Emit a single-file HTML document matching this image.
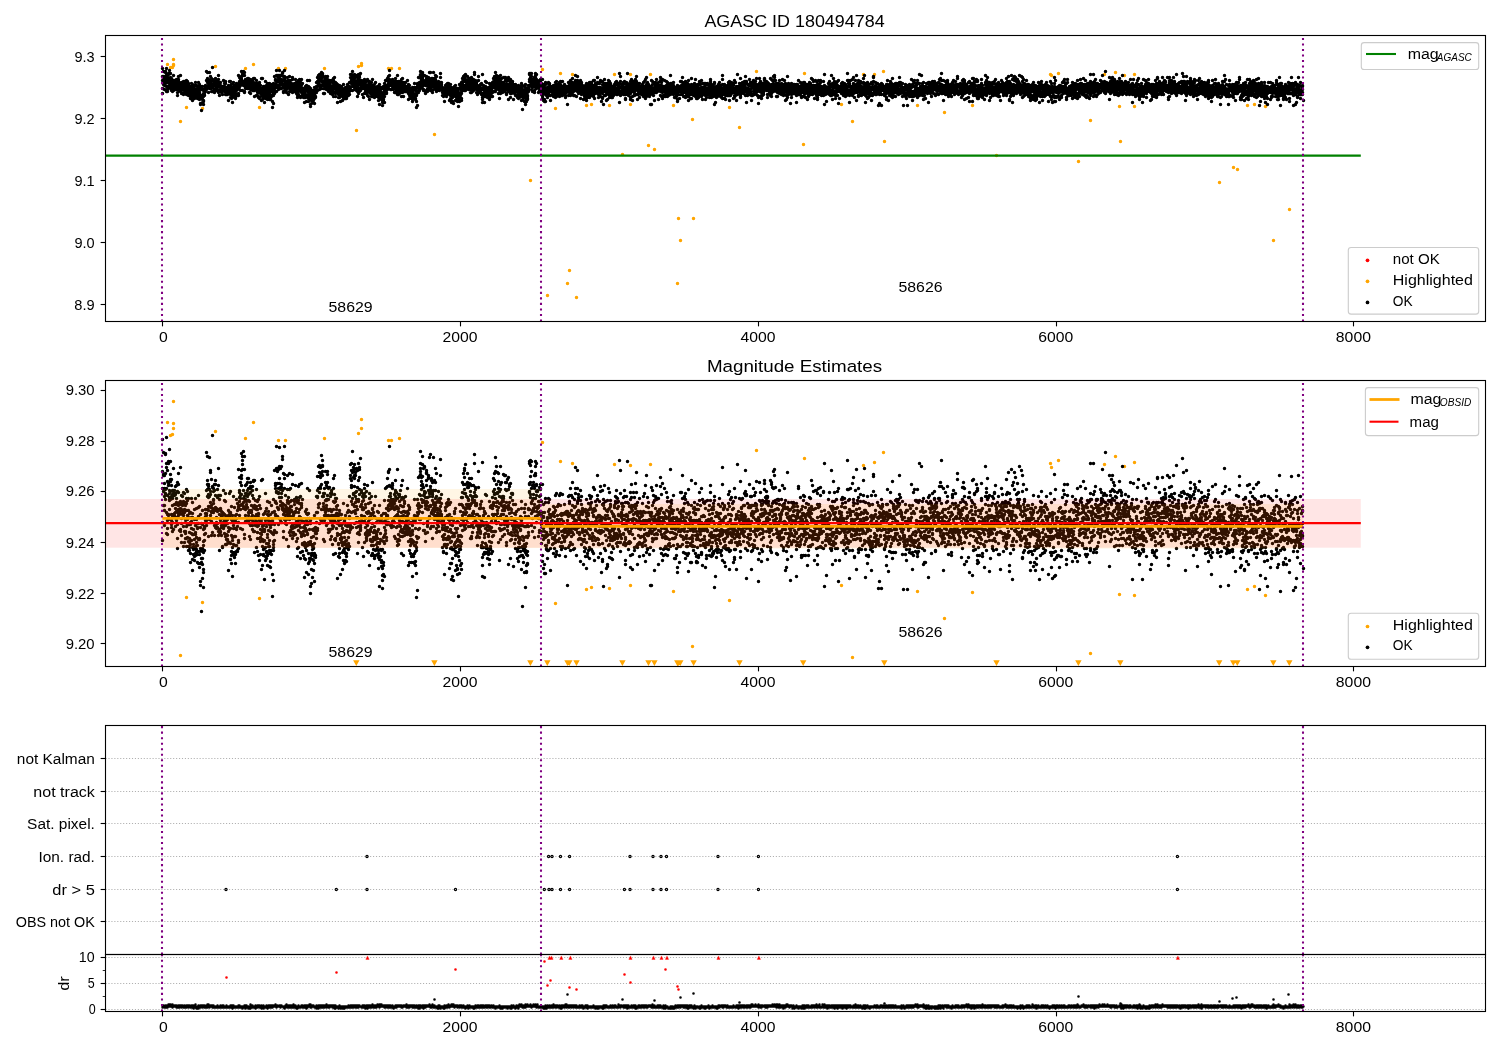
<!DOCTYPE html>
<html><head><meta charset="utf-8"><title>AGASC ID 180494784</title>
<style>html,body{margin:0;padding:0;background:#fff;overflow:hidden}svg{display:block;will-change:transform}text{font-family:"Liberation Sans",sans-serif}</style></head><body>
<svg width="1500" height="1050" viewBox="0 0 1500 1050">
<rect width="1500" height="1050" fill="#fff"/>
<defs>
<clipPath id="c1"><rect x="105.5" y="35.5" width="1380.0" height="286.0"/></clipPath>
<clipPath id="c2"><rect x="105.5" y="380.5" width="1380.0" height="286.0"/></clipPath>
<clipPath id="c3"><rect x="105.5" y="725.5" width="1380.0" height="229.0"/></clipPath>
<clipPath id="c4"><rect x="105.5" y="954.5" width="1380.0" height="57.0"/></clipPath>
</defs>
<g clip-path="url(#c1)">
<path d="M167.5 64.5h0m3 3h0m2 0h0m1-8h0m0 5h0m0 1h0m7 56h0m6-14h0m16 1h0m13-42h0m30 2h0m8-4h0m6 43h0m19-39h0m7 0h0m39 0h0m32 62h0m2-64h0m3-3h0m0 2h0m27 3h0m3 0h0m8 0h0m35 66h0m96 46h0m12-111h0m5 226h0m8-187h0m5-35h0m7 210h0m2-13h0m3-196h0m4 223h0m10-192h0m5-1h0m18 1h0m5-31h0m8 80h0m8-80h0m0 30h0m18 41h0m2-71h0m4 75h0m19-44h0m4 178h0m1-65h0m2 22h0m12-121h0m1 99h0m36-111h0m10 20h0m17-56h0m47 73h0m1-71h0m37 31h0m11 17h0m11-47h0m11 0h0m9-3h0m1 70h0m33-36h0m27 7h0m28-7h0m24 50h0m54-81h0m1 1h0m7-2h0m20 88h0m12-41h0m14-46h0m11-2h0m4 34h0m1 35h0m4-66h0m10-1h0m0 32h0m85 76h0m14-15h0m4 2h0m10-64h0m7-1h0m11 2h0m8 134h0m16-31h0" stroke="#ffa500" stroke-width="3.5" stroke-linecap="round" fill="none"/>
<path d="M162.5 76.5h0m0 4h0m0 8h0m0 5h0m0-25h0m1 3h0m0 10h0m0-4h0m0 7h0m0-7h0m0-1h0m1 8h0m0 1h0m0-5h0m0-3h0m0 12h0m0-7h0m0-3h0m1 4h0m0-11h0m0 8h0m0-9h0m0 10h0m0 1h0m0-6h0m1 10h0m0-12h0m0 1h0m0-7h0m0 23h0m0-11h0m1-2h0m0 4h0m0 6h0m0 3h0m0-1h0m0-14h0m0 10h0m1-7h0m0-5h0m0 5h0m0 7h0m0-13h0m0 14h0m0 1h0m1-6h0m0 3h0m0-2h0m0-3h0m0-10h0m0 13h0m0-2h0m1 0h0m0-8h0m0 10h0m0-5h0m0-1h0m0 1h0m1 12h0m0-4h0m0-8h0m0 11h0m0-7h0m0 6h0m0-9h0m1 2h0m0 7h0m0-5h0m0 8h0m0-7h0m0 3h0m0-6h0m1 5h0m0-11h0m0 7h0m0 8h0m0-10h0m0 1h0m1 3h0m0 2h0m0 1h0m0 0h0m0-7h0m0 2h0m0 5h0m1-6h0m0 5h0m0-1h0m0 4h0m0-2h0m0-7h0m0 2h0m1 6h0m0-5h0m0 1h0m0-1h0m0-4h0m0 5h0m0 2h0m1 3h0m0-10h0m0 16h0m0-14h0m0 11h0m0-5h0m1-6h0m0 5h0m0 1h0m0-2h0m0-9h0m0 3h0m0 5h0m1 2h0m0 4h0m0-6h0m0 3h0m0-1h0m0 0h0m0-2h0m1 7h0m0-6h0m0 5h0m0-15h0m0 9h0m0-1h0m1-1h0m0 3h0m0 7h0m0-5h0m0-3h0m0 9h0m0-4h0m1-5h0m0-2h0m0 2h0m0 2h0m0-2h0m0 2h0m0 0h0m1-3h0m0 11h0m0-13h0m0 3h0m0 5h0m0-5h0m0 3h0m1 6h0m0-7h0m0-1h0m0 6h0m0-10h0m0 5h0m1 4h0m0-7h0m0 5h0m0-4h0m0 7h0m0-3h0m0 4h0m1-7h0m0 9h0m0-12h0m0 7h0m0-5h0m0 8h0m0-12h0m1 3h0m0 9h0m0-5h0m0 2h0m0-8h0m0 7h0m1-5h0m0 11h0m0-5h0m0 6h0m0-10h0m0 2h0m0 6h0m1-1h0m0-1h0m0-5h0m0 3h0m0 4h0m0 1h0m0 1h0m1-7h0m0 1h0m0 7h0m0 2h0m0-12h0m0 8h0m0-5h0m1 2h0m0-1h0m0-2h0m0-1h0m0 6h0m0-10h0m1 11h0m0 3h0m0-6h0m0-4h0m0-1h0m0-2h0m0 16h0m1-9h0m0 3h0m0-4h0m0 4h0m0 1h0m0 1h0m0-1h0m1 1h0m0 2h0m0-5h0m0 4h0m0-12h0m0 3h0m1 8h0m0-5h0m0 5h0m0-2h0m0-3h0m0-9h0m0 7h0m1-4h0m0 10h0m0-3h0m0-4h0m0 6h0m0 1h0m0-2h0m1 5h0m0-4h0m0-4h0m0 6h0m0 0h0m0-7h0m0 1h0m1-1h0m0 9h0m0-16h0m0 3h0m0 2h0m0 6h0m1 2h0m0-3h0m0 1h0m0-9h0m0 15h0m0-3h0m0-3h0m1-4h0m0 15h0m0-9h0m0 9h0m0-1h0m0-17h0m0 12h0m1-1h0m0-9h0m0 7h0m0 3h0m0-9h0m0 21h0m1-13h0m0-2h0m0 0h0m0-9h0m0 16h0m0-13h0m0 10h0m1-6h0m0 1h0m0 10h0m0-4h0m0-10h0m0 11h0m0-5h0m1-5h0m0 4h0m0-4h0m0-1h0m0 3h0m0-3h0m0-1h0m1-1h0m0-3h0m0 1h0m0 5h0m0-4h0m0 4h0m1-2h0m0-3h0m0 1h0m0 0h0m0-7h0m0-9h0m0 17h0m1-3h0m0 0h0m0-13h0m0 6h0m0 1h0m0 1h0m0 2h0m1 0h0m0 10h0m0-13h0m0 6h0m0-3h0m0-2h0m0 4h0m1 0h0m0-2h0m0 6h0m0-16h0m0 16h0m0-8h0m1 1h0m0 2h0m0-7h0m0 5h0m0 4h0m0-9h0m0 11h0m1-1h0m0 5h0m0-13h0m0 8h0m0 2h0m0-4h0m0 4h0m1-3h0m0 1h0m0 5h0m0-11h0m0-13h0m0 13h0m1 1h0m0 3h0m0-1h0m0 3h0m0-6h0m0 5h0m0-2h0m1 6h0m0 3h0m0-13h0m0 6h0m0 0h0m0 0h0m0-5h0m1 5h0m0 0h0m0-3h0m0 8h0m0-12h0m0 11h0m0-10h0m1 9h0m0-3h0m0 5h0m0-5h0m0 2h0m0 2h0m1 0h0m0-7h0m0 4h0m0 4h0m0-8h0m0-2h0m0 5h0m1-10h0m0 10h0m0 7h0m0-13h0m0 6h0m0-3h0m0 9h0m1-5h0m0-4h0m0 9h0m0 4h0m0-12h0m0 7h0m1-3h0m0 4h0m0-3h0m0-3h0m0-3h0m0 3h0m0 6h0m1-4h0m0 0h0m0 2h0m0-3h0m0 6h0m0-2h0m0-4h0m1 0h0m0 0h0m0 3h0m0-2h0m0 3h0m0 4h0m0 0h0m1-8h0m0 2h0m0 2h0m0-1h0m0 0h0m0-9h0m1 7h0m0 1h0m0 3h0m0-5h0m0-3h0m0 5h0m0-2h0m1-3h0m0 6h0m0-8h0m0 13h0m0-7h0m0 1h0m0 4h0m1 1h0m0-6h0m0 4h0m0-3h0m0 4h0m0 2h0m1-5h0m0 4h0m0-1h0m0 2h0m0-6h0m0 5h0m0 0h0m1 7h0m0-13h0m0 0h0m0 13h0m0-10h0m0-5h0m0 6h0m1 2h0m0-6h0m0-1h0m0 4h0m0-3h0m0 6h0m0-12h0m1 16h0m0-16h0m0 5h0m0 0h0m0 8h0m0-4h0m1 1h0m0 5h0m0-12h0m0 4h0m0 10h0m0-3h0m0-3h0m1 4h0m0-2h0m0-2h0m0 1h0m0 9h0m0-14h0m0-1h0m1 3h0m0-8h0m0 6h0m0 1h0m0 5h0m0-7h0m1 9h0m0-11h0m0 7h0m0 4h0m0 0h0m0 1h0m0-1h0m1 0h0m0 2h0m0-10h0m0 6h0m0-4h0m0-3h0m0 5h0m1 3h0m0-5h0m0-3h0m0 7h0m0-4h0m0-4h0m0-3h0m1 12h0m0-6h0m0 6h0m0 0h0m0-11h0m0 1h0m1 0h0m0-1h0m0 4h0m0 5h0m0 0h0m0-18h0m0 20h0m1-8h0m0-6h0m0 0h0m0 2h0m0-1h0m0 2h0m0-7h0m1 8h0m0-6h0m0 5h0m0 6h0m0-8h0m0 0h0m1-6h0m0 3h0m0 2h0m0-4h0m0 7h0m0-13h0m0 6h0m1-4h0m0 2h0m0 0h0m0-1h0m0 10h0m0 6h0m0-18h0m1 13h0m0-3h0m0-11h0m0 12h0m0 2h0m0-2h0m0-2h0m1-6h0m0 17h0m0-9h0m0-11h0m0 19h0m0-9h0m1 6h0m0-1h0m0-2h0m0-6h0m0 2h0m0 2h0m0 2h0m1-1h0m0-3h0m0 4h0m0-1h0m0-3h0m0-2h0m0 4h0m1-5h0m0 7h0m0 3h0m0-6h0m0-3h0m0 2h0m1 2h0m0 4h0m0-6h0m0 7h0m0-10h0m0 8h0m0-6h0m1 3h0m0-2h0m0 5h0m0 6h0m0-9h0m0 3h0m0 2h0m1-9h0m0 9h0m0-7h0m0-1h0m0-1h0m0 14h0m0-4h0m1-2h0m0-2h0m0 2h0m0-1h0m0-2h0m0 4h0m1-6h0m0 8h0m0-10h0m0 9h0m0-2h0m0-7h0m0 8h0m1-6h0m0 0h0m0 8h0m0-5h0m0 3h0m0-10h0m0 0h0m1 18h0m0-6h0m0-12h0m0 7h0m0-1h0m0 0h0m1 3h0m0 1h0m0-5h0m0 6h0m0-5h0m0 3h0m0 2h0m1-1h0m0-8h0m0 4h0m0 2h0m0 9h0m0-7h0m0-3h0m1 0h0m0-2h0m0 4h0m0 4h0m0 4h0m0-3h0m0-3h0m1-2h0m0-1h0m0-3h0m0 14h0m0-8h0m0-3h0m1-4h0m0 16h0m0-6h0m0-4h0m0 1h0m0-1h0m0-4h0m1 8h0m0-4h0m0 2h0m0-5h0m0 11h0m0-5h0m0 2h0m1-2h0m0-2h0m0-1h0m0 12h0m0-22h0m0 10h0m0 1h0m1 2h0m0-13h0m0 11h0m0 10h0m0-5h0m0-2h0m1 1h0m0-7h0m0 3h0m0 8h0m0-2h0m0 1h0m0-6h0m1 0h0m0-1h0m0 2h0m0 4h0m0-9h0m0 16h0m0-9h0m1-5h0m0 6h0m0 4h0m0-1h0m0-11h0m0-5h0m1 8h0m0-4h0m0 11h0m0-1h0m0-2h0m0-4h0m0 8h0m1 2h0m0-13h0m0 6h0m0-9h0m0 13h0m0-5h0m0-3h0m1 2h0m0-3h0m0 7h0m0 2h0m0-10h0m0 7h0m0-5h0m1 7h0m0-2h0m0 1h0m0-5h0m0-6h0m0 16h0m1-3h0m0 2h0m0-12h0m0 2h0m0 11h0m0-9h0m0 0h0m1-6h0m0 12h0m0-1h0m0 0h0m0-4h0m0-2h0m0-1h0m1 19h0m0-19h0m0 3h0m0 10h0m0-13h0m0-2h0m1 5h0m0 4h0m0 0h0m0-2h0m0 10h0m0-9h0m0-11h0m1 6h0m0 2h0m0-5h0m0 7h0m0-17h0m0 14h0m0-4h0m1-7h0m0 4h0m0-3h0m0 7h0m0-1h0m0-7h0m0 5h0m1 7h0m0-7h0m0-3h0m0-11h0m0 11h0m0-6h0m1 1h0m0 9h0m0-9h0m0 3h0m0-4h0m0 12h0m0 0h0m1-2h0m0-4h0m0-1h0m0-5h0m0 10h0m0 4h0m0-8h0m1 6h0m0-9h0m0-8h0m0 12h0m0-7h0m0 4h0m1 5h0m0-9h0m0 5h0m0 3h0m0-3h0m0 8h0m0-8h0m1 8h0m0-13h0m0 5h0m0 2h0m0-3h0m0 2h0m0 3h0m1 1h0m0-13h0m0 9h0m0 3h0m0 1h0m0 0h0m0-12h0m1 19h0m0-8h0m0 7h0m0-6h0m0-9h0m0 10h0m1-8h0m0 8h0m0-16h0m0 16h0m0-10h0m0 12h0m0-8h0m1 8h0m0-2h0m0 3h0m0-2h0m0-5h0m0 2h0m0 1h0m1 0h0m0 0h0m0 1h0m0 2h0m0 1h0m0 3h0m1-9h0m0-3h0m0 5h0m0-8h0m0 9h0m0-3h0m0 1h0m1-2h0m0 5h0m0-1h0m0-1h0m0-1h0m0 10h0m0-8h0m1 0h0m0-10h0m0 10h0m0-6h0m0 5h0m0 6h0m0-3h0m1-8h0m0 4h0m0 6h0m0-3h0m0 4h0m0-8h0m1 6h0m0-3h0m0-3h0m0 7h0m0-5h0m0 2h0m0-2h0m1 2h0m0 3h0m0-1h0m0 2h0m0 1h0m0-13h0m0-2h0m1 9h0m0 1h0m0 4h0m0-5h0m0 5h0m0-2h0m1 1h0m0-6h0m0-1h0m0 4h0m0-4h0m0 0h0m0 8h0m1-5h0m0 3h0m0-3h0m0 5h0m0-12h0m0 4h0m0 0h0m1 10h0m0-4h0m0-6h0m0 2h0m0 3h0m0 1h0m0-7h0m1 15h0m0-5h0m0 3h0m0-11h0m0 11h0m0-6h0m1-6h0m0 7h0m0-2h0m0 1h0m0-3h0m0-6h0m0 14h0m1-9h0m0-3h0m0-3h0m0 10h0m0-5h0m0 3h0m0 0h0m1-5h0m0 15h0m0-7h0m0-3h0m0 4h0m0 5h0m1-12h0m0 7h0m0-12h0m0 13h0m0-7h0m0-1h0m0 4h0m1 7h0m0-1h0m0-3h0m0 3h0m0-11h0m0 11h0m0-6h0m1 0h0m0 8h0m0 1h0m0-7h0m0 1h0m0 0h0m0 0h0m1 11h0m0-5h0m0-4h0m0-1h0m0-3h0m0 5h0m1-8h0m0 11h0m0-7h0m0 0h0m0 4h0m0-5h0m0 6h0m1-10h0m0 5h0m0-2h0m0 13h0m0-11h0m0 5h0m0-9h0m1-6h0m0 6h0m0 5h0m0-3h0m0 1h0m0 5h0m0-3h0m1 10h0m0-13h0m0 8h0m0-3h0m0 5h0m0-12h0m1 8h0m0-14h0m0 17h0m0 1h0m0-8h0m0-3h0m0 7h0m1-5h0m0-1h0m0 9h0m0 7h0m0 2h0m0-13h0m0 0h0m1 7h0m0-6h0m0 2h0m0 0h0m0-4h0m0 11h0m1-8h0m0-1h0m0 3h0m0-1h0m0 6h0m0-6h0m0-6h0m1 2h0m0 8h0m0-6h0m0-4h0m0 4h0m0 4h0m0-3h0m1 1h0m0-9h0m0 11h0m0-8h0m0 7h0m0 6h0m0-9h0m1-4h0m0 1h0m0-1h0m0 6h0m0-6h0m0 7h0m1-15h0m0 0h0m0 10h0m0-4h0m0 3h0m0-5h0m0 0h0m1 4h0m0-8h0m0 4h0m0-4h0m0-5h0m0 4h0m0 9h0m1-5h0m0-10h0m0 9h0m0-4h0m0 4h0m0 0h0m1-3h0m0-5h0m0 5h0m0-4h0m0 12h0m0-15h0m0 10h0m1-8h0m0 1h0m0 10h0m0-12h0m0 5h0m0 8h0m0-8h0m1-4h0m0 12h0m0-9h0m0 9h0m0-3h0m0-13h0m0 4h0m1 6h0m0-5h0m0-2h0m0-2h0m0 1h0m0 2h0m1 9h0m0-4h0m0 3h0m0 9h0m0-5h0m0-6h0m0 2h0m1 3h0m0-7h0m0 8h0m0-3h0m0-4h0m0 6h0m0 6h0m1-7h0m0-1h0m0-7h0m0 5h0m0 2h0m0-9h0m1 8h0m0-1h0m0 0h0m0 6h0m0-2h0m0-8h0m0 6h0m1-5h0m0-1h0m0 10h0m0-7h0m0-6h0m0 0h0m0 7h0m1 8h0m0-4h0m0 0h0m0-2h0m0-2h0m0-3h0m0 10h0m1-3h0m0-2h0m0 5h0m0-10h0m0 7h0m0 3h0m1-9h0m0 4h0m0 5h0m0-2h0m0-6h0m0 0h0m0 11h0m1-12h0m0 11h0m0-11h0m0 7h0m0-8h0m0 7h0m0-1h0m1 1h0m0 2h0m0 1h0m0-2h0m0-1h0m0 7h0m1-6h0m0 1h0m0-9h0m0 3h0m0 2h0m0-7h0m0 18h0m1-14h0m0 2h0m0 3h0m0-10h0m0 11h0m0 4h0m0-9h0m1 0h0m0-1h0m0 5h0m0 6h0m0-1h0m0 4h0m0-8h0m1-2h0m0-2h0m0 1h0m0 2h0m0-4h0m0 7h0m1 12h0m0-11h0m0-5h0m0 2h0m0-1h0m0 5h0m0-8h0m1 10h0m0 3h0m0-10h0m0 1h0m0 3h0m0-3h0m0 5h0m1 4h0m0-2h0m0 1h0m0-10h0m0 3h0m0-4h0m1 7h0m0-4h0m0 4h0m0-1h0m0-5h0m0 15h0m0-10h0m1-4h0m0 6h0m0-1h0m0 1h0m0-7h0m0 1h0m0 2h0m1 11h0m0-11h0m0 5h0m0 0h0m0 2h0m0-5h0m0-1h0m1 3h0m0 2h0m0-1h0m0 4h0m0-14h0m0 6h0m1 8h0m0-10h0m0 7h0m0-4h0m0 1h0m0 3h0m0-7h0m1 1h0m0 7h0m0-9h0m0 6h0m0 1h0m0-7h0m0 11h0m1-5h0m0 1h0m0 3h0m0 1h0m0-8h0m0 6h0m1-7h0m0 2h0m0 0h0m0 3h0m0 0h0m0-8h0m0-2h0m1 2h0m0 8h0m0-1h0m0-1h0m0 3h0m0-6h0m0 2h0m1 3h0m0-3h0m0 0h0m0-4h0m0 0h0m0-5h0m0 4h0m1 4h0m0-13h0m0 13h0m0-16h0m0 15h0m0-12h0m1 6h0m0-5h0m0 2h0m0 6h0m0-10h0m0 3h0m0-5h0m1 10h0m0-2h0m0-6h0m0 0h0m0 14h0m0-19h0m0 5h0m1-1h0m0 2h0m0 4h0m0 3h0m0 2h0m0-5h0m1-2h0m0-4h0m0 2h0m0-3h0m0 10h0m0 5h0m0-12h0m1 9h0m0-3h0m0-6h0m0 4h0m0-5h0m0 10h0m0-4h0m1 6h0m0-13h0m0 6h0m0 3h0m0 3h0m0 3h0m0-7h0m1-7h0m0 9h0m0-5h0m0 11h0m0 5h0m0-9h0m1-9h0m0 13h0m0 2h0m0-10h0m0 6h0m0-15h0m0 9h0m1-8h0m0 7h0m0-2h0m0 11h0m0-16h0m0 2h0m0 11h0m1 2h0m0-1h0m0-4h0m0 3h0m0 2h0m0-17h0m0 17h0m1-3h0m0-7h0m0 7h0m0-3h0m0 4h0m0-7h0m1 2h0m0 2h0m0 3h0m0-3h0m0 0h0m0 9h0m0-12h0m1 0h0m0 0h0m0 5h0m0 10h0m0-14h0m0-1h0m0 3h0m1-5h0m0 1h0m0 12h0m0-6h0m0 1h0m0-9h0m1 12h0m0-9h0m0 2h0m0 1h0m0 5h0m0-3h0m0 4h0m1-2h0m0 2h0m0-5h0m0 7h0m0-1h0m0 0h0m0-11h0m1-2h0m0 16h0m0-9h0m0 5h0m0-1h0m0-1h0m0 3h0m1-6h0m0 5h0m0 0h0m0-7h0m0 4h0m0 8h0m1 3h0m0-17h0m0 6h0m0-7h0m0 10h0m0-4h0m0 4h0m1-4h0m0 4h0m0-5h0m0 7h0m0-3h0m0-6h0m0 9h0m1-6h0m0 7h0m0 2h0m0-7h0m0 4h0m0-11h0m1 3h0m0 11h0m0-7h0m0-4h0m0-6h0m0 14h0m0-7h0m1 9h0m0-9h0m0 6h0m0-1h0m0 5h0m0-4h0m0 2h0m1-10h0m0 6h0m0-3h0m0 5h0m0-3h0m0 3h0m0 5h0m1-5h0m0 4h0m0-14h0m0 9h0m0 4h0m0-3h0m1 2h0m0 1h0m0-3h0m0 0h0m0-5h0m0 4h0m0-3h0m1 4h0m0-4h0m0-2h0m0 4h0m0 5h0m0 1h0m0-3h0m1 7h0m0-10h0m0 5h0m0 1h0m0 1h0m0-11h0m1 7h0m0-5h0m0 5h0m0-9h0m0 13h0m0 0h0m0 7h0m1-9h0m0-7h0m0 3h0m0-3h0m0 5h0m0 4h0m0-10h0m1 8h0m0-7h0m0 10h0m0-5h0m0-6h0m0 12h0m0-1h0m1 7h0m0-3h0m0-7h0m0 4h0m0 2h0m0-13h0m1 4h0m0 9h0m0-2h0m0-1h0m0-12h0m0 6h0m0 1h0m1 9h0m0-11h0m0-3h0m0 2h0m0 6h0m0-3h0m0-10h0m1 8h0m0-1h0m0-4h0m0 2h0m0-1h0m0-7h0m1 5h0m0 4h0m0 4h0m0-13h0m0 12h0m0-5h0m0 0h0m1 0h0m0-9h0m0 11h0m0-2h0m0 0h0m0-7h0m0 8h0m1-12h0m0 10h0m0-10h0m0 8h0m0 4h0m0-5h0m0 1h0m1 0h0m0-14h0m0 5h0m0 7h0m0 3h0m0-6h0m1 5h0m0-3h0m0 2h0m0 1h0m0-4h0m0 9h0m0-7h0m1 7h0m0-6h0m0 6h0m0-5h0m0 1h0m0-1h0m0 0h0m1 4h0m0-9h0m0 0h0m0 1h0m0 3h0m0 5h0m1-5h0m0 4h0m0-2h0m0 4h0m0-1h0m0-5h0m0 1h0m1 1h0m0 0h0m0-1h0m0 3h0m0 1h0m0-7h0m0 11h0m1-5h0m0-4h0m0-1h0m0 10h0m0-11h0m0-3h0m0 3h0m1 0h0m0 4h0m0-3h0m0 8h0m0-6h0m0 3h0m1 2h0m0 4h0m0-8h0m0 9h0m0-19h0m0 8h0m0 3h0m1 1h0m0-1h0m0-1h0m0 9h0m0-2h0m0-11h0m0 10h0m1-3h0m0-6h0m0 1h0m0 6h0m0 4h0m0-11h0m1 6h0m0-1h0m0-6h0m0 11h0m0-8h0m0 6h0m0-1h0m1-2h0m0-4h0m0 3h0m0 0h0m0 4h0m0 6h0m0-17h0m1 5h0m0-2h0m0 9h0m0-3h0m0-10h0m0 10h0m0 4h0m1-7h0m0 5h0m0-3h0m0 9h0m0-14h0m0 4h0m1 5h0m0-5h0m0 2h0m0 2h0m0-7h0m0 8h0m0-7h0m1 7h0m0-9h0m0 7h0m0 0h0m0-3h0m0 4h0m0 1h0m1 0h0m0-4h0m0 2h0m0-2h0m0 0h0m0 1h0m1 0h0m0 3h0m0-5h0m0 4h0m0-3h0m0-7h0m0 9h0m1-3h0m0-2h0m0 4h0m0 11h0m0-6h0m0-2h0m0-1h0m1 1h0m0 4h0m0-10h0m0 5h0m0-2h0m0-3h0m0 13h0m1-4h0m0-2h0m0-1h0m0-3h0m0 8h0m0-4h0m1-4h0m0 4h0m0 5h0m0-6h0m0 2h0m0 5h0m0-4h0m1-3h0m0-1h0m0-3h0m0 6h0m0-2h0m0 10h0m0-12h0m1 4h0m0 5h0m0-5h0m0-5h0m0 9h0m0-1h0m0-8h0m1-5h0m0 4h0m0 7h0m0 4h0m0 0h0m0-2h0m1-1h0m0-7h0m0 6h0m0-4h0m0-2h0m0 11h0m0-1h0m1 3h0m0-9h0m0 3h0m0-1h0m0 13h0m0-20h0m0 6h0m1 12h0m0-21h0m0 8h0m0-5h0m0-4h0m0 3h0m1-2h0m0-7h0m0 15h0m0-15h0m0 13h0m0-4h0m0-1h0m1 5h0m0-4h0m0-4h0m0 2h0m0 1h0m0-8h0m0 11h0m1-6h0m0-11h0m0 4h0m0-1h0m0 14h0m0-11h0m0-1h0m1 4h0m0 3h0m0-5h0m0 1h0m0 5h0m0-7h0m1 6h0m0-6h0m0 2h0m0 7h0m0-14h0m0 7h0m0-5h0m1 16h0m0-15h0m0 8h0m0-1h0m0 1h0m0-3h0m0 9h0m1-8h0m0-6h0m0 15h0m0-9h0m0 0h0m0-6h0m1 9h0m0 1h0m0-3h0m0 2h0m0 9h0m0-2h0m0-10h0m1-3h0m0 1h0m0-3h0m0 0h0m0 8h0m0-1h0m0-7h0m1 13h0m0 0h0m0-1h0m0 3h0m0-6h0m0-2h0m0-1h0m1 3h0m0-8h0m0 1h0m0-1h0m0 7h0m0-3h0m1 0h0m0-9h0m0 15h0m0 0h0m0-6h0m0 1h0m0-1h0m1-1h0m0 1h0m0 3h0m0 6h0m0-18h0m0 12h0m0-4h0m1 6h0m0 3h0m0-11h0m0 3h0m0 5h0m0-8h0m1 3h0m0 4h0m0-3h0m0 0h0m0 10h0m0-9h0m0-5h0m1 7h0m0-5h0m0 3h0m0-11h0m0 14h0m0 3h0m0-5h0m1 4h0m0-4h0m0 0h0m0-6h0m0 8h0m0 1h0m0-2h0m1-5h0m0 4h0m0-9h0m0 10h0m0-3h0m0-3h0m1 3h0m0 5h0m0-2h0m0-9h0m0 15h0m0-1h0m0-7h0m1 2h0m0-2h0m0 3h0m0 2h0m0 2h0m0-1h0m0-4h0m1-4h0m0 5h0m0 1h0m0 1h0m0 1h0m0-6h0m1 2h0m0-2h0m0 0h0m0 1h0m0 2h0m0 1h0m0 3h0m1-8h0m0 3h0m0-8h0m0 10h0m0-1h0m0-13h0m0 13h0m1 2h0m0-1h0m0 1h0m0-2h0m0-2h0m0-2h0m0 5h0m1 3h0m0 5h0m0-6h0m0 1h0m0 2h0m0-5h0m1 3h0m0 2h0m0-4h0m0 4h0m0-4h0m0 8h0m0 0h0m1-7h0m0 5h0m0-2h0m0 2h0m0-4h0m0 1h0m0 10h0m1-14h0m0-2h0m0 4h0m0 5h0m0-4h0m0-5h0m1-1h0m0 8h0m0-8h0m0 12h0m0-1h0m0-2h0m0-3h0m1-6h0m0 5h0m0-2h0m0 5h0m0-9h0m0 11h0m0-2h0m1-5h0m0 1h0m0 4h0m0 1h0m0-1h0m0-2h0m0-7h0m1 17h0m0-8h0m0-8h0m0 8h0m0-6h0m0 2h0m1 2h0m0-6h0m0 5h0m0 9h0m0-3h0m0-2h0m0-3h0m1 4h0m0-6h0m0 3h0m0 7h0m0-11h0m0 15h0m0-9h0m1-4h0m0 12h0m0-6h0m0-3h0m0 5h0m0 5h0m1-7h0m0-3h0m0 11h0m0-12h0m0 4h0m0-7h0m0 4h0m1-6h0m0 8h0m0-2h0m0-6h0m0 5h0m0 3h0m0-8h0m1 14h0m0-15h0m0 10h0m0-5h0m0 6h0m0-3h0m0 2h0m1 1h0m0 3h0m0-6h0m0-2h0m0-1h0m0-2h0m1 6h0m0 6h0m0-12h0m0 12h0m0-10h0m0 11h0m0-9h0m1-4h0m0 9h0m0 9h0m0-12h0m0 2h0m0-4h0m0 0h0m1 6h0m0-14h0m0 11h0m0-2h0m0 8h0m0-8h0m1 6h0m0-7h0m0 1h0m0-4h0m0-3h0m0 8h0m0 1h0m1-11h0m0 14h0m0 2h0m0-18h0m0 11h0m0-1h0m0-4h0m1-6h0m0 7h0m0-2h0m0 3h0m0-9h0m0-3h0m0 6h0m1 4h0m0-3h0m0 4h0m0-10h0m0-3h0m0 10h0m1 4h0m0-15h0m0 2h0m0-1h0m0 13h0m0-8h0m0-1h0m1 5h0m0 4h0m0-15h0m0 12h0m0 4h0m0-9h0m0-2h0m1 6h0m0-1h0m0 0h0m0 4h0m0-2h0m0-1h0m0-3h0m1 0h0m0 2h0m0-4h0m0 8h0m0-9h0m0-3h0m1 13h0m0-2h0m0-4h0m0 1h0m0-4h0m0 3h0m0-4h0m1 6h0m0-7h0m0 6h0m0 3h0m0 0h0m0 0h0m0-8h0m1 0h0m0 13h0m0-3h0m0-7h0m0-1h0m0 3h0m1 0h0m0 8h0m0-13h0m0 13h0m0-3h0m0-12h0m0 10h0m1-4h0m0 4h0m0 4h0m0-5h0m0-3h0m0 6h0m0-7h0m1 0h0m0-3h0m0 7h0m0 2h0m0-2h0m0 1h0m0 3h0m1-3h0m0-4h0m0 0h0m0-9h0m0 7h0m0-9h0m1 12h0m0-2h0m0 0h0m0 2h0m0-4h0m0 0h0m0 8h0m1-4h0m0 2h0m0-4h0m0 7h0m0-5h0m0 8h0m0-4h0m1 3h0m0 3h0m0-2h0m0-1h0m0-2h0m0-3h0m1 4h0m0 0h0m0-14h0m0 14h0m0-1h0m0-9h0m0 9h0m1-2h0m0 0h0m0-2h0m0 7h0m0-2h0m0-1h0m0-2h0m1-2h0m0 0h0m0 6h0m0-2h0m0-5h0m0 5h0m0 2h0m1 3h0m0 0h0m0-6h0m0 6h0m0-5h0m0-6h0m1 5h0m0 5h0m0 6h0m0 3h0m0-28h0m0 23h0m0-3h0m1-6h0m0-3h0m0 4h0m0-2h0m0 9h0m0-9h0m0 8h0m1-9h0m0 0h0m0 16h0m0-10h0m0 4h0m0-5h0m1-5h0m0 4h0m0 3h0m0 3h0m0 0h0m0-15h0m0 10h0m1 4h0m0-1h0m0-6h0m0 2h0m0 4h0m0-12h0m0 7h0m1 1h0m0-1h0m0 0h0m0 8h0m0-8h0m0 7h0m0-1h0m1 1h0m0-5h0m0 4h0m0-3h0m0 4h0m0-9h0m1 6h0m0 6h0m0-9h0m0-7h0m0 14h0m0-7h0m0-1h0m1-5h0m0 11h0m0 0h0m0-1h0m0-9h0m0 5h0m0 5h0m1-2h0m0-3h0m0-2h0m0 2h0m0-6h0m0 12h0m1 0h0m0-5h0m0 1h0m0-6h0m0 1h0m0-5h0m0 3h0m1-1h0m0 3h0m0-6h0m0 2h0m0 1h0m0 7h0m0-13h0m1 13h0m0-10h0m0-5h0m0 4h0m0 6h0m0-5h0m0-3h0m1 10h0m0 3h0m0-9h0m0-10h0m0 16h0m0-12h0m1 7h0m0 6h0m0-8h0m0 3h0m0-5h0m0 7h0m0-11h0m1 8h0m0-7h0m0 10h0m0 1h0m0-6h0m0 0h0m0 4h0m1-9h0m0 12h0m0-3h0m0-7h0m0 2h0m0 13h0m1-6h0m0 3h0m0-8h0m0 16h0m0-14h0m0-3h0m0 6h0m1 2h0m0-10h0m0 14h0m0-13h0m0-5h0m0 15h0m0-3h0m1 2h0m0-3h0m0 1h0m0-9h0m0 5h0m0 1h0m0-2h0m1 10h0m0-7h0m0-3h0m0 1h0m0 0h0m0 7h0m1-8h0m0 3h0m0-3h0m0-5h0m0 6h0m0 3h0m0-4h0m1 7h0m0-12h0m0 8h0m0-1h0m0 6h0m0-2h0m0 3h0m1-11h0m0 9h0m0-11h0m0-1h0m0 8h0m0-1h0m1-3h0m0 7h0m0 6h0m0-15h0m0 8h0m0-3h0m0 9h0m1-5h0m0 0h0m0 1h0m0-4h0m0 5h0m0-1h0m0-11h0m1 6h0m0 7h0m0-14h0m0 7h0m0 1h0m0 14h0m0-19h0m1 9h0m0-2h0m0-8h0m0 7h0m0-7h0m0 5h0m1-2h0m0 15h0m0-18h0m0 12h0m0-6h0m0 8h0m0-8h0m1 0h0m0-4h0m0 7h0m0-2h0m0 5h0m0 2h0m0-6h0m1 2h0m0 3h0m0-9h0m0-2h0m0 8h0m0-8h0m1 8h0m0 1h0m0 0h0m0 0h0m0 0h0m0 9h0m0-15h0m1 4h0m0 3h0m0 2h0m0-7h0m0 2h0m0 3h0m0-3h0m1 4h0m0-8h0m0 2h0m0 6h0m0 3h0m0-6h0m0 1h0m1-1h0m0 0h0m0-2h0m0 3h0m0-2h0m0-2h0m1 5h0m0 0h0m0-2h0m0 6h0m0-6h0m0 8h0m0-2h0m1-2h0m0 5h0m0-3h0m0-6h0m0 3h0m0-3h0m0-4h0m1 7h0m0-3h0m0 5h0m0 3h0m0-10h0m0 6h0m0 0h0m1-3h0m0 0h0m0 3h0m0-6h0m0 9h0m0-7h0m1 11h0m0-15h0m0 11h0m0-13h0m0 6h0m0-2h0m0 1h0m1 6h0m0 2h0m0-2h0m0-5h0m0 20h0m0-17h0m0 2h0m1 1h0m0 3h0m0-3h0m0-2h0m0-1h0m0 5h0m1-2h0m0-1h0m0-9h0m0 1h0m0 3h0m0 12h0m0-9h0m1 12h0m0-9h0m0-6h0m0 5h0m0 2h0m0-9h0m0-3h0m1 15h0m0-5h0m0 7h0m0-1h0m0-4h0m0-4h0m0-3h0m1 6h0m0-6h0m0 9h0m0-2h0m0-4h0m0 7h0m1-12h0m0 2h0m0 0h0m0-4h0m0 6h0m0-6h0m0 6h0m1-10h0m0 0h0m0-7h0m0 5h0m0-6h0m0 6h0m0 6h0m1-11h0m0 3h0m0 5h0m0-9h0m0 9h0m0-3h0m1 5h0m0-11h0m0 7h0m0-4h0m0 10h0m0-3h0m0 6h0m1-3h0m0-7h0m0 6h0m0 2h0m0-4h0m0 8h0m0-12h0m1 2h0m0-2h0m0 6h0m0-3h0m0-3h0m0 6h0m0 1h0m1-2h0m0-4h0m0 5h0m0 7h0m0-2h0m0-13h0m1 2h0m0-4h0m0-2h0m0 4h0m0 5h0m0-6h0m0 11h0m1-1h0m0-5h0m0-2h0m0 0h0m0 9h0m0-14h0m0 8h0m1 3h0m0-4h0m0 3h0m0 1h0m0-4h0m0 6h0m1-4h0m0 9h0m0-6h0m0-1h0m0-1h0m0 3h0m0 5h0m1-2h0m0-4h0m0-3h0m0 8h0m0-7h0m0-2h0m0-2h0m1-1h0m0 7h0m0-6h0m0 0h0m0 2h0m0 5h0m0-5h0m1 1h0m0 5h0m0 3h0m0 3h0m0-5h0m0-2h0m1 4h0m0 5h0m0-10h0m0 12h0m0-8h0m0-11h0m0 13h0m1-5h0m0 3h0m0-3h0m0 13h0m0-16h0m0 9h0m0 0h0m1 8h0m0-2h0m0-7h0m0 0h0m0-1h0m0-5h0m1 6h0m0 2h0m0-2h0m0 9h0m0-19h0m0 6h0m0-4h0m1 11h0m0 0h0m0-6h0m0 5h0m0-2h0m0 0h0m0-1h0m1 0h0m0 1h0m0-5h0m0 8h0m0-8h0m0 10h0m0-9h0m1 7h0m0-13h0m0 1h0m0 10h0m0 0h0m0-7h0m1 0h0m0 1h0m0-2h0m0 4h0m0-6h0m0 0h0m0 6h0m1-2h0m0 4h0m0 0h0m0 9h0m0-13h0m0 3h0m0 5h0m1-5h0m0 1h0m0-2h0m0-3h0m0 2h0m0 1h0m1-2h0m0 7h0m0-2h0m0 0h0m0-3h0m0-1h0m0 3h0m1 5h0m0-6h0m0-4h0m0 2h0m0-3h0m0 1h0m0 7h0m1 2h0m0-8h0m0-2h0m0 1h0m0 6h0m0 0h0m0 1h0m1-11h0m0 4h0m0 7h0m0-2h0m0 6h0m0-8h0m1 6h0m0-14h0m0 8h0m0 7h0m0-8h0m0 5h0m0-4h0m1 1h0m0 1h0m0-3h0m0 2h0m0-6h0m0 3h0m0 6h0m1-2h0m0-2h0m0 1h0m0-6h0m0 7h0m0 2h0m1 3h0m0-7h0m0-2h0m0 5h0m0-10h0m0 6h0m0 1h0m1 0h0m0 0h0m0 5h0m0-13h0m0 8h0m0-5h0m0 2h0m1 7h0m0-4h0m0-2h0m0 1h0m0-2h0m0 9h0m0-4h0m1-10h0m0 5h0m0 9h0m0-4h0m0-2h0m0 5h0m1-2h0m0-6h0m0 0h0m0 2h0m0 0h0m0 2h0m0 2h0m1-1h0m0-7h0m0 6h0m0 3h0m0 0h0m0-3h0m0 0h0m1-4h0m0 11h0m0-5h0m0-2h0m0 5h0m0-6h0m1-3h0m0 0h0m0 0h0m0 5h0m0 1h0m0-6h0m0 4h0m1 1h0m0-1h0m0-2h0m0 3h0m0-2h0m0 15h0m0-18h0m1 5h0m0-5h0m0 4h0m0 1h0m0 4h0m0-8h0m0-5h0m1 5h0m0 7h0m0-10h0m0-1h0m0 3h0m0-4h0m1 8h0m0 5h0m0-2h0m0-2h0m0-11h0m0 10h0m0-1h0m1 1h0m0-1h0m0-3h0m0-4h0m0 10h0m0-3h0m0-2h0m1-9h0m0 9h0m0 0h0m0 4h0m0-7h0m0-2h0m0 12h0m1-4h0m0-3h0m0 1h0m0 7h0m0-8h0m0 4h0m1-2h0m0-4h0m0-2h0m0 0h0m0 6h0m0 6h0m0-7h0m1-7h0m0 3h0m0 6h0m0-15h0m0 5h0m0 10h0m0-2h0m1-2h0m0 0h0m0 2h0m0 8h0m0-6h0m0-1h0m1-9h0m0-4h0m0 8h0m0 7h0m0-2h0m0-3h0m0-3h0m1 4h0m0-2h0m0 5h0m0 3h0m0-10h0m0-1h0m0 0h0m1 5h0m0 5h0m0-3h0m0 2h0m0-4h0m0 4h0m0-3h0m1-2h0m0-3h0m0 6h0m0-9h0m0 12h0m0 6h0m1-16h0m0 12h0m0-5h0m0-1h0m0-4h0m0 2h0m0 7h0m1-2h0m0-1h0m0-5h0m0 1h0m0-1h0m0 7h0m0-2h0m1 9h0m0-13h0m0 4h0m0 3h0m0 0h0m0-5h0m1 8h0m0-4h0m0-3h0m0 6h0m0-7h0m0 4h0m0-6h0m1 11h0m0-12h0m0 10h0m0-6h0m0 1h0m0 1h0m0-3h0m1 1h0m0 11h0m0-13h0m0 6h0m0-7h0m0-3h0m0 8h0m1 0h0m0-3h0m0-1h0m0-2h0m0 11h0m0 1h0m1-13h0m0 3h0m0 1h0m0 2h0m0-4h0m0-2h0m0 11h0m1-3h0m0 5h0m0-15h0m0 7h0m0 3h0m0-7h0m0 9h0m1-5h0m0-7h0m0 3h0m0 5h0m0-6h0m0 1h0m1-2h0m0 6h0m0-1h0m0-6h0m0 13h0m0-3h0m0 0h0m1 1h0m0-7h0m0 2h0m0-3h0m0 6h0m0 1h0m0 3h0m1 1h0m0-2h0m0-14h0m0 6h0m0 6h0m0-5h0m0 0h0m1 2h0m0 0h0m0-4h0m0-5h0m0 12h0m0 6h0m1-13h0m0 5h0m0 0h0m0-2h0m0-5h0m0 5h0m0 5h0m1-6h0m0 0h0m0 2h0m0-5h0m0 4h0m0-4h0m0 4h0m1-1h0m0-5h0m0-5h0m0 15h0m0-2h0m0-7h0m1 11h0m0-3h0m0 0h0m0 6h0m0-3h0m0-1h0m0-6h0m1 1h0m0 2h0m0-1h0m0-2h0m0 2h0m0 5h0m0-11h0m1-3h0m0 11h0m0 5h0m0-15h0m0 7h0m0-1h0m0 0h0m1 2h0m0 2h0m0 0h0m0-3h0m0 2h0m0 11h0m1-12h0m0-5h0m0 9h0m0-12h0m0 17h0m0-1h0m0-10h0m1 2h0m0-6h0m0 1h0m0 20h0m0-13h0m0-2h0m0-5h0m1 3h0m0 2h0m0-10h0m0 9h0m0-3h0m0 10h0m1-8h0m0 0h0m0 4h0m0-1h0m0-2h0m0-5h0m0 12h0m1-6h0m0 11h0m0-10h0m0-5h0m0 8h0m0-4h0m0 0h0m1-3h0m0 1h0m0 12h0m0-9h0m0 9h0m0-10h0m0-6h0m1 11h0m0-2h0m0-12h0m0 7h0m0 3h0m0-5h0m1 12h0m0-8h0m0 2h0m0-10h0m0 4h0m0 9h0m0-7h0m1 4h0m0-7h0m0 5h0m0 2h0m0 2h0m0-10h0m0 1h0m1 2h0m0 11h0m0-5h0m0 4h0m0-6h0m0-2h0m1 2h0m0-4h0m0 4h0m0 4h0m0 3h0m0-4h0m0-3h0m1 2h0m0-5h0m0 0h0m0 8h0m0-3h0m0-2h0m0-4h0m1-2h0m0 6h0m0-3h0m0-2h0m0 8h0m0-2h0m0 0h0m1-3h0m0-6h0m0 6h0m0-4h0m0 8h0m0-9h0m1 5h0m0-7h0m0 1h0m0 12h0m0-3h0m0 0h0m0 0h0m1-8h0m0 11h0m0-1h0m0-1h0m0-9h0m0 9h0m0-7h0m1 5h0m0-2h0m0-4h0m0 3h0m0-3h0m0 2h0m0-3h0m1 8h0m0 2h0m0-2h0m0-4h0m0 15h0m0-29h0m1 18h0m0 0h0m0-15h0m0 19h0m0-2h0m0-12h0m0 11h0m1-4h0m0-2h0m0 0h0m0 0h0m0 1h0m0 5h0m0-8h0m1 5h0m0-5h0m0 5h0m0-4h0m0-1h0m0 4h0m1 3h0m0 3h0m0-7h0m0-3h0m0-2h0m0 2h0m0 7h0m1-3h0m0-7h0m0 13h0m0-7h0m0-5h0m0 7h0m0 4h0m1 6h0m0-7h0m0-2h0m0 2h0m0-9h0m0 15h0m0-4h0m1-7h0m0 2h0m0-3h0m0 1h0m0 1h0m0-6h0m1 1h0m0 5h0m0-15h0m0 17h0m0-3h0m0 0h0m0 7h0m1-1h0m0-5h0m0 2h0m0 5h0m0-11h0m0 4h0m0 0h0m1 5h0m0-7h0m0-2h0m0 10h0m0-3h0m0 2h0m1-10h0m0 16h0m0-8h0m0-2h0m0-8h0m0 16h0m0-4h0m1-8h0m0 1h0m0-7h0m0 11h0m0-8h0m0 2h0m0 4h0m1 12h0m0-12h0m0 1h0m0 7h0m0-11h0m0 6h0m0-3h0m1 1h0m0-5h0m0-3h0m0 3h0m0 2h0m0 1h0m1 7h0m0-2h0m0-3h0m0 0h0m0 6h0m0-13h0m0 2h0m1 6h0m0-6h0m0 4h0m0-9h0m0 5h0m0 1h0m0 1h0m1-2h0m0 4h0m0-7h0m0-5h0m0 18h0m0-8h0m1 1h0m0 7h0m0 0h0m0-5h0m0-6h0m0 3h0m0 13h0m1-13h0m0 4h0m0 1h0m0-3h0m0 6h0m0-1h0m0-4h0m1 8h0m0-8h0m0-2h0m0 0h0m0-4h0m0 10h0m0-3h0m1-1h0m0 3h0m0-6h0m0 0h0m0 4h0m0-2h0m1-1h0m0 2h0m0-3h0m0 0h0m0 4h0m0 4h0m0-2h0m1-4h0m0 0h0m0 5h0m0 1h0m0-7h0m0-3h0m0 3h0m1 2h0m0-3h0m0 10h0m0-8h0m0 4h0m0-10h0m1 11h0m0-1h0m0-11h0m0 5h0m0 5h0m0-2h0m0 1h0m1-2h0m0 5h0m0-7h0m0 12h0m0-4h0m0-15h0m0 9h0m1 8h0m0-7h0m0-1h0m0 1h0m0-5h0m0-7h0m0 14h0m1-9h0m0 7h0m0-1h0m0 7h0m0-3h0m0 3h0m1-4h0m0-6h0m0 5h0m0 2h0m0-6h0m0-1h0m0-1h0m1 2h0m0 4h0m0-2h0m0 2h0m0 6h0m0-8h0m0 3h0m1-1h0m0 0h0m0 14h0m0-18h0m0 8h0m0-7h0m1 4h0m0-4h0m0 17h0m0-18h0m0-6h0m0 9h0m0-3h0m1 6h0m0-1h0m0-3h0m0-4h0m0 9h0m0-4h0m0-8h0m1 14h0m0-7h0m0 0h0m0-6h0m0 8h0m0 2h0m0-9h0m1 0h0m0 4h0m0 13h0m0-10h0m0-2h0m0 3h0m1-6h0m0 3h0m0 2h0m0-8h0m0 10h0m0-4h0m0-5h0m1 5h0m0 4h0m0-1h0m0-3h0m0-5h0m0-4h0m0 7h0m1 3h0m0 2h0m0-2h0m0 0h0m0-6h0m0 3h0m1 4h0m0-2h0m0-1h0m0-1h0m0 4h0m0-8h0m0 17h0m1-14h0m0 1h0m0 2h0m0-2h0m0 0h0m0 3h0m0-2h0m1-7h0m0-3h0m0 8h0m0 10h0m0-4h0m0-4h0m0 1h0m1-3h0m0 5h0m0-5h0m0-3h0m0 9h0m0 5h0m1-9h0m0-8h0m0 13h0m0 6h0m0-6h0m0 0h0m0-3h0m1 6h0m0 1h0m0-10h0m0 2h0m0-2h0m0 2h0m0 0h0m1 0h0m0 2h0m0-10h0m0 15h0m0-9h0m0 5h0m1-4h0m0 0h0m0 9h0m0-5h0m0 1h0m0 0h0m0 2h0m1-5h0m0 6h0m0-8h0m0-2h0m0 7h0m0-11h0m0 9h0m1-1h0m0-7h0m0 10h0m0-1h0m0 1h0m0-9h0m0 13h0m1-2h0m0-7h0m0 2h0m0 6h0m0-9h0m0 8h0m1-1h0m0-5h0m0-3h0m0 1h0m0 3h0m0-2h0m0 6h0m1 1h0m0-19h0m0 8h0m0 2h0m0-2h0m0 8h0m0-3h0m1-5h0m0 3h0m0-1h0m0 5h0m0 0h0m0-3h0m0-3h0m1 7h0m0-2h0m0 1h0m0-4h0m0 2h0m0 4h0m1-5h0m0 2h0m0-2h0m0 5h0m0 2h0m0-12h0m0 3h0m1 5h0m0 2h0m0-3h0m0 1h0m0 1h0m0 6h0m0-8h0m1 1h0m0-1h0m0 3h0m0-5h0m0 1h0m0 9h0m1-10h0m0 4h0m0 5h0m0-9h0m0 3h0m0-2h0m0 7h0m1-6h0m0 5h0m0-9h0m0 16h0m0-12h0m0-4h0m0 14h0m1-10h0m0-1h0m0 2h0m0-1h0m0 2h0m0-3h0m0 6h0m1-6h0m0 2h0m0-2h0m0 10h0m0-12h0m0 3h0m1-8h0m0 5h0m0 2h0m0 0h0m0 6h0m0-3h0m0 0h0m1-1h0m0 2h0m0-4h0m0-1h0m0-6h0m0 4h0m0 2h0m1-10h0m0 10h0m0 3h0m0 2h0m0 2h0m0-12h0m1 14h0m0-6h0m0 0h0m0-4h0m0 1h0m0-2h0m0 7h0m1-10h0m0 9h0m0-1h0m0-6h0m0 4h0m0-5h0m0 5h0m1-7h0m0 11h0m0-4h0m0 1h0m0 7h0m0-13h0m0 14h0m1-5h0m0 2h0m0-1h0m0-6h0m0 5h0m0-6h0m1 5h0m0 5h0m0-5h0m0-8h0m0 11h0m0-5h0m0 4h0m1 7h0m0-11h0m0-5h0m0-4h0m0 9h0m0 7h0m0-10h0m1 6h0m0 0h0m0-4h0m0-2h0m0 3h0m0-1h0m1 10h0m0-5h0m0-3h0m0-3h0m0 7h0m0-6h0m0 2h0m1-2h0m0 4h0m0 6h0m0-6h0m0-8h0m0-6h0m0 10h0m1 6h0m0-2h0m0-3h0m0 2h0m0 3h0m0-1h0m0-3h0m1 0h0m0-4h0m0 9h0m0-4h0m0-6h0m0 3h0m1-5h0m0 11h0m0-6h0m0 6h0m0-9h0m0 0h0m0 5h0m1-5h0m0-6h0m0 13h0m0-2h0m0 6h0m0-10h0m0 0h0m1 6h0m0 6h0m0-10h0m0 9h0m0 1h0m0-8h0m1 2h0m0-8h0m0 14h0m0-3h0m0-3h0m0-1h0m0-6h0m1 3h0m0-3h0m0 12h0m0-1h0m0-7h0m0-1h0m0 4h0m1-2h0m0-2h0m0 3h0m0-1h0m0-7h0m0-2h0m0 7h0m1 5h0m0-2h0m0 3h0m0-10h0m0 6h0m0-1h0m1 1h0m0 6h0m0 0h0m0-8h0m0-1h0m0-7h0m0 16h0m1-3h0m0-3h0m0-7h0m0 4h0m0 1h0m0 11h0m0-9h0m1 4h0m0-7h0m0 0h0m0 7h0m0-4h0m0-7h0m1 10h0m0-10h0m0 1h0m0 8h0m0-3h0m0 1h0m0-3h0m1 3h0m0-2h0m0-5h0m0 12h0m0 4h0m0-14h0m0 9h0m1-1h0m0-3h0m0 7h0m0-4h0m0-5h0m0 2h0m0 7h0m1-8h0m0-6h0m0 8h0m0-3h0m0 2h0m0 4h0m1-1h0m0-5h0m0 0h0m0-3h0m0 9h0m0-5h0m0-1h0m1-2h0m0 11h0m0-5h0m0 1h0m0 0h0m0 2h0m0-11h0m1 7h0m0-3h0m0-7h0m0-2h0m0 10h0m0-6h0m1 2h0m0 9h0m0-3h0m0 1h0m0-5h0m0 10h0m0-2h0m1 1h0m0-10h0m0 10h0m0-3h0m0-1h0m0-2h0m0-5h0m1 10h0m0-11h0m0 12h0m0-8h0m0-3h0m0 0h0m0 7h0m1-9h0m0-1h0m0 7h0m0 1h0m0 14h0m0-12h0m1 3h0m0-2h0m0 9h0m0-10h0m0-5h0m0 5h0m0 0h0m1-2h0m0 2h0m0-2h0m0-4h0m0 7h0m0 2h0m0 2h0m1-11h0m0 8h0m0 2h0m0-9h0m0-1h0m0 6h0m1-8h0m0 3h0m0 2h0m0 0h0m0-3h0m0 9h0m0-2h0m1-6h0m0 6h0m0-5h0m0 2h0m0 1h0m0-9h0m0 10h0m1-1h0m0-5h0m0 5h0m0 5h0m0-3h0m0-8h0m0 4h0m1 8h0m0-2h0m0-7h0m0 4h0m0-2h0m0 2h0m1-13h0m0 12h0m0 7h0m0-10h0m0-4h0m0-9h0m0 16h0m1 2h0m0-5h0m0-3h0m0 3h0m0 6h0m0-9h0m0 5h0m1-5h0m0 8h0m0-6h0m0 11h0m0-4h0m0-10h0m0 6h0m1 4h0m0 1h0m0-3h0m0-5h0m0 12h0m0-12h0m1 4h0m0-2h0m0 2h0m0 4h0m0 0h0m0-6h0m0 1h0m1-1h0m0 3h0m0-1h0m0-6h0m0 6h0m0 1h0m0 3h0m1-11h0m0 6h0m0-8h0m0 6h0m0-2h0m0 9h0m1-11h0m0 7h0m0 9h0m0-7h0m0-2h0m0-10h0m0 14h0m1-7h0m0 0h0m0-5h0m0 3h0m0 5h0m0-1h0m0 5h0m1-5h0m0 3h0m0-6h0m0-5h0m0 7h0m0 4h0m0-1h0m1-7h0m0 5h0m0 1h0m0-1h0m0-6h0m0 8h0m1-1h0m0-8h0m0 15h0m0-13h0m0 6h0m0-1h0m0-1h0m1-1h0m0 2h0m0-10h0m0 17h0m0 0h0m0-5h0m0 3h0m1-5h0m0 1h0m0 4h0m0-7h0m0-6h0m0 11h0m1 7h0m0-13h0m0 5h0m0-3h0m0-2h0m0 6h0m0-7h0m1 5h0m0 3h0m0-7h0m0 4h0m0-17h0m0 13h0m0 0h0m1 3h0m0 0h0m0 2h0m0-1h0m0 2h0m0-7h0m0 1h0m1-4h0m0 5h0m0 3h0m0 1h0m0 1h0m0 0h0m1-15h0m0 19h0m0-3h0m0 2h0m0-9h0m0 2h0m0 1h0m1-4h0m0 5h0m0-3h0m0-5h0m0 2h0m0 0h0m0 2h0m1-1h0m0-4h0m0 8h0m0-2h0m0 1h0m0 2h0m1-3h0m0 2h0m0 3h0m0-2h0m0 1h0m0-5h0m0-3h0m1 7h0m0-10h0m0 9h0m0-6h0m0 2h0m0 6h0m0-3h0m1 6h0m0-8h0m0-5h0m0 6h0m0-6h0m0-6h0m0 5h0m1 7h0m0 2h0m0 12h0m0-21h0m0 7h0m0-6h0m1 6h0m0 5h0m0-4h0m0 6h0m0-3h0m0-8h0m0 5h0m1-1h0m0 1h0m0 2h0m0-3h0m0-3h0m0 4h0m0 5h0m1-4h0m0-11h0m0 5h0m0 7h0m0 2h0m0 1h0m1-5h0m0 1h0m0 0h0m0-5h0m0 6h0m0 1h0m0-10h0m1 13h0m0-13h0m0 6h0m0-1h0m0-1h0m0 14h0m0-16h0m1 2h0m0 1h0m0-3h0m0 0h0m0 10h0m0 1h0m0-9h0m1 5h0m0-11h0m0 6h0m0 8h0m0-7h0m0-1h0m1 3h0m0 1h0m0 4h0m0-10h0m0 10h0m0-1h0m0-11h0m1 6h0m0 2h0m0 1h0m0-7h0m0-3h0m0 5h0m0 4h0m1-12h0m0 10h0m0-4h0m0 8h0m0-7h0m0-1h0m1 11h0m0-5h0m0 0h0m0-2h0m0-3h0m0 4h0m0 0h0m1-2h0m0 16h0m0-6h0m0-10h0m0 2h0m0 1h0m0-1h0m1-11h0m0 13h0m0-8h0m0 13h0m0-5h0m0-8h0m0 5h0m1 3h0m0 0h0m0-5h0m0 4h0m0-9h0m0 2h0m1 1h0m0 1h0m0-1h0m0 11h0m0-3h0m0-5h0m0 11h0m1-3h0m0-9h0m0 3h0m0 2h0m0-7h0m0-1h0m0 7h0m1-7h0m0 11h0m0-6h0m0-1h0m0 5h0m0-1h0m1-5h0m0-8h0m0 2h0m0-1h0m0 9h0m0-2h0m0-1h0m1 1h0m0-4h0m0 4h0m0-2h0m0 5h0m0-6h0m0 3h0m1 1h0m0-4h0m0 1h0m0 6h0m0-9h0m0 1h0m0 6h0m1-6h0m0 6h0m0-6h0m0 12h0m0 3h0m0-10h0m1-3h0m0 6h0m0-1h0m0-6h0m0 3h0m0-2h0m0 4h0m1 0h0m0 2h0m0-4h0m0 5h0m0-1h0m0 2h0m0-6h0m1 9h0m0 0h0m0-6h0m0-11h0m0 15h0m0-8h0m1-6h0m0 11h0m0-6h0m0 9h0m0 3h0m0-17h0m0 11h0m1-4h0m0-6h0m0 5h0m0 2h0m0-1h0m0 4h0m0-6h0m1-4h0m0 11h0m0-6h0m0-9h0m0 12h0m0-4h0m0-1h0m1-8h0m0 2h0m0 11h0m0-2h0m0 3h0m0 0h0m1-2h0m0-1h0m0-3h0m0-3h0m0 5h0m0 3h0m0-5h0m1 8h0m0 5h0m0-9h0m0 1h0m0 2h0m0-1h0m0-5h0m1 5h0m0-6h0m0 8h0m0 0h0m0 5h0m0-11h0m0 7h0m1 0h0m0-7h0m0-2h0m0 0h0m0 6h0m0 2h0m1 1h0m0 1h0m0-7h0m0-6h0m0 8h0m0 3h0m0-7h0m1 7h0m0 1h0m0-5h0m0 0h0m0 1h0m0 4h0m0-5h0m1 5h0m0 2h0m0-8h0m0 5h0m0-5h0m0-3h0m1 2h0m0-6h0m0 11h0m0-2h0m0 0h0m0-3h0m0-1h0m1 6h0m0 2h0m0 2h0m0 1h0m0-10h0m0 7h0m0-8h0m1 5h0m0-9h0m0 5h0m0 0h0m0-1h0m0 4h0m0-4h0m1 1h0m0 6h0m0-3h0m0 12h0m0-10h0m0-7h0m1 11h0m0 5h0m0-8h0m0 4h0m0-6h0m0-3h0m0 0h0m1 7h0m0 4h0m0-12h0m0 0h0m0-9h0m0 10h0m0 1h0m1-2h0m0 9h0m0-2h0m0-9h0m0 4h0m0 4h0m1-4h0m0 0h0m0 5h0m0-4h0m0 2h0m0-5h0m0 8h0m1-6h0m0-2h0m0 2h0m0 3h0m0 13h0m0-12h0m0 0h0m1 3h0m0 3h0m0-7h0m0 1h0m0-8h0m0 6h0m0 4h0m1-5h0m0-3h0m0 3h0m0-1h0m0 5h0m0-2h0m1-4h0m0-2h0m0 3h0m0 6h0m0-9h0m0 0h0m0 9h0m1 0h0m0-8h0m0-1h0m0 0h0m0 5h0m0 3h0m0-2h0m1 3h0m0-6h0m0 4h0m0-3h0m0 0h0m0 1h0m1 6h0m0-4h0m0-7h0m0 10h0m0-7h0m0 15h0m0-11h0m1-5h0m0 7h0m0-6h0m0 5h0m0-7h0m0-1h0m0 3h0m1-7h0m0 7h0m0 3h0m0-2h0m0 0h0m0-8h0m0 14h0m1 0h0m0-6h0m0-2h0m0 6h0m0 0h0m0-2h0m1-3h0m0 2h0m0 0h0m0 5h0m0-6h0m0-6h0m0 11h0m1-6h0m0 0h0m0 10h0m0-12h0m0 7h0m0 4h0m0-5h0m1-1h0m0-4h0m0-2h0m0 4h0m0 0h0m0 1h0m1-6h0m0 3h0m0 10h0m0-14h0m0 9h0m0-5h0m0 6h0m1-3h0m0 1h0m0 4h0m0-7h0m0 4h0m0-3h0m0-6h0m1 5h0m0 10h0m0-4h0m0-2h0m0-4h0m0-2h0m0 6h0m1-1h0m0-2h0m0-2h0m0 6h0m0-8h0m0 8h0m1-6h0m0 5h0m0-3h0m0-2h0m0 0h0m0 3h0m0 10h0m1-14h0m0 2h0m0 9h0m0-12h0m0 6h0m0 5h0m0-1h0m1-8h0m0 1h0m0-2h0m0 7h0m0 0h0m0-10h0m1 5h0m0-4h0m0 7h0m0 4h0m0 0h0m0-8h0m0 0h0m1-1h0m0 1h0m0-1h0m0-7h0m0 8h0m0-1h0m0 3h0m1 2h0m0 3h0m0 1h0m0-15h0m0 9h0m0 4h0m0 0h0m1-1h0m0-1h0m0-9h0m0 7h0m0-3h0m0 6h0m1 7h0m0-9h0m0 1h0m0-2h0m0 4h0m0-1h0m0 0h0m1-1h0m0-5h0m0 8h0m0-4h0m0-1h0m0 1h0m0-9h0m1 12h0m0-11h0m0 10h0m0 4h0m0-6h0m0 1h0m1 9h0m0-18h0m0 3h0m0 3h0m0 10h0m0-9h0m0 5h0m1-13h0m0 8h0m0 4h0m0 2h0m0-9h0m0 7h0m0 0h0m1-4h0m0 2h0m0 1h0m0-7h0m0 7h0m0-7h0m0 6h0m1-8h0m0-2h0m0 7h0m0 3h0m0 4h0m0-4h0m1 5h0m0-4h0m0 0h0m0-3h0m0-2h0m0 1h0m0 0h0m1 2h0m0 0h0m0 4h0m0-6h0m0 4h0m0-4h0m0 1h0m1 7h0m0-4h0m0-10h0m0 0h0m0 8h0m0 2h0m1-3h0m0-3h0m0-11h0m0 14h0m0 16h0m0-15h0m0-2h0m1 1h0m0-2h0m0 2h0m0 5h0m0 1h0m0-6h0m0 6h0m1-6h0m0 2h0m0-2h0m0 2h0m0 2h0m0-1h0m0 10h0m1-10h0m0 2h0m0-6h0m0 2h0m0-1h0m0 3h0m1-2h0m0-1h0m0-2h0m0 7h0m0-3h0m0-7h0m0 6h0m1 1h0m0-2h0m0 6h0m0-7h0m0-1h0m0 6h0m0-11h0m1 3h0m0 7h0m0 4h0m0-3h0m0 1h0m0-3h0m0-3h0m1-2h0m0 9h0m0-3h0m0 4h0m0 0h0m0-20h0m1 15h0m0-7h0m0 16h0m0-15h0m0 7h0m0 1h0m0-7h0m1 1h0m0 5h0m0-13h0m0 15h0m0 1h0m0 0h0m0-6h0m1-3h0m0-4h0m0 10h0m0-8h0m0 3h0m0-3h0m1 11h0m0 1h0m0-4h0m0-4h0m0-1h0m0 12h0m0-6h0m1-9h0m0 7h0m0-5h0m0 3h0m0 4h0m0 0h0m0-5h0m1 8h0m0-10h0m0-4h0m0 10h0m0-3h0m0 3h0m0-1h0m1-2h0m0 0h0m0 1h0m0-1h0m0 15h0m0-23h0m1 6h0m0 0h0m0 0h0m0 5h0m0-3h0m0 10h0m0-10h0m1 3h0m0-4h0m0 3h0m0-2h0m0 1h0m0-3h0m0 0h0m1 4h0m0-5h0m0 2h0m0-4h0m0 10h0m0-7h0m1 4h0m0-8h0m0 6h0m0-4h0m0 3h0m0 2h0m0-6h0m1 5h0m0 7h0m0-5h0m0-3h0m0 1h0m0 2h0m0 3h0m1-2h0m0 2h0m0-3h0m0-5h0m0 6h0m0-8h0m0 11h0m1-2h0m0-2h0m0-5h0m0 7h0m0 4h0m0-12h0m1 4h0m0 7h0m0-5h0m0 3h0m0-6h0m0 2h0m0 3h0m1-6h0m0-6h0m0 7h0m0 4h0m0-18h0m0 21h0m0-7h0m1-7h0m0 10h0m0 1h0m0-8h0m0 10h0m0 0h0m1 2h0m0-12h0m0 0h0m0 2h0m0 6h0m0-1h0m0 12h0m1-16h0m0 4h0m0-4h0m0 1h0m0 6h0m0-3h0m0-10h0m1 12h0m0-4h0m0 4h0m0-3h0m0-1h0m0 3h0m0-5h0m1 2h0m0-9h0m0 16h0m0-5h0m0 0h0m0-2h0m1-4h0m0 9h0m0-7h0m0 4h0m0-7h0m0 0h0m0-6h0m1 15h0m0-3h0m0 8h0m0-9h0m0 9h0m0-7h0m0-6h0m1 8h0m0-12h0m0 11h0m0-1h0m0-2h0m0-2h0m1 5h0m0 0h0m0-6h0m0 15h0m0-14h0m0-11h0m0 11h0m1-3h0m0 4h0m0 5h0m0-8h0m0 6h0m0-3h0m0 3h0m1-4h0m0 4h0m0 5h0m0-13h0m0-2h0m0 9h0m0 7h0m1-11h0m0 10h0m0-4h0m0 4h0m0-5h0m0-2h0m1 0h0m0-5h0m0 9h0m0-4h0m0 5h0m0-7h0m0-5h0m1 7h0m0 7h0m0-6h0m0-1h0m0-2h0m0 4h0m0-1h0m1 1h0m0 0h0m0-1h0m0 5h0m0-3h0m0-2h0m1-2h0m0-9h0m0 5h0m0 3h0m0-4h0m0 6h0m0 3h0m1-2h0m0-2h0m0 6h0m0 1h0m0-9h0m0-10h0m0 14h0m1 6h0m0-4h0m0 11h0m0-14h0m0-3h0m0-2h0m0 6h0m1 1h0m0 3h0m0-5h0m0-2h0m0 1h0m0 9h0m1-9h0m0 3h0m0-1h0m0-3h0m0-4h0m0 16h0m0-8h0m1 6h0m0-6h0m0 3h0m0 4h0m0-13h0m0 8h0m0-8h0m1 10h0m0-1h0m0-9h0m0 9h0m0-9h0m0 10h0m1 0h0m0-4h0m0 2h0m0 1h0m0-5h0m0 7h0m0-8h0m1 0h0m0 13h0m0-12h0m0 1h0m0-7h0m0 5h0m0 0h0m1-3h0m0 9h0m0 1h0m0 1h0m0-6h0m0 0h0m0 5h0m1-13h0m0-5h0m0 17h0m0-6h0m0 2h0m0-12h0m1 15h0m0-3h0m0 0h0m0 2h0m0-4h0m0 0h0m0 0h0m1 5h0m0 0h0m0-10h0m0 4h0m0 7h0m0-8h0m0 9h0m1 0h0m0-3h0m0-3h0m0 5h0m0-3h0m0 3h0m1-10h0m0 4h0m0 6h0m0-3h0m0-1h0m0 4h0m0-4h0m1-5h0m0 21h0m0-12h0m0 0h0m0-6h0m0 0h0m0 6h0m1-3h0m0 4h0m0-7h0m0-1h0m0 4h0m0-3h0m0 16h0m1-11h0m0-7h0m0 7h0m0-6h0m0 3h0m0 0h0m1 16h0m0-22h0m0 7h0m0-6h0m0 10h0m0-9h0m0 3h0m1-3h0m0 2h0m0 2h0m0 0h0m0-3h0m0-2h0m0 3h0m1 3h0m0-2h0m0-2h0m0 2h0m0 0h0m0 2h0m0-4h0m1 2h0m0-1h0m0 4h0m0 4h0m0-2h0m0 2h0m1-9h0m0 0h0m0 4h0m0 2h0m0 0h0m0 2h0m0 0h0m1 5h0m0-11h0m0 3h0m0 6h0m0-4h0m0-7h0m0-2h0m1 4h0m0 4h0m0-6h0m0 1h0m0-3h0m0-4h0m1 12h0m0-1h0m0 9h0m0-10h0m0 2h0m0 0h0m0-1h0m1 4h0m0-9h0m0 3h0m0-4h0m0 2h0m0 2h0m0 1h0m1-3h0m0-6h0m0 11h0m0-2h0m0-4h0m0-3h0m0 11h0m1 2h0m0-7h0m0 5h0m0-4h0m0-7h0m0 4h0m1 0h0m0 6h0m0-15h0m0 19h0m0-9h0m0 9h0m0-8h0m1-2h0m0 9h0m0-11h0m0 0h0m0-1h0m0 9h0m0-1h0m1-2h0m0-5h0m0 1h0m0 4h0m0-3h0m0 3h0m1 6h0m0-8h0m0 3h0m0-8h0m0 9h0m0-2h0m0 2h0m1-4h0m0-5h0m0 3h0m0 5h0m0-7h0m0 6h0m0-5h0m1 4h0m0-1h0m0 1h0m0 4h0m0-4h0m0-5h0m0 7h0m1-5h0m0-3h0m0 6h0m0-5h0m0 10h0m0-10h0m1 0h0m0 0h0m0 8h0m0-15h0m0 5h0m0 7h0m0 4h0m1-3h0m0 2h0m0-3h0m0 4h0m0-8h0m0-3h0m0 10h0m1-6h0m0 3h0m0-2h0m0-1h0m0 3h0m0 2h0m1-2h0m0-1h0m0-1h0m0-4h0m0 8h0m0-3h0m0 8h0m1-9h0m0 5h0m0 0h0m0 0h0m0 13h0m0-12h0m0-3h0m1 4h0m0 0h0m0-1h0m0-6h0m0 5h0m0 1h0m0-1h0m1-3h0m0-1h0m0-2h0m0 10h0m0-12h0m0 9h0m1 5h0m0-12h0m0 8h0m0-6h0m0 7h0m0-6h0m0 0h0m1-4h0m0 8h0m0-5h0m0 17h0m0-13h0m0 2h0m0-5h0m1-2h0m0 1h0m0-1h0m0 3h0m0 0h0m0-1h0m1 0h0m0 0h0m0 3h0m0 3h0m0-3h0m0 4h0m0-12h0m1 10h0m0-2h0m0-4h0m0 0h0m0 2h0m0-5h0m0 8h0m1-14h0m0 13h0m0-5h0m0 6h0m0-1h0m0 4h0m0-10h0m1 14h0m0-4h0m0-12h0m0 9h0m0-2h0m0 2h0m1 3h0m0-15h0m0 12h0m0 0h0m0-7h0m0 5h0m0 3h0m1-8h0m0-6h0m0 6h0m0 7h0m0 0h0m0 0h0m0 1h0m1-1h0m0-2h0m0 0h0m0-2h0m0-6h0m0 12h0m1-6h0m0 0h0m0 2h0m0-8h0m0 5h0m0-3h0m0-2h0m1 11h0m0 3h0m0-9h0m0-8h0m0 16h0m0-2h0m0-1h0m1 0h0m0-3h0m0-7h0m0 0h0m0 11h0m0 1h0m0-6h0m1 5h0m0 1h0m0-4h0m0-3h0m0-5h0m0-9h0m1 18h0m0-5h0m0-1h0m0 3h0m0 2h0m0-2h0m0 2h0m1-2h0m0 1h0m0-1h0m0-14h0m0 12h0m0 4h0m0 1h0m1-4h0m0-3h0m0 4h0m0-6h0m0 2h0m0 10h0m1-5h0m0 2h0m0 7h0m0-10h0m0-3h0m0-4h0m0 10h0m1 0h0m0-1h0m0 7h0m0-3h0m0-7h0m0 4h0m0-5h0m1 2h0m0 0h0m0-3h0m0 12h0m0-10h0m0 3h0m0-2h0m1 0h0m0 1h0m0-7h0m0 4h0m0 5h0m0-2h0m1-3h0m0 1h0m0 0h0m0 4h0m0 1h0m0-4h0m0-1h0m1 1h0m0 1h0m0-2h0m0 3h0m0-7h0m0 18h0m0-20h0m1 8h0m0-3h0m0 2h0m0-4h0m0 7h0m0 0h0m0-10h0m1 1h0m0 3h0m0 3h0m0 4h0m0-8h0m0 5h0m1-3h0m0 9h0m0-6h0m0-6h0m0 0h0m0 3h0m0-2h0m1 6h0m0-10h0m0 8h0m0 2h0m0-1h0m0 2h0m0-7h0m1 8h0m0-7h0m0-2h0m0 4h0m0 0h0m0-2h0m1-3h0m0 3h0m0-5h0m0 6h0m0 2h0m0-6h0m0 5h0m1 1h0m0-5h0m0 0h0m0 11h0m0 0h0m0-10h0m0-1h0m1 9h0m0-9h0m0-1h0m0 2h0m0 2h0m0-3h0m0 6h0m1-3h0m0 6h0m0-3h0m0 0h0m0-3h0m0-1h0m1 0h0m0 8h0m0-12h0m0 4h0m0 1h0m0 0h0m0 1h0m1 2h0m0-2h0m0 2h0m0-7h0m0 0h0m0 3h0m0-7h0m1 11h0m0-12h0m0 12h0m0 1h0m0-3h0m0 4h0m1-2h0m0-3h0m0-3h0m0-11h0m0 7h0m0 12h0m0 1h0m1-4h0m0-3h0m0 2h0m0 5h0m0-7h0m0 6h0m0-5h0m1-7h0m0 11h0m0-6h0m0 0h0m0 15h0m0-8h0m0-1h0m1-3h0m0 2h0m0-1h0m0-2h0m0 5h0m0 1h0m1 1h0m0-13h0m0 6h0m0-2h0m0 4h0m0-1h0m0 1h0m1 1h0m0 1h0m0-8h0m0 4h0m0 2h0m0-2h0m0 1h0m1 0h0m0-5h0m0-3h0m0 11h0m0-9h0m0 12h0m1-6h0m0-2h0m0-1h0m0 8h0m0 3h0m0-7h0m0-1h0m1 4h0m0-4h0m0 2h0m0-2h0m0 4h0m0-1h0m0 1h0m1-8h0m0 5h0m0-2h0m0 5h0m0-5h0m0 3h0m0 4h0m1-4h0m0 6h0m0-10h0m0 10h0m0-9h0m0 5h0m1-10h0m0 9h0m0-9h0m0 2h0m0 2h0m0-4h0m0 8h0m1 1h0m0 1h0m0-4h0m0 4h0m0-12h0m0 4h0m0 4h0m1 2h0m0 2h0m0 2h0m0-1h0m0-8h0m0 5h0m1-3h0m0-6h0m0 0h0m0 3h0m0 7h0m0-4h0m0 2h0m1 1h0m0-3h0m0 0h0m0-3h0m0 3h0m0 2h0m0 0h0m1 2h0m0-13h0m0-2h0m0 8h0m0 9h0m0-3h0m0 0h0m1-4h0m0-1h0m0-1h0m0 10h0m0-8h0m0 5h0m1 0h0m0-5h0m0 7h0m0-1h0m0-5h0m0 6h0m0-3h0m1 2h0m0 1h0m0-6h0m0-1h0m0-1h0m0-2h0m0 4h0m1 1h0m0 5h0m0-5h0m0-2h0m0 11h0m0-12h0m1 0h0m0-2h0m0 7h0m0-5h0m0 10h0m0-15h0m0 9h0m1-6h0m0 7h0m0-3h0m0-7h0m0-1h0m0 12h0m0-8h0m1-3h0m0 5h0m0 5h0m0 1h0m0 8h0m0-17h0m0 11h0m1-1h0m0-4h0m0-4h0m0 6h0m0 1h0m0 0h0m1-4h0m0-2h0m0 13h0m0-10h0m0 1h0m0-5h0m0 8h0m1-4h0m0 1h0m0-2h0m0 3h0m0 1h0m0-4h0m0 0h0m1 3h0m0 0h0m0-2h0m0 9h0m0-8h0m0-7h0m1 11h0m0-4h0m0 12h0m0-15h0m0-4h0m0 8h0m0-9h0m1 5h0m0 3h0m0 1h0m0 0h0m0-2h0m0 4h0m0-3h0m1 0h0m0-5h0m0 3h0m0 1h0m0 0h0m0-5h0m0 2h0m1 5h0m0-1h0m0-3h0m0-8h0m0 5h0m0 18h0m1-11h0m0 4h0m0-7h0m0-9h0m0 17h0m0-7h0m0 4h0m1-11h0m0 9h0m0 1h0m0-10h0m0 8h0m0-5h0m0 4h0m1 7h0m0-9h0m0-1h0m0 8h0m0-7h0m0 3h0m1-8h0m0 10h0m0 2h0m0-14h0m0 10h0m0 1h0m0 2h0m1 1h0m0-2h0m0 7h0m0 0h0m0-17h0m0 16h0m0-17h0m1 11h0m0-6h0m0 10h0m0-8h0m0 11h0m0-8h0m0 1h0m1-3h0m0 0h0m0 4h0m0 4h0m0-8h0m0 3h0m1-1h0m0 2h0m0-1h0m0-6h0m0 1h0m0 6h0m0 2h0m1-11h0m0 6h0m0-10h0m0 6h0m0-2h0m0 9h0m0-5h0m1 3h0m0 6h0m0 0h0m0-8h0m0-3h0m0 12h0m0-8h0m1 2h0m0-1h0m0-2h0m0 0h0m0 1h0m0 5h0m1-3h0m0 3h0m0 0h0m0-6h0m0 1h0m0 10h0m0-11h0m1-6h0m0 5h0m0 3h0m0-6h0m0 0h0m0 9h0m0-18h0m1 5h0m0 15h0m0-2h0m0-7h0m0-5h0m0 1h0m1 8h0m0-1h0m0-1h0m0-5h0m0-6h0m0 12h0m0-2h0m1-3h0m0 7h0m0-4h0m0 0h0m0-5h0m0 10h0m0-3h0m1-4h0m0 0h0m0 5h0m0-1h0m0 4h0m0 7h0m0-18h0m1 7h0m0-2h0m0 10h0m0-6h0m0 0h0m0-2h0m1 1h0m0-2h0m0-1h0m0 2h0m0 2h0m0-7h0m0 7h0m1 2h0m0 1h0m0-3h0m0-4h0m0-3h0m0-2h0m0 13h0m1-5h0m0 0h0m0-7h0m0 4h0m0 1h0m0 7h0m1-5h0m0-2h0m0-7h0m0 11h0m0-11h0m0 6h0m0 5h0m1-3h0m0 4h0m0-9h0m0 4h0m0-1h0m0-3h0m0-5h0m1 6h0m0 1h0m0 5h0m0-6h0m0 4h0m0 6h0m0-4h0m1-3h0m0 3h0m0-8h0m0 3h0m0 3h0m0-1h0m1 1h0m0 0h0m0 7h0m0-3h0m0-11h0m0 7h0m0-2h0m1 9h0m0-7h0m0-3h0m0-2h0m0 3h0m0 1h0m0-2h0m1 5h0m0-6h0m0 4h0m0 11h0m0-9h0m0-4h0m1-3h0m0 1h0m0 1h0m0-6h0m0 5h0m0 4h0m0 2h0m1 0h0m0-6h0m0-3h0m0 5h0m0 2h0m0-4h0m0-2h0m1 4h0m0 8h0m0-2h0m0-6h0m0 5h0m0-7h0m0 2h0m1 2h0m0-5h0m0 7h0m0-7h0m0 4h0m0-2h0m1 0h0m0 2h0m0-4h0m0 8h0m0 2h0m0-2h0m0-9h0m1-5h0m0 6h0m0 9h0m0-1h0m0 2h0m0-12h0m0 13h0m1-14h0m0 6h0m0 3h0m0 1h0m0-4h0m0-3h0m1 4h0m0 4h0m0-16h0m0 10h0m0-1h0m0 6h0m0-7h0m1 3h0m0 5h0m0-8h0m0 15h0m0-18h0m0 19h0m0-14h0m1-2h0m0-1h0m0 6h0m0-5h0m0 2h0m0 10h0m0-10h0m1 1h0m0-12h0m0 13h0m0-1h0m0 7h0m0-4h0m1-11h0m0 14h0m0-5h0m0-2h0m0 0h0m0 16h0m0-13h0m1-5h0m0 8h0m0 2h0m0-16h0m0 7h0m0 7h0m0 3h0m1-15h0m0 9h0m0-2h0m0-11h0m0 12h0m0 2h0m1-5h0m0 5h0m0-13h0m0 13h0m0-1h0m0 0h0m0-2h0m1 2h0m0 1h0m0-3h0m0-6h0m0 12h0m0-4h0m0 1h0m1-6h0m0-1h0m0-2h0m0-2h0m0 12h0m0-2h0m0-4h0m1-1h0m0-3h0m0 0h0m0 9h0m0-7h0m0 2h0m1 6h0m0-16h0m0 16h0m0 0h0m0 1h0m0-4h0m0-5h0m1 9h0m0-6h0m0 8h0m0-1h0m0-8h0m0-1h0m0 2h0m1 5h0m0 2h0m0-17h0m0 13h0m0 2h0m0-5h0m1 4h0m0 7h0m0-20h0m0 10h0m0 2h0m0 8h0m0-16h0m1 5h0m0 3h0m0-10h0m0 17h0m0-4h0m0-4h0m0-4h0m1 2h0m0-1h0m0 1h0m0-3h0m0 0h0m0 9h0m0 3h0m1-10h0m0 8h0m0-6h0m0 3h0m0 2h0m0 2h0m1-1h0m0 0h0m0-13h0m0 9h0m0 1h0m0-2h0m0-1h0m1 2h0m0-4h0m0-1h0m0 10h0m0-6h0m0 6h0m0-4h0m1-2h0m0 3h0m0-7h0m0 12h0m0-9h0m0 2h0m1 6h0m0-1h0m0-6h0m0-1h0m0 2h0m0 4h0m0-2h0m1-5h0m0 12h0m0-8h0m0 10h0m0-8h0m0-1h0m0-6h0m1 10h0m0-5h0m0-4h0m0 1h0m0-1h0m0 2h0m0-3h0m1 1h0m0 0h0m0-2h0m0 7h0m0 0h0m0 5h0m1-7h0m0-4h0m0 1h0m0 5h0m0-9h0m0 5h0m0 12h0m1-1h0m0-7h0m0-1h0m0-1h0m0 5h0m0 1h0m0-6h0m1 11h0m0-10h0m0 1h0m0-3h0m0-3h0m0 7h0m0-4h0m1 11h0m0-5h0m0 1h0m0-7h0m0 3h0m0 6h0m1-4h0m0-3h0m0-2h0m0 6h0m0-8h0m0 6h0m0-4h0m1 3h0m0 0h0m0-9h0m0 10h0m0 3h0m0-8h0m0 2h0m1 0h0m0 13h0m0-11h0m0 2h0m0-1h0m0-7h0m1 0h0m0-2h0m0 10h0m0 1h0m0 2h0m0-9h0m0-2h0m1 0h0m0 1h0m0 0h0m0-5h0m0 7h0m0 5h0m0-9h0m1 10h0m0 6h0m0-12h0m0 6h0m0-3h0m0 5h0m0-8h0m1 5h0m0-3h0m0-2h0m0 7h0m0-10h0m0 7h0m1-3h0m0-1h0m0-3h0m0 4h0m0 7h0m0-7h0m0-3h0m1 3h0m0 4h0m0 2h0m0-6h0m0-5h0m0 3h0m0 4h0m1-3h0m0 0h0m0-3h0m0-3h0m0 12h0m0-2h0m1-2h0m0 3h0m0 0h0m0-6h0m0 1h0m0-3h0m0 2h0m1 6h0m0-4h0m0 12h0m0-9h0m0-3h0m0 5h0m0-4h0m1-3h0m0 5h0m0 2h0m0-1h0m0-7h0m0 3h0m0-3h0m1 5h0m0-2h0m0 7h0m0-4h0m0-11h0m0 9h0m1-7h0m0 13h0m0 0h0m0-5h0m0 1h0m0-6h0m0 13h0m1-7h0m0-6h0m0 2h0m0-1h0m0 0h0m0 3h0m0 12h0m1-6h0m0-7h0m0 3h0m0 3h0m0-3h0m0-3h0m1-3h0m0 3h0m0 12h0m0-12h0m0-6h0m0-6h0m0 20h0m1 4h0m0-5h0m0-5h0m0-11h0m0 8h0m0 1h0m0 1h0m1 0h0m0 0h0m0 0h0m0-3h0m0 1h0m0 4h0m0 5h0m1-10h0m0 0h0m0 5h0m0-4h0m0 3h0m0 5h0m1-10h0m0 7h0m0-2h0m0 0h0m0 0h0m0 2h0m0 3h0m1-8h0m0 2h0m0 1h0m0 1h0m0-7h0m0 7h0m0 7h0m1-9h0m0-2h0m0 2h0m0-5h0m0 4h0m0 8h0m1 0h0m0-2h0m0-7h0m0 7h0m0-4h0m0-4h0m0-1h0m1 0h0m0-4h0m0 6h0m0-2h0m0 5h0m0 1h0m0-5h0m1 4h0m0 2h0m0-12h0m0 9h0m0 0h0m0 1h0m0-4h0m1-8h0m0 7h0m0-4h0m0 6h0m0 0h0m0-1h0m1-3h0m0 8h0m0 0h0m0-4h0m0 1h0m0-3h0m0 3h0m1 10h0m0-16h0m0 6h0m0 8h0m0-8h0m0 1h0m0 3h0m1-5h0m0 2h0m0-1h0m0 5h0m0-12h0m0-3h0m1 10h0m0 6h0m0-1h0m0-3h0m0-1h0m0 1h0m0 1h0m1 0h0m0-4h0m0 0h0m0-1h0m0 6h0m0-7h0m0 9h0m1-7h0m0 6h0m0-3h0m0-3h0m0 2h0m0-1h0m0 4h0m1 2h0m0-5h0m0-5h0m0 8h0m0 0h0m0-2h0m1 2h0m0 5h0m0-9h0m0 3h0m0 2h0m0-6h0m0-6h0m1 10h0m0-1h0m0-5h0m0 2h0m0 3h0m0-2h0m0-6h0m1 2h0m0 3h0m0 8h0m0-6h0m0 2h0m0 2h0m1-10h0m0 4h0m0 4h0m0-6h0m0 11h0m0-14h0m0 6h0m1-2h0m0 1h0m0-4h0m0 4h0m0 1h0m0-4h0m0 11h0m1-9h0m0 6h0m0-7h0m0 8h0m0-14h0m0 18h0m0-10h0m1 5h0m0-9h0m0 1h0m0 1h0m0-2h0m0 2h0m1 10h0m0-3h0m0-3h0m0-4h0m0 5h0m0-2h0m0 2h0m1-8h0m0 5h0m0 3h0m0-8h0m0 7h0m0-4h0m0-7h0m1 4h0m0 8h0m0-8h0m0 5h0m0 0h0m0 2h0m1-4h0m0 1h0m0 1h0m0 6h0m0-1h0m0-8h0m0-1h0m1 3h0m0 4h0m0-3h0m0-3h0m0-7h0m0 12h0m0-4h0m1 9h0m0-3h0m0-5h0m0 4h0m0-7h0m0 6h0m0-1h0m1-3h0m0-6h0m0 11h0m0-1h0m0 6h0m0-5h0m1-4h0m0 1h0m0-4h0m0 6h0m0-5h0m0 12h0m0-2h0m1-12h0m0 13h0m0-7h0m0 0h0m0 3h0m0-7h0m0 2h0m1 3h0m0-7h0m0 4h0m0 1h0m0 2h0m0-4h0m0 4h0m1-7h0m0 3h0m0 3h0m0 9h0m0-5h0m0-5h0m1 7h0m0-14h0m0 5h0m0-3h0m0 8h0m0-17h0m0 21h0m1-6h0m0-2h0m0-2h0m0 7h0m0-9h0m0 9h0m0 1h0m1-1h0m0-5h0m0 4h0m0-5h0m0 0h0m0 2h0m1 4h0m0-18h0m0 11h0m0 5h0m0-4h0m0-4h0m0 14h0m1-15h0m0 8h0m0-1h0m0 7h0m0-6h0m0-1h0m0 4h0m1-5h0m0-3h0m0 3h0m0-1h0m0 3h0m0-10h0m0 7h0m1 9h0m0-6h0m0 7h0m0-13h0m0 2h0m0-2h0m1 6h0m0-2h0m0-4h0m0 8h0m0 3h0m0-7h0m0-2h0m1-1h0m0 7h0m0 2h0m0-6h0m0-1h0m0 2h0m0 2h0m1-3h0m0 4h0m0-6h0m0 0h0m0 0h0m0 2h0m1-3h0m0 7h0m0 1h0m0-12h0m0 7h0m0-1h0m0 5h0m1-1h0m0-7h0m0-2h0m0 2h0m0 1h0m0 4h0m0-5h0m1-8h0m0 10h0m0 4h0m0-1h0m0-5h0m0 4h0m0 3h0m1-3h0m0 2h0m0-1h0m0-6h0m0 6h0m0-5h0m1-2h0m0 4h0m0 7h0m0-7h0m0 3h0m0 1h0m0-1h0m1 3h0m0-6h0m0 4h0m0-3h0m0 7h0m0-22h0m0 13h0m1-2h0m0 7h0m0-1h0m0-2h0m0 1h0m0 1h0m1 1h0m0-2h0m0-3h0m0 6h0m0-3h0m0 1h0m0-2h0m1 3h0m0-6h0m0 8h0m0-2h0m0-4h0m0 1h0m0-3h0m1 5h0m0 0h0m0-5h0m0 16h0m0-8h0m0-3h0m0-11h0m1 4h0m0 2h0m0 10h0m0-11h0m0 4h0m0-3h0m1 8h0m0-7h0m0-1h0m0 1h0m0 6h0m0 2h0m0-14h0m1-1h0m0 12h0m0-9h0m0 6h0m0 2h0m0-5h0m0 4h0m1 2h0m0-10h0m0 8h0m0 4h0m0-5h0m0-5h0m1-2h0m0 2h0m0 2h0m0 3h0m0 3h0m0 5h0m0-8h0m1 2h0m0-1h0m0 3h0m0 2h0m0 0h0m0-3h0m0-7h0m1 6h0m0 6h0m0-9h0m0 2h0m0-3h0m0-2h0m0 3h0m1-1h0m0 2h0m0 2h0m0 2h0m0-9h0m0 3h0m1 9h0m0-8h0m0 1h0m0-1h0m0-1h0m0 11h0m0-8h0m1 2h0m0 5h0m0-9h0m0-1h0m0 1h0m0-4h0m0-3h0m1 11h0m0-2h0m0-1h0m0-5h0m0 10h0m0-4h0m1-6h0m0 9h0m0 0h0m0-7h0m0 9h0m0-3h0m0-7h0m1 12h0m0-3h0m0-5h0m0 3h0m0-14h0m0 10h0m0 3h0m1 4h0m0-9h0m0 8h0m0-4h0m0 1h0m0-3h0m0 4h0m1-3h0m0-1h0m0 0h0m0 1h0m0-2h0m0 3h0m1 0h0m0-3h0m0 2h0m0 7h0m0-12h0m0 3h0m0 1h0m1 9h0m0-11h0m0 1h0m0 6h0m0-3h0m0-1h0m0 3h0m1-4h0m0 7h0m0-2h0m0 1h0m0-4h0m0 2h0m1 0h0m0-3h0m0 6h0m0-10h0m0 8h0m0-3h0m0-1h0m1 4h0m0 2h0m0 2h0m0-7h0m0-2h0m0 0h0m0 5h0m1 0h0m0 2h0m0 1h0m0-2h0m0-6h0m0 3h0m0-9h0m1 11h0m0 3h0m0-5h0m0-4h0m0 0h0m0 1h0m1-2h0m0 5h0m0 0h0m0 2h0m0 4h0m0 8h0m0-13h0m1 3h0m0 1h0m0-8h0m0 5h0m0-11h0m0 11h0m0-1h0m1 5h0m0-8h0m0-1h0m0 5h0m0 1h0m0 0h0m1 1h0m0 4h0m0-4h0m0 4h0m0-5h0m0-1h0m0 5h0m1-12h0m0 4h0m0 2h0m0-2h0m0-2h0m0 5h0m0 3h0m1-13h0m0 11h0m0-6h0m0 9h0m0-6h0m0-3h0m0 9h0m1-4h0m0 5h0m0-7h0m0 4h0m0-14h0m0 6h0m1 6h0m0 2h0m0 7h0m0-2h0m0-7h0m0 2h0m0 4h0m1-10h0m0 10h0m0-4h0m0-2h0m0 2h0m0 2h0m0-4h0m1-1h0m0-1h0m0 1h0m0 2h0m0-8h0m0 4h0m0 7h0m1 1h0m0 7h0m0-11h0m0-5h0m0 5h0m0 1h0m1-1h0m0 3h0m0-2h0m0 4h0m0-3h0m0 2h0m0-16h0m1 10h0m0 0h0m0 3h0m0-3h0m0-1h0m0-1h0m0 2h0m1-4h0m0 3h0m0-1h0m0-7h0m0 4h0m0 8h0m1 5h0m0-4h0m0-6h0m0 3h0m0-2h0m0-6h0m0 4h0m1 0h0m0 2h0m0-1h0m0 4h0m0-6h0m0-2h0m0 5h0m1-2h0m0 1h0m0 3h0m0-6h0m0-1h0m0 5h0m0-9h0m1 12h0m0-1h0m0-5h0m0 0h0m0 5h0m0-3h0m1 3h0m0-3h0m0 5h0m0-1h0m0 9h0m0-12h0m0 3h0m1-7h0m0 6h0m0-1h0m0 10h0m0-6h0m0-9h0m0 2h0m1 4h0m0 5h0m0-3h0m0 4h0m0-12h0m0 0h0m1 4h0m0 4h0m0-4h0m0-4h0m0 3h0m0 4h0m0-5h0m1 10h0m0 0h0m0-4h0m0-7h0m0 1h0m0 1h0m0-2h0m1 9h0m0-5h0m0-4h0m0 8h0m0-2h0m0-11h0m0 7h0m1-4h0m0 1h0m0 0h0m0 5h0m0 8h0m0-2h0m1-9h0m0-9h0m0 11h0m0-10h0m0 13h0m0-5h0m0-8h0m1 12h0m0-7h0m0 2h0m0 2h0m0 7h0m0-6h0m0 2h0m1 0h0m0 0h0m0-6h0m0 2h0m0-5h0m0 7h0m1 0h0m0 4h0m0-3h0m0-1h0m0 2h0m0-3h0m0 6h0m1-4h0m0-2h0m0 7h0m0-10h0m0-1h0m0 3h0m0 3h0m1 4h0m0-9h0m0-7h0m0 7h0m0-1h0m0 8h0m0-5h0m1 8h0m0-12h0m0 1h0m0 5h0m0 6h0m0-7h0m1-2h0m0-1h0m0-4h0m0 6h0m0 0h0m0-2h0m0 6h0m1-3h0m0-5h0m0-1h0m0 1h0m0 3h0m0-3h0m0 3h0m1 1h0m0 5h0m0-6h0m0 1h0m0 1h0m0 1h0m1-2h0m0 4h0m0-5h0m0-8h0m0 10h0m0-1h0m0 4h0m1-4h0m0-1h0m0 7h0m0 5h0m0-5h0m0 7h0m0-8h0m1-2h0m0-12h0m0 6h0m0-1h0m0 14h0m0-8h0m0-8h0m1 10h0m0-6h0m0 4h0m0-2h0m0 0h0m0-1h0m1 2h0m0-7h0m0 7h0m0 6h0m0-2h0m0-3h0m0-6h0m1 0h0m0 3h0m0-1h0m0 3h0m0 2h0m0-2h0m0 4h0m1 1h0m0-6h0m0 4h0m0-6h0m0 5h0m0-12h0m1 6h0m0 8h0m0 1h0m0-11h0m0 3h0m0 3h0m0 1h0m1 2h0m0 1h0m0-7h0m0 9h0m0-3h0m0 2h0m0-8h0m1 5h0m0-4h0m0 5h0m0 5h0m0-11h0m0-10h0m0 18h0m1 0h0m0-6h0m0 2h0m0 2h0m0-4h0m0 1h0m1-3h0m0 8h0m0-7h0m0 0h0m0-1h0m0-1h0m0 7h0m1 1h0m0-3h0m0-6h0m0 6h0m0 3h0m0-2h0m0 3h0m1-6h0m0 5h0m0-3h0m0-1h0m0 2h0m0-1h0m1 2h0m0-3h0m0 6h0m0-6h0m0 2h0m0-7h0m0-1h0m1 7h0m0-4h0m0 0h0m0 4h0m0-15h0m0 15h0m0 2h0m1-5h0m0-1h0m0-8h0m0 12h0m0 3h0m0-10h0m0 3h0m1 6h0m0-5h0m0-4h0m0 11h0m0-6h0m0 3h0m1 11h0m0-16h0m0 3h0m0 6h0m0-2h0m0-2h0m0-5h0m1 1h0m0-2h0m0 2h0m0 10h0m0-10h0m0-9h0m0 12h0m1 1h0m0-8h0m0 12h0m0-3h0m0 0h0m0-2h0m0 3h0m1 0h0m0-3h0m0 1h0m0-2h0m0 3h0m0 0h0m1 0h0m0-7h0m0-1h0m0 10h0m0-1h0m0-4h0m0-5h0m1 12h0m0-11h0m0-5h0m0 7h0m0 6h0m0-11h0m0 13h0m1-9h0m0 5h0m0-2h0m0 2h0m0-3h0m0-4h0m1 10h0m0 0h0m0-2h0m0 1h0m0-1h0m0-1h0m0-2h0m1-3h0m0 10h0m0-8h0m0 10h0m0-9h0m0-6h0m0 8h0m1 4h0m0-11h0m0 7h0m0-10h0m0 11h0m0 1h0m0-10h0m1-1h0m0 7h0m0 7h0m0-4h0m0-2h0m0-8h0m1 7h0m0 8h0m0-5h0m0-2h0m0-3h0m0 1h0m0 9h0m1 4h0m0-14h0m0 9h0m0-4h0m0 3h0m0 0h0m0-2h0m1 3h0m0-10h0m0 4h0m0-8h0m0 8h0m0 1h0m1 3h0m0-9h0m0 1h0m0 8h0m0-4h0m0 5h0m0-15h0m1 13h0m0-5h0m0 5h0m0-4h0m0-4h0m0 0h0m0 6h0m1-2h0m0-1h0m0-2h0m0 9h0m0-7h0m0 2h0m0-7h0m1 8h0m0 2h0m0-9h0m0 4h0m0 3h0m0 4h0m1-4h0m0-3h0m0 3h0m0 0h0m0 5h0m0-9h0m0 3h0m1 1h0m0 3h0m0-5h0m0-5h0m0 7h0m0 1h0m0-7h0m1 4h0m0 1h0m0-4h0m0 11h0m0 1h0m0-4h0m1 3h0m0-6h0m0-5h0m0 9h0m0-10h0m0 3h0m0 0h0m1 4h0m0 2h0m0-8h0m0 5h0m0-2h0m0 7h0m0-12h0m1 0h0m0 7h0m0-9h0m0 11h0m0 7h0m0-2h0m0-2h0m1-3h0m0-6h0m0 6h0m0 4h0m0-6h0m0-2h0m1 3h0m0 5h0m0-3h0m0-4h0m0-2h0m0 10h0m0-4h0m1-3h0m0 12h0m0-11h0m0 7h0m0-6h0m0 2h0m0-1h0m1-12h0m0 16h0m0-8h0m0 4h0m0-7h0m0 5h0m1 1h0m0-2h0m0 4h0m0-3h0m0 4h0m0-3h0m0 1h0m1-9h0m0 7h0m0 4h0m0-6h0m0 5h0m0-1h0m0-5h0m1-3h0m0 5h0m0-6h0m0-4h0m0 12h0m0 0h0m0-1h0m1-2h0m0 1h0m0 2h0m0-4h0m0 5h0m0-3h0m1-3h0m0 2h0m0 7h0m0-9h0m0 3h0m0-3h0m0 10h0m1 0h0m0-8h0m0 4h0m0-5h0m0-4h0m0 8h0m0-7h0m1 4h0m0 1h0m0-4h0m0 8h0m0-6h0m0 5h0m1 5h0m0-9h0m0 2h0m0 14h0m0-16h0m0-2h0m0 1h0m1 6h0m0-3h0m0 2h0m0-1h0m0 5h0m0-5h0m0-4h0m1 4h0m0-10h0m0 12h0m0-9h0m0 4h0m0 2h0m0-4h0m1 2h0m0 4h0m0-5h0m0 6h0m0-3h0m0 0h0m1-9h0m0 5h0m0 8h0m0-8h0m0 2h0m0 3h0m0-16h0m1 16h0m0-12h0m0 9h0m0 4h0m0-3h0m0 1h0m0 1h0m1-7h0m0 6h0m0 0h0m0-1h0m0 7h0m0-1h0m1-3h0m0 2h0m0 1h0m0-6h0m0 6h0m0-5h0m0 5h0m1-4h0m0 3h0m0-1h0m0 11h0m0-8h0m0-8h0m0-3h0m1-5h0m0 5h0m0-1h0m0 1h0m0 2h0m0 9h0m0-12h0m1 5h0m0 1h0m0 0h0m0 5h0m0-6h0m0-2h0m1-1h0m0 0h0m0-1h0m0 4h0m0-2h0m0-2h0m0 3h0m1-4h0m0 5h0m0-2h0m0 9h0m0-1h0m0-3h0m0-3h0m1-4h0m0 6h0m0-3h0m0 6h0m0 3h0m0-6h0m1 2h0m0-3h0m0 1h0m0 1h0m0-8h0m0 3h0m0 1h0m1 12h0m0-8h0m0-2h0m0-4h0m0 5h0m0-3h0m0 0h0m1-6h0m0 7h0m0 4h0m0-5h0m0 3h0m0-4h0m0 3h0m1-4h0m0 1h0m0-1h0m0 7h0m0-4h0m0-4h0m1-3h0m0 6h0m0 1h0m0-2h0m0 0h0m0 3h0m0-3h0m1 4h0m0-12h0m0-2h0m0 14h0m0-1h0m0 0h0m0 0h0m1-1h0m0 0h0m0 10h0m0-10h0m0-4h0m0 1h0m0 11h0m1-2h0m0-7h0m0 11h0m0-12h0m0 3h0m0 0h0m1-2h0m0 8h0m0-2h0m0 0h0m0-9h0m0 8h0m0-2h0m1 4h0m0-3h0m0-4h0m0-5h0m0 7h0m0-2h0m0 5h0m1-6h0m0-3h0m0 9h0m0 7h0m0-10h0m0 10h0m1-12h0m0-6h0m0 12h0m0-7h0m0-5h0m0 11h0m0-1h0m1 1h0m0-2h0m0-6h0m0 6h0m0 7h0m0-6h0m0 2h0m1-2h0m0-5h0m0 5h0m0-1h0m0-12h0m0 7h0m0 6h0m1 4h0m0-7h0m0-1h0m0 0h0m0 7h0m0 4h0m1-14h0m0-6h0m0 14h0m0-4h0m0-1h0m0 0h0m0-5h0m1 8h0m0-6h0m0-4h0m0 10h0m0-7h0m0 8h0m0-7h0m1 4h0m0-3h0m0 4h0m0 4h0m0-9h0m0 10h0m1-6h0m0-7h0m0 3h0m0 6h0m0 0h0m0-1h0m0 3h0m1-8h0m0 2h0m0 4h0m0-7h0m0 3h0m0 7h0m0-14h0m1 14h0m0 2h0m0-2h0m0 0h0m0-12h0m0 7h0m0 5h0m1-4h0m0 0h0m0-2h0m0-1h0m0-1h0m0-3h0m1 9h0m0-13h0m0 10h0m0 1h0m0-4h0m0 5h0m0 6h0m1-3h0m0-8h0m0 6h0m0 4h0m0-8h0m0-4h0m0 0h0m1 4h0m0-10h0m0 12h0m0-7h0m0 2h0m0 3h0m1-3h0m0 0h0m0 0h0m0 7h0m0 13h0m0-21h0m0 9h0m1-8h0m0 16h0m0-9h0m0-5h0m0 5h0m0-3h0m0 6h0m1 1h0m0-2h0m0-12h0m0 7h0m0 5h0m0-2h0m0-8h0m1 3h0m0 1h0m0 7h0m0-5h0m0 1h0m0-6h0m1 4h0m0 7h0m0-9h0m0 5h0m0-1h0m0-4h0m0 3h0m1-4h0m0-4h0m0 9h0m0-1h0m0 8h0m0-13h0m0 7h0m1 2h0m0 1h0m0 7h0m0-9h0m0-7h0m0 1h0m1-1h0m0 8h0m0 2h0m0-7h0m0-2h0m0-1h0m0 5h0m1 7h0m0-7h0m0-5h0m0 7h0m0-4h0m0 15h0m0-16h0m1-1h0m0 0h0m0 1h0m0 4h0m0-10h0m0 10h0m0-2h0m1-1h0m0-1h0m0 2h0m0-3h0m0 3h0m0 1h0m1-1h0m0-1h0m0 10h0m0-8h0m0 1h0m0-4h0m0-6h0m1 14h0m0-6h0m0-1h0m0 0h0m0 8h0m0-10h0m0-1h0m1 7h0m0-1h0m0 0h0m0-9h0m0 13h0m0-4h0m1 0h0m0-4h0m0 1h0m0-3h0m0 2h0m0-2h0m0 4h0m1-3h0m0-1h0m0 3h0m0-4h0m0 4h0m0 0h0m0-4h0m1 3h0m0 1h0m0 4h0m0-2h0m0 5h0m0-8h0m0 0h0m1 7h0m0-4h0m0-11h0m0 15h0m0-13h0m0 2h0m1 12h0m0 3h0m0-11h0m0 5h0m0-2h0m0-3h0m0 3h0m1 8h0m0-13h0m0-2h0m0 10h0m0-5h0m0 7h0m0-10h0m1 0h0m0-1h0m0-8h0m0 12h0m0-4h0m0 3h0m1-1h0m0 18h0m0-22h0m0 9h0m0 3h0m0-5h0m0 3h0m1-6h0m0 0h0m0 4h0m0-4h0m0 3h0m0-7h0m0 9h0m1 3h0m0-9h0m0 7h0m0-1h0m0 0h0m0 0h0m0-4h0m1 7h0m0-8h0m0 11h0m0-11h0m0 12h0m0-7h0m1-2h0m0 2h0m0 3h0m0-2h0m0 2h0m0-6h0m0 0h0m1-1h0m0-4h0m0 1h0m0-1h0m0 5h0m0-1h0m0 9h0m1-6h0m0-5h0m0 1h0m0 12h0m0-12h0m0 3h0m1 0h0m0 2h0m0 1h0m0-3h0m0 3h0m0-6h0m0 0h0m1-2h0m0 5h0m0 0h0m0-1h0m0 4h0m0-1h0m0-10h0m1 7h0m0 12h0m0-3h0m0-13h0m0-1h0m0 9h0m0-1h0m1 1h0m0-10h0m0 1h0m0 9h0m0-8h0m0 2h0m1 6h0m0-4h0m0-3h0m0 0h0m0 3h0m0 4h0m0-16h0m1 7h0m0-1h0m0 7h0m0-4h0m0 3h0m0 4h0m0-3h0m1 3h0m0 12h0m0-14h0m0-4h0m0 8h0m0-6h0m0 1h0m1 4h0m0-9h0m0 5h0m0-7h0m0 11h0m0-5h0m1 4h0m0-11h0m0 11h0m0 1h0m0 10h0m0-14h0m0-1h0m1 1h0m0 1h0m0 11h0m0-13h0m0 2h0m0-3h0m0 3h0m1 5h0m0-10h0m0-2h0m0 2h0m0 11h0m0-5h0m1-5h0m0-10h0m0 11h0m0 5h0m0-5h0m0 2h0m0 3h0m1-8h0m0 4h0m0 0h0m0 5h0m0 0h0m0-2h0m0 2h0m1-1h0m0 1h0m0-3h0m0 0h0m0 2h0m0-11h0m0 16h0m1-7h0m0 0h0m0-2h0m0 5h0m0-2h0m0-6h0m1 6h0m0-7h0m0 4h0m0 5h0m0-2h0m0-6h0m0-1h0m1 15h0" stroke="#000" stroke-width="3.5" stroke-linecap="round" fill="none"/>
<path d="M105.5 155.6H1360.8" stroke="#008000" stroke-width="2.08" fill="none"/>
<path d="M162 321.5V35.5" stroke="#800080" stroke-width="2.08" stroke-dasharray="2.08 3.44" fill="none"/>
<path d="M541 321.5V35.5" stroke="#800080" stroke-width="2.08" stroke-dasharray="2.08 3.44" fill="none"/>
<path d="M1303 321.5V35.5" stroke="#800080" stroke-width="2.08" stroke-dasharray="2.08 3.44" fill="none"/>
</g>
<g font-family='"Liberation Sans", sans-serif' fill="#000">
<text x="350.6" y="311.5" font-size="13.89" text-anchor="middle" textLength="44.125" lengthAdjust="spacingAndGlyphs">58629</text>
<text x="920.5" y="291.5" font-size="13.89" text-anchor="middle" textLength="44.125" lengthAdjust="spacingAndGlyphs">58626</text>
</g>
<rect x="105.5" y="35.5" width="1380.0" height="286.0" fill="none" stroke="#000" stroke-width="1.11"/>
<path d="M162.5 321.5v4.86" stroke="#000" stroke-width="1.11"/>
<path d="M460.5 321.5v4.86" stroke="#000" stroke-width="1.11"/>
<path d="M758.5 321.5v4.86" stroke="#000" stroke-width="1.11"/>
<path d="M1056.5 321.5v4.86" stroke="#000" stroke-width="1.11"/>
<path d="M1353.5 321.5v4.86" stroke="#000" stroke-width="1.11"/>
<g font-family='"Liberation Sans", sans-serif' fill="#000">
<text x="163.3" y="342.0" font-size="13.89" text-anchor="middle" textLength="8.75" lengthAdjust="spacingAndGlyphs">0</text>
<text x="460.1" y="342.0" font-size="13.89" text-anchor="middle" textLength="35" lengthAdjust="spacingAndGlyphs">2000</text>
<text x="757.9" y="342.0" font-size="13.89" text-anchor="middle" textLength="35" lengthAdjust="spacingAndGlyphs">4000</text>
<text x="1055.7" y="342.0" font-size="13.89" text-anchor="middle" textLength="35" lengthAdjust="spacingAndGlyphs">6000</text>
<text x="1353.4" y="342.0" font-size="13.89" text-anchor="middle" textLength="35.125" lengthAdjust="spacingAndGlyphs">8000</text>
</g>
<g font-family='"Liberation Sans", sans-serif' fill="#000">
<path d="M105.5 304.5h-4.86" stroke="#000" stroke-width="1.11"/>
<text x="94.6" y="309.8" font-size="13.89" text-anchor="end" textLength="20.325" lengthAdjust="spacingAndGlyphs">8.9</text>
<path d="M105.5 242.5h-4.86" stroke="#000" stroke-width="1.11"/>
<text x="94.6" y="247.8" font-size="13.89" text-anchor="end" textLength="20.2" lengthAdjust="spacingAndGlyphs">9.0</text>
<path d="M105.5 180.5h-4.86" stroke="#000" stroke-width="1.11"/>
<text x="94.6" y="185.8" font-size="13.89" text-anchor="end" textLength="20.2" lengthAdjust="spacingAndGlyphs">9.1</text>
<path d="M105.5 118.5h-4.86" stroke="#000" stroke-width="1.11"/>
<text x="94.6" y="123.8" font-size="13.89" text-anchor="end" textLength="20.2" lengthAdjust="spacingAndGlyphs">9.2</text>
<path d="M105.5 56.5h-4.86" stroke="#000" stroke-width="1.11"/>
<text x="94.6" y="61.8" font-size="13.89" text-anchor="end" textLength="20.2" lengthAdjust="spacingAndGlyphs">9.3</text>
</g>
<g font-family='"Liberation Sans", sans-serif' fill="#000">
<text x="794.5" y="26.9" font-size="16.67" text-anchor="middle" textLength="180.25" lengthAdjust="spacingAndGlyphs">AGASC ID 180494784</text>
</g>
<g clip-path="url(#c2)">
<path d="M167.5 422.5h0m3 13h0m2-1h0m1-33h0m0 22h0m0 5h0m7 227h0m6-58h0m16 5h0m13-171h0m30 7h0m8-16h0m6 176h0m19-158h0m7 0h0m39-2h0m34-5h0m3-14h0m0 9h0m27 12h0m3 0h0m8-2h0m143 4h0m13 161h0m5-142h0m12 2h0m14 126h0m5-2h0m18 1h0m5-124h0m16 1h0m0 120h0m20-121h0m23 127h0m19 55h0m37-46h0m27-150h0m48 8h0m37 127h0m11 72h0m11-192h0m11-3h0m9-10h0m34 139h0m27 27h0m28-26h0m78-129h0m1 4h0m7-7h0m32 193h0m14-189h0m11-8h0m4 138h0m5-128h0m10-4h0m0 133h0m113-6h0m7-3h0m11 9h0" stroke="#ffa500" stroke-width="3.5" stroke-linecap="round" fill="none"/>
<path d="M162.5 471.5h0m0 17h0m0 34h0m0 18h0m0-101h0m1 13h0m0 39h0m0-16h0m0 30h0m0-31h0m0 0h0m1 31h0m0 5h0m0-22h0m0-13h0m0 50h0m0-29h0m0-13h0m1 16h0m0-45h0m0 35h0m0-36h0m0 40h0m0 1h0m0-21h0m1 39h0m0-49h0m0 4h0m0-30h0m0 96h0m0-45h0m1-7h0m0 14h0m0 25h0m0 14h0m0-6h0m0-58h0m0 44h0m1-31h0m0-20h0m0 22h0m0 29h0m0-53h0m0 54h0m0 4h0m1-22h0m0 12h0m0-9h0m0-10h0m0-41h0m0 50h0m0-6h0m1-2h0m0-30h0m0 38h0m0-18h0m0-7h0m0 5h0m1 48h0m0-13h0m0-35h0m0 45h0m0-28h0m0 24h0m0-35h0m1 9h0m0 28h0m0-24h0m0 33h0m0-26h0m0 11h0m0-26h0m1 24h0m0-46h0m0 27h0m0 34h0m0-39h0m0 3h0m1 11h0m0 9h0m0 4h0m0-1h0m0-26h0m0 5h0m0 20h0m1-22h0m0 19h0m0-4h0m0 18h0m0-9h0m0-31h0m0 8h0m1 26h0m0-22h0m0 6h0m0-2h0m0-17h0m0 18h0m0 8h0m1 13h0m0-42h0m0 66h0m0-57h0m0 47h0m0-21h0m1-25h0m0 21h0m0 2h0m0-6h0m0-36h0m0 11h0m0 21h0m1 6h0m0 19h0m0-26h0m0 10h0m0-1h0m0 1h0m0-12h0m1 29h0m0-23h0m0 21h0m0-62h0m0 36h0m0-2h0m1-6h0m0 14h0m0 26h0m0-17h0m0-14h0m0 38h0m0-19h0m1-20h0m0-7h0m0 7h0m0 8h0m0-6h0m0 9h0m0-1h0m1-12h0m0 45h0m0-54h0m0 11h0m0 23h0m0-22h0m0 11h0m1 27h0m0-30h0m0-3h0m0 22h0m0-38h0m0 19h0m1 19h0m0-29h0m0 20h0m0-17h0m0 28h0m0-14h0m0 19h0m1-28h0m0 36h0m0-48h0m0 28h0m0-23h0m0 35h0m0-49h0m1 11h0m0 37h0m0-22h0m0 9h0m0-33h0m0 28h0m1-21h0m0 48h0m0-22h0m0 26h0m0-40h0m0 7h0m0 24h0m1-3h0m0-6h0m0-19h0m0 11h0m0 18h0m0 5h0m0 3h0m1-28h0m0 2h0m0 29h0m0 9h0m0-50h0m0 32h0m0-21h0m1 10h0m0-5h0m0-7h0m0-4h0m0 23h0m0-42h0m1 49h0m0 12h0m0-25h0m0-17h0m0-4h0m0-11h0m0 68h0m1-36h0m0 10h0m0-15h0m0 18h0m0 2h0m0 5h0m0-5h0m1 5h0m0 6h0m0-21h0m0 17h0m0-47h0m0 10h0m1 36h0m0-21h0m0 19h0m0-6h0m0-15h0m0-34h0m0 27h0m1-17h0m0 41h0m0-12h0m0-18h0m0 26h0m0 6h0m0-9h0m1 20h0m0-17h0m0-17h0m0 23h0m0 3h0m0-31h0m0 4h0m1-4h0m0 40h0m0-68h0m0 12h0m0 9h0m0 23h0m1 12h0m0-13h0m0 1h0m0-33h0m0 61h0m0-13h0m0-15h0m1-12h0m0 58h0m0-37h0m0 37h0m0-4h0m0-67h0m0 49h0m1-5h0m0-35h0m0 27h0m0 12h0m0-39h0m0 88h0m1-53h0m0-10h0m0 3h0m0-41h0m0 68h0m0-54h0m0 40h0m1-23h0m0 4h0m0 42h0m0-18h0m0-40h0m0 43h0m0-20h0m1-18h0m0 16h0m0-16h0m0-6h0m0 12h0m0-13h0m0-1h0m1-6h0m0-11h0m0 4h0m0 20h0m0-17h0m0 17h0m1-8h0m0-12h0m0 2h0m0 0h0m0-25h0m0-38h0m0 68h0m1-11h0m0 0h0m0-53h0m0 24h0m0 4h0m0 5h0m0 7h0m1-2h0m0 42h0m0-52h0m0 26h0m0-13h0m0-11h0m0 20h0m1 0h0m0-10h0m0 23h0m0-62h0m0 62h0m0-30h0m1 5h0m0 8h0m0-32h0m0 21h0m0 16h0m0-35h0m0 43h0m1-3h0m0 23h0m0-56h0m0 32h0m0 10h0m0-16h0m0 16h0m1-13h0m0 3h0m0 21h0m0-45h0m0-52h0m0 51h0m1 5h0m0 12h0m0-3h0m0 12h0m0-24h0m0 21h0m0-10h0m1 26h0m0 10h0m0-51h0m0 25h0m0 0h0m0 1h0m0-20h0m1 17h0m0 2h0m0-14h0m0 32h0m0-47h0m0 46h0m0-42h0m1 38h0m0-12h0m0 18h0m0-20h0m0 9h0m0 7h0m1-1h0m0-26h0m0 14h0m0 16h0m0-30h0m0-8h0m0 20h0m1-41h0m0 41h0m0 26h0m0-50h0m0 25h0m0-15h0m0 36h0m1-17h0m0-19h0m0 39h0m0 16h0m0-51h0m0 30h0m1-11h0m0 14h0m0-12h0m0-12h0m0-13h0m0 14h0m0 22h0m1-15h0m0 2h0m0 7h0m0-11h0m0 21h0m0-8h0m0-16h0m1 1h0m0 2h0m0 12h0m0-11h0m0 12h0m0 19h0m0 1h0m1-34h0m0 9h0m0 6h0m0-4h0m0 3h0m0-37h0m1 28h0m0 1h0m0 14h0m0-19h0m0-14h0m0 20h0m0-6h0m1-13h0m0 24h0m0-32h0m0 51h0m0-29h0m0 6h0m0 15h0m1 3h0m0-23h0m0 18h0m0-14h0m0 19h0m0 5h0m1-21h0m0 20h0m0-8h0m0 8h0m0-24h0m0 20h0m0 1h0m1 30h0m0-53h0m0-2h0m0 55h0m0-43h0m0-17h0m0 21h0m1 11h0m0-26h0m0-4h0m0 17h0m0-13h0m0 26h0m0-49h0m1 66h0m0-68h0m0 21h0m0 2h0m0 29h0m0-15h0m1 7h0m0 20h0m0-49h0m0 13h0m0 44h0m0-12h0m0-16h0m1 17h0m0-5h0m0-10h0m0 3h0m0 36h0m0-55h0m0-6h0m1 13h0m0-32h0m0 23h0m0 6h0m0 19h0m0-26h0m1 37h0m0-48h0m0 29h0m0 17h0m0 1h0m0 3h0m0-5h0m1 2h0m0 9h0m0-42h0m0 24h0m0-17h0m0-13h0m0 21h0m1 15h0m0-22h0m0-11h0m0 27h0m0-16h0m0-15h0m0-15h0m1 52h0m0-25h0m0 24h0m0 1h0m0-48h0m0 7h0m1-2h0m0-2h0m0 16h0m0 20h0m0-2h0m0-71h0m0 79h0m1-33h0m0-25h0m0 2h0m0 9h0m0-4h0m0 8h0m0-28h0m1 32h0m0-27h0m0 23h0m0 23h0m0-33h0m0 3h0m1-28h0m0 15h0m0 9h0m0-16h0m0 26h0m0-51h0m0 22h0m1-15h0m0 9h0m0 0h0m0-5h0m0 40h0m0 25h0m0-73h0m1 50h0m0-8h0m0-47h0m0 51h0m0 6h0m0-6h0m0-12h0m1-21h0m0 69h0m0-39h0m0-43h0m0 78h0m0-38h0m1 25h0m0-6h0m0-6h0m0-24h0m0 8h0m0 6h0m0 8h0m1-3h0m0-10h0m0 14h0m0-2h0m0-13h0m0-9h0m0 17h0m1-23h0m0 29h0m0 12h0m0-23h0m0-14h0m0 8h0m1 10h0m0 15h0m0-21h0m0 27h0m0-43h0m0 34h0m0-24h0m1 13h0m0-8h0m0 19h0m0 24h0m0-35h0m0 9h0m0 13h0m1-41h0m0 37h0m0-27h0m0-4h0m0-2h0m0 53h0m0-14h0m1-8h0m0-7h0m0 8h0m0-6h0m0-7h0m0 14h0m1-24h0m0 34h0m0-43h0m0 39h0m0-10h0m0-25h0m0 30h0m1-22h0m0 0h0m0 33h0m0-24h0m0 14h0m0-40h0m0-1h0m1 72h0m0-21h0m0-51h0m0 28h0m0-3h0m0 1h0m1 12h0m0 3h0m0-21h0m0 24h0m0-18h0m0 10h0m0 9h0m1-2h0m0-34h0m0 17h0m0 8h0m0 33h0m0-26h0m0-12h0m1 0h0m0-8h0m0 16h0m0 15h0m0 19h0m0-13h0m0-12h0m1-9h0m0-3h0m0-15h0m0 56h0m0-30h0m0-12h0m1-17h0m0 64h0m0-22h0m0-19h0m0 4h0m0-3h0m0-15h0m1 32h0m0-16h0m0 8h0m0-21h0m0 46h0m0-21h0m0 8h0m1-7h0m0-11h0m0-4h0m0 50h0m0-89h0m0 42h0m0 1h0m1 8h0m0-52h0m0 47h0m0 39h0m0-19h0m0-7h0m1 2h0m0-27h0m0 11h0m0 30h0m0-6h0m0 5h0m0-25h0m1 0h0m0-6h0m0 8h0m0 17h0m0-35h0m0 66h0m0-39h0m1-20h0m0 27h0m0 13h0m0-4h0m0-45h0m0-18h0m1 30h0m0-15h0m0 44h0m0-1h0m0-8h0m0-17h0m0 32h0m1 7h0m0-51h0m0 23h0m0-36h0m0 54h0m0-21h0m0-15h0m1 11h0m0-15h0m0 31h0m0 7h0m0-42h0m0 32h0m0-23h0m1 30h0m0-10h0m0 6h0m0-22h0m0-22h0m0 64h0m1-13h0m0 8h0m0-47h0m0 7h0m0 46h0m0-36h0m0-4h0m1-22h0m0 49h0m0-4h0m0 0h0m0-18h0m0-8h0m0-3h0m1 75h0m0-75h0m0 12h0m0 41h0m0-54h0m0-8h0m1 22h0m0 16h0m0-3h0m0-6h0m0 39h0m0-36h0m0-45h0m1 25h0m0 8h0m0-21h0m0 29h0m0-70h0m0 60h0m0-19h0m1-28h0m0 18h0m0-13h0m0 27h0m0-1h0m0-29h0m0 17h0m1 30h0m0-29h0m0-11h0m0-46h0m0 45h0m0-23h0m1 3h0m0 36h0m0-36h0m0 12h0m0-15h0m0 48h0m0 0h0m1-8h0m0-16h0m0-4h0m0-19h0m0 40h0m0 15h0m0-31h0m1 25h0m0-40h0m0-31h0m0 50h0m0-31h0m0 17h0m1 22h0m0-37h0m0 19h0m0 14h0m0-13h0m0 32h0m0-31h0m1 33h0m0-56h0m0 21h0m0 10h0m0-13h0m0 9h0m0 12h0m1 4h0m0-53h0m0 34h0m0 13h0m0 4h0m0 1h0m0-49h0m1 78h0m0-33h0m0 27h0m0-21h0m0-37h0m0 41h0m1-36h0m0 34h0m0-66h0m0 65h0m0-37h0m0 45h0m0-31h0m1 32h0m0-9h0m0 12h0m0-8h0m0-20h0m0 10h0m0 3h0m1 1h0m0-2h0m0 4h0m0 8h0m0 5h0m0 15h0m1-39h0m0-11h0m0 20h0m0-34h0m0 39h0m0-14h0m0 2h0m1-5h0m0 19h0m0-4h0m0-2h0m0-7h0m0 43h0m0-34h0m1 1h0m0-40h0m0 39h0m0-23h0m0 19h0m0 24h0m0-13h0m1-31h0m0 18h0m0 24h0m0-14h0m0 19h0m0-34h0m1 25h0m0-15h0m0-11h0m0 27h0m0-17h0m0 7h0m0-11h0m1 12h0m0 10h0m0-4h0m0 8h0m0 6h0m0-54h0m0-10h0m1 38h0m0 3h0m0 17h0m0-18h0m0 21h0m0-11h0m1 3h0m0-23h0m0-5h0m0 19h0m0-18h0m0 1h0m0 33h0m1-23h0m0 12h0m0-11h0m0 22h0m0-49h0m0 15h0m0-1h0m1 42h0m0-15h0m0-27h0m0 9h0m0 13h0m0 2h0m0-26h0m1 59h0m0-18h0m0 10h0m0-46h0m0 46h0m0-25h0m1-23h0m0 30h0m0-10h0m0 5h0m0-13h0m0-26h0m0 61h0m1-38h0m0-12h0m0-13h0m0 40h0m0-21h0m0 13h0m0 1h0m1-21h0m0 62h0m0-31h0m0-10h0m0 15h0m0 20h0m1-47h0m0 29h0m0-51h0m0 53h0m0-29h0m0-4h0m0 17h0m1 31h0m0-7h0m0-10h0m0 9h0m0-44h0m0 45h0m0-23h0m1 0h0m0 34h0m0 0h0m0-28h0m0 4h0m0 3h0m0 0h0m1 43h0m0-19h0m0-16h0m0-7h0m0-9h0m0 19h0m1-34h0m0 48h0m0-30h0m0-1h0m0 15h0m0-19h0m0 23h0m1-38h0m0 22h0m0-11h0m0 52h0m0-42h0m0 20h0m0-37h0m1-25h0m0 26h0m0 19h0m0-11h0m0 2h0m0 21h0m0-11h0m1 40h0m0-52h0m0 31h0m0-11h0m0 21h0m0-50h0m1 31h0m0-54h0m0 68h0m0 3h0m0-32h0m0-11h0m0 26h0m1-21h0m0-3h0m0 38h0m0 28h0m0 7h0m0-52h0m0 2h0m1 26h0m0-25h0m0 11h0m0-2h0m0-16h0m0 46h0m1-34h0m0-3h0m0 13h0m0-6h0m0 24h0m0-23h0m0-25h0m1 7h0m0 34h0m0-26h0m0-14h0m0 17h0m0 13h0m0-12h0m1 5h0m0-38h0m0 48h0m0-35h0m0 28h0m0 25h0m0-38h0m1-15h0m0 5h0m0-6h0m0 28h0m0-24h0m0 26h0m1-61h0m0 0h0m0 42h0m0-16h0m0 11h0m0-21h0m0 0h0m1 18h0m0-34h0m0 16h0m0-15h0m0-21h0m0 14h0m0 38h0m1-21h0m0-41h0m0 38h0m0-16h0m0 16h0m0 0h0m1-12h0m0-20h0m0 20h0m0-16h0m0 47h0m0-58h0m0 38h0m1-30h0m0 4h0m0 41h0m0-51h0m0 19h0m0 33h0m0-31h0m1-15h0m0 48h0m0-37h0m0 36h0m0-11h0m0-54h0m0 18h0m1 23h0m0-21h0m0-9h0m0-6h0m0 5h0m0 6h0m1 38h0m0-16h0m0 10h0m0 36h0m0-20h0m0-23h0m0 10h0m1 9h0m0-27h0m0 32h0m0-11h0m0-16h0m0 22h0m0 26h0m1-29h0m0-2h0m0-28h0m0 18h0m0 8h0m0-37h0m1 34h0m0-5h0m0-1h0m0 26h0m0-10h0m0-30h0m0 23h0m1-21h0m0-5h0m0 41h0m0-28h0m0-21h0m0-3h0m0 28h0m1 33h0m0-17h0m0 0h0m0-5h0m0-11h0m0-11h0m0 41h0m1-11h0m0-9h0m0 20h0m0-42h0m0 29h0m0 15h0m1-38h0m0 16h0m0 20h0m0-9h0m0-24h0m0 0h0m0 43h0m1-45h0m0 42h0m0-44h0m0 29h0m0-31h0m0 25h0m0-4h0m1 8h0m0 6h0m0 3h0m0-9h0m0-4h0m0 29h0m1-23h0m0 5h0m0-38h0m0 13h0m0 8h0m0-31h0m0 76h0m1-60h0m0 8h0m0 13h0m0-40h0m0 45h0m0 19h0m0-37h0m1-1h0m0-3h0m0 18h0m0 24h0m0-2h0m0 15h0m0-31h0m1-9h0m0-7h0m0 3h0m0 8h0m0-19h0m0 30h0m1 50h0m0-45h0m0-20h0m0 10h0m0-6h0m0 18h0m0-30h0m1 39h0m0 12h0m0-41h0m0 5h0m0 14h0m0-14h0m0 23h0m1 14h0m0-9h0m0 5h0m0-40h0m0 12h0m0-15h0m1 28h0m0-19h0m0 20h0m0-5h0m0-20h0m0 60h0m0-40h0m1-16h0m0 21h0m0-2h0m0 5h0m0-28h0m0 4h0m0 7h0m1 44h0m0-46h0m0 20h0m0 2h0m0 7h0m0-20h0m0-4h0m1 14h0m0 8h0m0-6h0m0 16h0m0-57h0m0 28h0m1 32h0m0-43h0m0 28h0m0-16h0m0 5h0m0 14h0m0-30h0m1 4h0m0 28h0m0-38h0m0 26h0m0 3h0m0-29h0m0 45h0m1-20h0m0 7h0m0 9h0m0 5h0m0-31h0m0 23h0m1-27h0m0 5h0m0 0h0m0 16h0m0-3h0m0-32h0m0-7h0m1 5h0m0 35h0m0-2h0m0-6h0m0 12h0m0-25h0m0 7h0m1 15h0m0-14h0m0-1h0m0-15h0m0 2h0m0-22h0m0 15h0m1 18h0m0-51h0m0 49h0m0-63h0m0 61h0m0-50h0m1 26h0m0-21h0m0 7h0m0 25h0m0-42h0m0 15h0m0-22h0m1 41h0m0-6h0m0-27h0m0-1h0m0 57h0m0-76h0m0 21h0m1-5h0m0 10h0m0 17h0m0 10h0m0 7h0m0-18h0m1-7h0m0-17h0m0 6h0m0-11h0m0 42h0m0 17h0m0-45h0m1 35h0m0-11h0m0-27h0m0 17h0m0-20h0m0 38h0m0-14h0m1 26h0m0-54h0m0 23h0m0 15h0m0 11h0m0 10h0m0-28h0m1-29h0m0 39h0m0-22h0m0 46h0m0 20h0m0-36h0m1-37h0m0 52h0m0 10h0m0-41h0m0 25h0m0-63h0m0 36h0m1-30h0m0 25h0m0-5h0m0 45h0m0-67h0m0 10h0m0 44h0m1 8h0m0-4h0m0-19h0m0 16h0m0 5h0m0-69h0m0 72h0m1-15h0m0-25h0m0 28h0m0-14h0m0 17h0m0-29h0m1 9h0m0 6h0m0 14h0m0-12h0m0-2h0m0 40h0m0-51h0m1 1h0m0-1h0m0 20h0m0 40h0m0-56h0m0-6h0m0 15h0m1-21h0m0 5h0m0 49h0m0-26h0m0 5h0m0-37h0m1 49h0m0-37h0m0 8h0m0 3h0m0 20h0m0-9h0m0 16h0m1-11h0m0 9h0m0-20h0m0 28h0m0-2h0m0-1h0m0-46h0m1-6h0m0 66h0m0-38h0m0 22h0m0-5h0m0-5h0m0 10h0m1-24h0m0 21h0m0 1h0m0-30h0m0 18h0m0 31h0m1 13h0m0-67h0m0 21h0m0-26h0m0 41h0m0-17h0m0 14h0m1-15h0m0 15h0m0-18h0m0 27h0m0-11h0m0-27h0m0 37h0m1-21h0m0 27h0m0 10h0m0-28h0m0 14h0m0-45h0m1 12h0m0 45h0m0-30h0m0-14h0m0-27h0m0 59h0m0-27h0m1 35h0m0-37h0m0 25h0m0-5h0m0 23h0m0-17h0m0 7h0m1-40h0m0 25h0m0-14h0m0 23h0m0-13h0m0 11h0m0 21h0m1-21h0m0 18h0m0-59h0m0 36h0m0 18h0m0-11h0m1 5h0m0 5h0m0-14h0m0 1h0m0-18h0m0 16h0m0-12h0m1 16h0m0-19h0m0-8h0m0 20h0m0 16h0m0 7h0m0-12h0m1 26h0m0-39h0m0 21h0m0 3h0m0 4h0m0-45h0m1 31h0m0-23h0m0 22h0m0-37h0m0 54h0m0-3h0m0 30h0m1-37h0m0-30h0m0 14h0m0-12h0m0 18h0m0 17h0m0-38h0m1 32h0m0-31h0m0 43h0m0-22h0m0-25h0m0 51h0m0-6h0m1 28h0m0-8h0m0-31h0m0 19h0m0 7h0m0-53h0m1 15h0m0 37h0m0-9h0m0-3h0m0-49h0m0 24h0m0 4h0m1 35h0m0-41h0m0-14h0m0 6h0m0 25h0m0-9h0m0-43h0m1 33h0m0-3h0m0-17h0m0 8h0m0-3h0m0-30h0m1 20h0m0 16h0m0 16h0m0-53h0m0 50h0m0-20h0m0-2h0m1 3h0m0-40h0m0 46h0m0-8h0m0-1h0m0-29h0m0 36h0m1-51h0m0 39h0m0-38h0m0 33h0m0 17h0m0-22h0m0 6h0m1-2h0m0-58h0m0 23h0m0 27h0m0 13h0m0-24h0m1 18h0m0-10h0m0 8h0m0 2h0m0-17h0m0 39h0m0-29h0m1 28h0m0-25h0m0 28h0m0-21h0m0 2h0m0-4h0m0 0h0m1 18h0m0-39h0m0 2h0m0 3h0m0 13h0m0 20h0m1-19h0m0 16h0m0-11h0m0 19h0m0-6h0m0-21h0m0 5h0m1 5h0m0 0h0m0-6h0m0 14h0m0 5h0m0-28h0m0 42h0m1-20h0m0-16h0m0-4h0m0 42h0m0-46h0m0-12h0m0 10h0m1 2h0m0 16h0m0-10h0m0 29h0m0-21h0m0 9h0m1 11h0m0 15h0m0-34h0m0 38h0m0-76h0m0 29h0m0 16h0m1 2h0m0-5h0m0-3h0m0 36h0m0-5h0m0-45h0m0 40h0m1-14h0m0-24h0m0 5h0m0 22h0m0 17h0m0-46h0m1 27h0m0-4h0m0-27h0m0 46h0m0-31h0m0 26h0m0-5h0m1-10h0m0-17h0m0 13h0m0 0h0m0 17h0m0 24h0m0-68h0m1 21h0m0-9h0m0 35h0m0-11h0m0-41h0m0 41h0m0 15h0m1-30h0m0 23h0m0-14h0m0 40h0m0-57h0m0 13h0m1 21h0m0-21h0m0 11h0m0 5h0m0-26h0m0 34h0m0-32h0m1 31h0m0-38h0m0 29h0m0 0h0m0-13h0m0 16h0m0 4h0m1-1h0m0-13h0m0 7h0m0-9h0m0 2h0m0 2h0m1 0h0m0 14h0m0-23h0m0 17h0m0-13h0m0-27h0m0 38h0m1-13h0m0-8h0m0 14h0m0 46h0m0-24h0m0-10h0m0-3h0m1 3h0m0 19h0m0-41h0m0 19h0m0-5h0m0-16h0m0 55h0m1-17h0m0-6h0m0-6h0m0-11h0m0 31h0m0-18h0m1-13h0m0 17h0m0 17h0m0-23h0m0 9h0m0 20h0m0-19h0m1-9h0m0-4h0m0-12h0m0 22h0m0-9h0m0 45h0m0-51h0m1 17h0m0 20h0m0-21h0m0-22h0m0 37h0m0-2h0m0-33h0m1-22h0m0 16h0m0 30h0m0 18h0m0 0h0m0-10h0m1-2h0m0-32h0m0 26h0m0-17h0m0-6h0m0 43h0m0-4h0m1 12h0m0-37h0m0 14h0m0-3h0m0 50h0m0-80h0m0 25h0m1 48h0m0-85h0m0 33h0m0-23h0m0-16h0m0 13h0m1-9h0m0-26h0m0 60h0m0-60h0m0 52h0m0-16h0m0-5h0m1 20h0m0-17h0m0-17h0m0 11h0m0 2h0m0-31h0m0 43h0m1-24h0m0-44h0m0 17h0m0-5h0m0 56h0m0-45h0m0-3h0m1 18h0m0 10h0m0-18h0m0 4h0m0 21h0m0-29h0m1 25h0m0-26h0m0 8h0m0 28h0m0-56h0m0 29h0m0-21h0m1 66h0m0-62h0m0 33h0m0-6h0m0 5h0m0-13h0m0 36h0m1-29h0m0-27h0m0 63h0m0-37h0m0-2h0m0-25h0m1 39h0m0 3h0m0-11h0m0 6h0m0 38h0m0-8h0m0-41h0m1-12h0m0 5h0m0-13h0m0 1h0m0 32h0m0-4h0m0-31h0m1 54h0m0 2h0m0-5h0m0 11h0m0-23h0m0-7h0m0-5h0m1 12h0m0-32h0m0 1h0m0-3h0m0 31h0m0-16h0m1 3h0m0-36h0m0 59h0m0 2h0m0-27h0m0 5h0m0-4h0m1-3h0m0 2h0m0 14h0m0 23h0m0-74h0m0 52h0m0-20h0m1 27h0m0 13h0m0-46h0m0 13h0m0 19h0m0-34h0m1 14h0m0 18h0m0-16h0m0 2h0m0 42h0m0-38h0m0-18h0m1 26h0m0-18h0m0 12h0m0-45h0m0 57h0m0 12h0m0-22h0m1 15h0m0-14h0m0-2h0m0-23h0m0 31h0m0 4h0m0-8h0m1-17h0m0 15h0m0-37h0m0 41h0m0-11h0m0-16h0m1 14h0m0 19h0m0-7h0m0-35h0m0 59h0m0-4h0m0-26h0m1 7h0m0-8h0m0 11h0m0 8h0m0 11h0m0-7h0m0-16h0m1-17h0m0 23h0m0 3h0m0 4h0m0 5h0m0-27h0m1 10h0m0-8h0m0-3h0m0 4h0m0 12h0m0 4h0m0 13h0m1-33h0m0 8h0m0-31h0m0 42h0m0-6h0m0-52h0m0 55h0m1 8h0m0-6h0m0 5h0m0-7h0m0-11h0m0-9h0m0 24h0m1 9h0m0 20h0m0-23h0m0 5h0m0 7h0m0-18h0m1 10h0m0 7h0m0-15h0m0 19h0m0-17h0m0 30h0m0-1h0m1-27h0m0 21h0m0-7h0m0 6h0m0-15h0m0 5h0m0 40h0m1-57h0m0-7h0m0 17h0m0 17h0m0-14h0m0-23h0m1-4h0m0 35h0m0-32h0m0 47h0m0-6h0m0-8h0m0-9h0m1-25h0m0 22h0m0-12h0m0 23h0m0-36h0m0 42h0m0-6h0m1-23h0m0 4h0m0 19h0m0 1h0m0-3h0m0-5h0m0-32h0m1 69h0m0-31h0m0-33h0m0 34h0m0-24h0m0 6h0m1 9h0m0-27h0m0 22h0m0 39h0m0-15h0m0-6h0m0-11h0m1 16h0m0-28h0m0 13h0m0 31h0m0-46h0m0 62h0m0-38h0m1-16h0m0 51h0m0-27h0m0-13h0m0 22h0m0 18h0m1-27h0m0-13h0m0 44h0m0-47h0m0 16h0m0-29h0m0 16h0m1-23h0m0 31h0m0-8h0m0-23h0m0 20h0m0 12h0m0-34h0m1 59h0m0-62h0m0 43h0m0-23h0m0 27h0m0-13h0m0 5h0m1 6h0m0 12h0m0-24h0m0-9h0m0-3h0m0-7h0m1 24h0m0 23h0m0-48h0m0 47h0m0-40h0m0 46h0m0-35h0m1-17h0m0 34h0m0 40h0m0-51h0m0 7h0m0-17h0m0 1h0m1 24h0m0-56h0m0 45h0m0-8h0m0 32h0m0-33h0m1 25h0m0-30h0m0 7h0m0-17h0m0-14h0m0 35h0m0 3h0m1-45h0m0 59h0m0 6h0m0-72h0m0 46h0m0-7h0m0-17h0m1-22h0m0 27h0m0-9h0m0 15h0m0-38h0m0-10h0m0 23h0m1 15h0m0-13h0m0 16h0m0-39h0m0-11h0m0 39h0m1 17h0m0-61h0m0 9h0m0-7h0m0 56h0m0-33h0m0-4h0m1 20h0m0 15h0m0-60h0m0 50h0m0 14h0m0-35h0m0-9h0m1 23h0m0-3h0m0 0h0m0 15h0m0-7h0m0-4h0m0-12h0m1 1h0m0 7h0m0-17h0m0 35h0m0-40h0m0-9h0m1 53h0m0-10h0m0-16h0m0 5h0m0-18h0m0 12h0m0-14h0m1 23h0m0-30h0m0 26h0m0 11h0m0 0h0m0 1h0m0-33h0m1 1h0m0 54h0m0-12h0m0-31h0m0-4h0m0 14h0m1-2h0m0 35h0m0-53h0m0 51h0m0-11h0m0-47h0m0 38h0m1-17h0m0 17h0m0 16h0m0-19h0m0-13h0m0 24h0m0-27h0m1-1h0m0-11h0m0 28h0m0 9h0m0-11h0m0 6h0m0 10h0m1-10h0m0-15h0m0-2h0m0-37h0m0 29h0m0-38h0m1 51h0m0-9h0m0-1h0m0 8h0m0-16h0m0 2h0m0 31h0m1-15h0m0 9h0m0-18h0m0 29h0m0-22h0m0 34h0m0-15h0m1 10h0m0 13h0m0-10h0m0-3h0m0-8h0m0-10h0m1 13h0m0 0h0m0-56h0m0 58h0m0-6h0m0-36h0m0 36h0m1-5h0m0 0h0m0-10h0m0 29h0m0-8h0m0-3h0m0-10h0m1-8h0m0-1h0m0 26h0m0-7h0m0-22h0m0 20h0m0 7h0m1 14h0m0 1h0m0-26h0m0 27h0m0-23h0m0-23h0m1 21h0m0 20h0m0 23h0m0 11h0m0-114h0m0 95h0m0-10h0m1-25h0m0-14h0m0 17h0m0-8h0m0 37h0m0-39h0m0 32h0m1-36h0m0 1h0m0 65h0m0-40h0m0 15h0m0-18h0m1-21h0m0 15h0m0 15h0m0 10h0m0-1h0m0-58h0m0 39h0m1 15h0m0-3h0m0-23h0m0 5h0m0 19h0m0-51h0m0 29h0m1 6h0m0-4h0m0-1h0m0 33h0m0-34h0m0 28h0m0-4h0m1 5h0m0-19h0m0 17h0m0-15h0m0 18h0m0-38h0m1 25h0m0 23h0m0-37h0m0-26h0m0 58h0m0-30h0m0-3h0m1-20h0m0 43h0m0-1h0m0-2h0m0-39h0m0 23h0m0 19h0m1-7h0m0-15h0m0-6h0m0 10h0m0-26h0m0 48h0m1-2h0m0-20h0m0 5h0m0-22h0m0 4h0m0-21h0m0 11h0m1-3h0m0 12h0m0-26h0m0 11h0m0 1h0m0 32h0m0-57h0m1 53h0m0-37h0m0-21h0m0 16h0m0 25h0m0-21h0m0-13h0m1 39h0m0 12h0m0-33h0m0-41h0m0 64h0m0-50h0m1 31h0m0 21h0m0-30h0m0 13h0m0-22h0m0 30h0m0-48h0m1 35h0m0-29h0m0 41h0m0 4h0m0-25h0m0 1h0m0 17h0m1-37h0m0 49h0m0-15h0m0-26h0m0 7h0m0 54h0m1-25h0m0 11h0m0-32h0m0 64h0m0-57h0m0-12h0m0 26h0m1 7h0m0-40h0m0 55h0m0-50h0m0-23h0m0 64h0m0-14h0m1 8h0m0-10h0m0 4h0m0-36h0m0 20h0m0 3h0m0-8h0m1 39h0m0-26h0m0-14h0m0 4h0m0 1h0m0 28h0m1-31h0m0 9h0m0-9h0m0-24h0m0 27h0m0 13h0m0-18h0m1 28h0m0-49h0m0 35h0m0-5h0m0 23h0m0-8h0m0 14h0m1-45h0m0 34h0m0-41h0m0-7h0m0 32h0m0-1h0m1-16h0m0 32h0m0 23h0m0-63h0m0 34h0m0-14h0m0 40h0m1-23h0m0 1h0m0 5h0m0-18h0m0 23h0m0-4h0m0-47h0m1 27h0m0 27h0m0-56h0m0 28h0m0 4h0m0 55h0m0-75h0m1 34h0m0-5h0m0-32h0m0 27h0m0-29h0m0 18h0m1-5h0m0 61h0m0-75h0m0 51h0m0-26h0m0 32h0m0-32h0m1 1h0m0-16h0m0 26h0m0-7h0m0 20h0m0 7h0m0-22h0m1 8h0m0 10h0m0-35h0m0-7h0m0 30h0m0-29h0m1 31h0m0 2h0m0 0h0m0 2h0m0-2h0m0 39h0m0-62h0m1 15h0m0 13h0m0 11h0m0-30h0m0 7h0m0 12h0m0-12h0m1 19h0m0-35h0m0 10h0m0 21h0m0 13h0m0-23h0m0 2h0m1-3h0m0 2h0m0-8h0m0 12h0m0-8h0m0-11h0m1 24h0m0-3h0m0-9h0m0 28h0m0-25h0m0 32h0m0-9h0m1-7h0m0 19h0m0-14h0m0-21h0m0 11h0m0-10h0m0-18h0m1 28h0m0-14h0m0 24h0m0 9h0m0-38h0m0 22h0m0 3h0m1-14h0m0 1h0m0 9h0m0-23h0m0 35h0m0-26h0m1 44h0m0-61h0m0 47h0m0-54h0m0 24h0m0-8h0m0 3h0m1 26h0m0 9h0m0-8h0m0-22h0m0 81h0m0-70h0m0 11h0m1 2h0m0 13h0m0-12h0m0-10h0m0-3h0m0 20h0m1-9h0m0-4h0m0-36h0m0 4h0m0 14h0m0 46h0m0-35h0m1 50h0m0-37h0m0-24h0m0 20h0m0 6h0m0-36h0m0-12h0m1 61h0m0-22h0m0 29h0m0-1h0m0-17h0m0-18h0m0-10h0m1 25h0m0-26h0m0 38h0m0-8h0m0-18h0m0 27h0m1-48h0m0 10h0m0 0h0m0-18h0m0 27h0m0-26h0m0 23h0m1-41h0m0 1h0m0-29h0m0 21h0m0-23h0m0 22h0m0 26h0m1-44h0m0 11h0m0 21h0m0-37h0m0 34h0m0-12h0m1 21h0m0-42h0m0 27h0m0-17h0m0 42h0m0-11h0m0 23h0m1-14h0m0-26h0m0 25h0m0 8h0m0-18h0m0 31h0m0-46h0m1 9h0m0-12h0m0 27h0m0-11h0m0-13h0m0 23h0m0 3h0m1-7h0m0-16h0m0 19h0m0 30h0m0-10h0m0-52h0m1 10h0m0-19h0m0-5h0m0 14h0m0 23h0m0-25h0m0 43h0m1-5h0m0-20h0m0-6h0m0-1h0m0 38h0m0-59h0m0 32h0m1 12h0m0-17h0m0 16h0m0 2h0m0-17h0m0 24h0m1-14h0m0 35h0m0-24h0m0-5h0m0-1h0m0 12h0m0 18h0m1-6h0m0-16h0m0-13h0m0 31h0m0-27h0m0-9h0m0-9h0m1-3h0m0 27h0m0-23h0m0 1h0m0 6h0m0 23h0m0-23h0m1 6h0m0 19h0m0 11h0m0 12h0m0-19h0m0-9h0m1 20h0m0 20h0m0-43h0m0 49h0m0-34h0m0-43h0m0 51h0m1-18h0m0 11h0m0-12h0m0 52h0m0-64h0m0 35h0m0 0h0m1 34h0m0-9h0m0-27h0m0 0h0m0-6h0m0-19h0m1 23h0m0 10h0m0-8h0m0 36h0m0-75h0m0 23h0m0-19h0m1 46h0m0 1h0m0-25h0m0 21h0m0-9h0m0-1h0m0-3h0m1 2h0m0 1h0m0-18h0m0 33h0m0-32h0m0 40h0m0-37h0m1 29h0m0-52h0m0 4h0m0 38h0m0 2h0m0-31h0m1 3h0m0 3h0m0-8h0m0 15h0m0-25h0m0 0h0m0 26h0m1-8h0m0 14h0m0 3h0m0 36h0m0-53h0m0 11h0m0 20h0m1-19h0m0 4h0m0-9h0m0-10h0m0 7h0m0 6h0m1-12h0m0 29h0m0-7h0m0 1h0m0-11h0m0-7h0m0 13h0m1 20h0m0-26h0m0-13h0m0 7h0m0-15h0m0 6h0m0 31h0m1 5h0m0-32h0m0-9h0m0 5h0m0 26h0m0-1h0m0 2h0m1-44h0m0 15h0m0 32h0m0-7h0m0 21h0m0-32h0m1 27h0m0-58h0m0 32h0m0 29h0m0-32h0m0 18h0m0-15h0m1 3h0m0 4h0m0-13h0m0 10h0m0-23h0m0 9h0m0 25h0m1-7h0m0-8h0m0 4h0m0-25h0m0 29h0m0 8h0m1 14h0m0-29h0m0-7h0m0 19h0m0-43h0m0 27h0m0 3h0m1 0h0m0-1h0m0 22h0m0-53h0m0 30h0m0-18h0m0 9h0m1 28h0m0-19h0m0-8h0m0 4h0m0-6h0m0 36h0m0-18h0m1-37h0m0 20h0m0 33h0m0-12h0m0-10h0m0 21h0m1-9h0m0-23h0m0-1h0m0 8h0m0 0h0m0 9h0m0 6h0m1-4h0m0-28h0m0 26h0m0 11h0m0-1h0m0-10h0m0-1h0m1-17h0m0 44h0m0-19h0m0-7h0m0 18h0m0-21h0m1-14h0m0 1h0m0-3h0m0 20h0m0 5h0m0-25h0m0 16h0m1 4h0m0 0h0m0-11h0m0 13h0m0-8h0m0 60h0m0-74h0m1 23h0m0-21h0m0 15h0m0 5h0m0 14h0m0-31h0m0-20h0m1 19h0m0 30h0m0-42h0m0-2h0m0 12h0m0-18h0m1 35h0m0 20h0m0-8h0m0-10h0m0-44h0m0 41h0m0-5h0m1 7h0m0-6h0m0-15h0m0-15h0m0 41h0m0-10h0m0-11h0m1-33h0m0 35h0m0-1h0m0 16h0m0-27h0m0-8h0m0 47h0m1-16h0m0-13h0m0 7h0m0 27h0m0-33h0m0 18h0m1-11h0m0-16h0m0-8h0m0 0h0m0 25h0m0 24h0m0-29h0m1-26h0m0 13h0m0 21h0m0-60h0m0 21h0m0 41h0m0-9h0m1-7h0m0 1h0m0 6h0m0 35h0m0-26h0m0-4h0m1-37h0m0-18h0m0 33h0m0 29h0m0-8h0m0-13h0m0-10h0m1 16h0m0-7h0m0 17h0m0 12h0m0-40h0m0-5h0m0 3h0m1 18h0m0 23h0m0-14h0m0 8h0m0-14h0m0 16h0m0-15h0m1-7h0m0-12h0m0 24h0m0-34h0m0 48h0m0 23h0m1-65h0m0 48h0m0-18h0m0-6h0m0-16h0m0 7h0m0 28h0m1-7h0m0-4h0m0-20h0m0 6h0m0-5h0m0 30h0m0-9h0m1 34h0m0-53h0m0 20h0m0 10h0m0-1h0m0-18h0m1 29h0m0-16h0m0-10h0m0 22h0m0-27h0m0 19h0m0-28h0m1 45h0m0-47h0m0 39h0m0-24h0m0 6h0m0 1h0m0-9h0m1 3h0m0 43h0m0-52h0m0 26h0m0-29h0m0-14h0m0 32h0m1 2h0m0-14h0m0-5h0m0-4h0m0 43h0m0 3h0m1-53h0m0 12h0m0 6h0m0 7h0m0-15h0m0-10h0m0 47h0m1-15h0m0 23h0m0-63h0m0 30h0m0 13h0m0-29h0m0 38h0m1-24h0m0-25h0m0 9h0m0 22h0m0-25h0m0 3h0m1-5h0m0 22h0m0-2h0m0-26h0m0 53h0m0-11h0m0 0h0m1 2h0m0-28h0m0 10h0m0-13h0m0 24h0m0 3h0m0 15h0m1 2h0m0-9h0m0-57h0m0 24h0m0 25h0m0-21h0m0 1h0m1 8h0m0 0h0m0-16h0m0-19h0m0 48h0m0 23h0m1-50h0m0 20h0m0-1h0m0-8h0m0-20h0m0 21h0m0 18h0m1-23h0m0 1h0m0 6h0m0-19h0m0 17h0m0-17h0m0 16h0m1-4h0m0-22h0m0-20h0m0 63h0m0-7h0m0-32h0m1 44h0m0-11h0m0-1h0m0 26h0m0-13h0m0-5h0m0-24h0m1 5h0m0 10h0m0-4h0m0-11h0m0 11h0m0 18h0m0-43h0m1-15h0m0 47h0m0 20h0m0-62h0m0 30h0m0-5h0m0 1h0m1 8h0m0 7h0m0-1h0m0-11h0m0 10h0m0 42h0m1-46h0m0-22h0m0 39h0m0-53h0m0 71h0m0-2h0m0-42h0m1 9h0m0-27h0m0 6h0m0 81h0m0-55h0m0-8h0m0-20h0m1 15h0m0 8h0m0-41h0m0 38h0m0-15h0m0 40h0m1-33h0m0 3h0m0 17h0m0-7h0m0-9h0m0-18h0m0 49h0m1-24h0m0 42h0m0-39h0m0-19h0m0 30h0m0-15h0m0-2h0m1-12h0m0 4h0m0 51h0m0-37h0m0 35h0m0-39h0m0-25h0m1 45h0m0-8h0m0-49h0m0 30h0m0 12h0m0-21h0m1 48h0m0-33h0m0 9h0m0-41h0m0 16h0m0 36h0m0-26h0m1 17h0m0-29h0m0 19h0m0 6h0m0 9h0m0-40h0m0 4h0m1 7h0m0 47h0m0-20h0m0 14h0m0-22h0m0-9h0m1 9h0m0-17h0m0 17h0m0 16h0m0 13h0m0-19h0m0-12h0m1 8h0m0-21h0m0 1h0m0 32h0m0-12h0m0-6h0m0-16h0m1-9h0m0 23h0m0-12h0m0-9h0m0 32h0m0-6h0m0 2h0m1-16h0m0-23h0m0 24h0m0-17h0m0 34h0m0-36h0m1 18h0m0-29h0m0 7h0m0 46h0m0-9h0m0 1h0m0-2h0m1-31h0m0 44h0m0-4h0m0-6h0m0-38h0m0 40h0m0-30h0m1 21h0m0-9h0m0-14h0m0 9h0m0-9h0m0 8h0m0-13h0m1 33h0m0 8h0m0-11h0m0-16h0m0 62h0m0-117h0m1 74h0m0 0h0m0-64h0m0 81h0m0-9h0m0-49h0m0 43h0m1-14h0m0-8h0m0-2h0m0 2h0m0 3h0m0 21h0m0-35h0m1 22h0m0-19h0m0 19h0m0-16h0m0-6h0m0 16h0m1 14h0m0 11h0m0-29h0m0-9h0m0-9h0m0 9h0m0 28h0m1-15h0m0-29h0m0 54h0m0-29h0m0-19h0m0 28h0m0 18h0m1 22h0m0-27h0m0-8h0m0 10h0m0-37h0m0 58h0m0-15h0m1-29h0m0 7h0m0-9h0m0 1h0m0 7h0m0-26h0m1 6h0m0 18h0m0-59h0m0 67h0m0-12h0m0-1h0m0 28h0m1-1h0m0-22h0m0 11h0m0 18h0m0-46h0m0 16h0m0 1h0m1 22h0m0-30h0m0-6h0m0 37h0m0-10h0m0 8h0m1-42h0m0 68h0m0-36h0m0-5h0m0-34h0m0 63h0m0-13h0m1-34h0m0 3h0m0-27h0m0 44h0m0-31h0m0 8h0m0 14h0m1 50h0m0-49h0m0 7h0m0 27h0m0-44h0m0 24h0m0-13h0m1 5h0m0-21h0m0-13h0m0 14h0m0 8h0m0 4h0m1 29h0m0-9h0m0-14h0m0-1h0m0 27h0m0-53h0m0 9h0m1 21h0m0-21h0m0 13h0m0-36h0m0 21h0m0 4h0m0 4h0m1-7h0m0 15h0m0-28h0m0-20h0m0 74h0m0-33h0m1 2h0m0 29h0m0 3h0m0-21h0m0-24h0m0 9h0m0 53h0m1-52h0m0 16h0m0 7h0m0-14h0m0 23h0m0-1h0m0-17h0m1 30h0m0-30h0m0-9h0m0 1h0m0-20h0m0 44h0m0-14h0m1-2h0m0 11h0m0-26h0m0 2h0m0 16h0m0-8h0m1-5h0m0 8h0m0-10h0m0-1h0m0 14h0m0 17h0m0-8h0m1-14h0m0 0h0m0 21h0m0 3h0m0-31h0m0-12h0m0 12h0m1 9h0m0-13h0m0 44h0m0-35h0m0 16h0m0-40h0m1 45h0m0-3h0m0-45h0m0 19h0m0 22h0m0-10h0m0 5h0m1-9h0m0 20h0m0-28h0m0 49h0m0-16h0m0-60h0m0 37h0m1 30h0m0-29h0m0-1h0m0 4h0m0-20h0m0-31h0m0 58h0m1-36h0m0 29h0m0-6h0m0 28h0m0-13h0m0 14h0m1-16h0m0-26h0m0 20h0m0 8h0m0-23h0m0-5h0m0-5h0m1 10h0m0 15h0m0-6h0m0 10h0m0 23h0m0-35h0m0 12h0m1-1h0m0-3h0m0 58h0m0-72h0m0 34h0m0-32h0m1 18h0m0-17h0m0 69h0m0-73h0m0-25h0m0 36h0m0-10h0m1 25h0m0-7h0m0-12h0m0-14h0m0 36h0m0-14h0m0-37h0m1 60h0m0-30h0m0-1h0m0-24h0m0 32h0m0 12h0m0-37h0m1-2h0m0 16h0m0 54h0m0-41h0m0-8h0m0 13h0m1-26h0m0 11h0m0 9h0m0-32h0m0 42h0m0-17h0m0-22h0m1 22h0m0 17h0m0-5h0m0-12h0m0-22h0m0-14h0m0 29h0m1 9h0m0 11h0m0-10h0m0 1h0m0-27h0m0 13h0m1 19h0m0-11h0m0-2h0m0-3h0m0 16h0m0-32h0m0 66h0m1-55h0m0 4h0m0 9h0m0-9h0m0 0h0m0 10h0m0-5h0m1-32h0m0-9h0m0 33h0m0 38h0m0-17h0m0-14h0m0 4h0m1-13h0m0 20h0m0-20h0m0-14h0m0 40h0m0 19h0m1-36h0m0-34h0m0 53h0m0 24h0m0-24h0m0 1h0m0-14h0m1 26h0m0 6h0m0-43h0m0 8h0m0-8h0m0 7h0m0 2h0m1 1h0m0 6h0m0-40h0m0 60h0m0-35h0m0 20h0m1-16h0m0-1h0m0 38h0m0-22h0m0 6h0m0-2h0m0 10h0m1-20h0m0 22h0m0-30h0m0-8h0m0 27h0m0-45h0m0 37h0m1-5h0m0-27h0m0 41h0m0-7h0m0 7h0m0-37h0m0 54h0m1-10h0m0-28h0m0 6h0m0 26h0m0-38h0m0 33h0m1-1h0m0-23h0m0-13h0m0 6h0m0 11h0m0-9h0m0 24h0m1 7h0m0-77h0m0 32h0m0 5h0m0-5h0m0 31h0m0-10h0m1-22h0m0 11h0m0-2h0m0 19h0m0 0h0m0-10h0m0-15h0m1 29h0m0-8h0m0 4h0m0-15h0m0 8h0m0 17h0m1-20h0m0 6h0m0-7h0m0 21h0m0 7h0m0-50h0m0 15h0m1 17h0m0 11h0m0-13h0m0 3h0m0 5h0m0 25h0m0-35h0m1 6h0m0-2h0m0 10h0m0-19h0m0 4h0m0 36h0m1-41h0m0 17h0m0 21h0m0-38h0m0 11h0m0-7h0m0 27h0m1-22h0m0 18h0m0-35h0m0 63h0m0-49h0m0-14h0m0 58h0m1-41h0m0-7h0m0 8h0m0-2h0m0 6h0m0-11h0m0 26h0m1-25h0m0 9h0m0-9h0m0 41h0m0-50h0m0 11h0m1-31h0m0 21h0m0 6h0m0 0h0m0 27h0m0-15h0m0 4h0m1-6h0m0 7h0m0-15h0m0-4h0m0-25h0m0 18h0m0 5h0m1-40h0m0 40h0m0 14h0m0 7h0m0 8h0m0-46h0m1 54h0m0-22h0m0-1h0m0-18h0m0 6h0m0-9h0m0 31h0m1-43h0m0 35h0m0-3h0m0-25h0m0 19h0m0-24h0m0 22h0m1-27h0m0 44h0m0-16h0m0 3h0m0 29h0m0-54h0m0 59h0m1-23h0m0 11h0m0-4h0m0-25h0m0 21h0m0-25h0m1 18h0m0 24h0m0-24h0m0-29h0m0 44h0m0-22h0m0 18h0m1 29h0m0-44h0m0-23h0m0-15h0m0 35h0m0 29h0m0-39h0m1 24h0m0 0h0m0-19h0m0-7h0m0 11h0m0-4h0m1 43h0m0-19h0m0-13h0m0-13h0m0 28h0m0-24h0m0 8h0m1-8h0m0 16h0m0 25h0m0-24h0m0-33h0m0-25h0m0 40h0m1 26h0m0-8h0m0-15h0m0 12h0m0 10h0m0-4h0m0-13h0m1 0h0m0-16h0m0 38h0m0-19h0m0-23h0m0 12h0m1-18h0m0 44h0m0-26h0m0 26h0m0-39h0m0 2h0m0 19h0m1-19h0m0-26h0m0 52h0m0-7h0m0 25h0m0-40h0m0 1h0m1 25h0m0 23h0m0-42h0m0 36h0m0 5h0m0-30h0m1 5h0m0-32h0m0 58h0m0-15h0m0-10h0m0-3h0m0-25h0m1 14h0m0-14h0m0 48h0m0-2h0m0-32h0m0-3h0m0 19h0m1-11h0m0-7h0m0 10h0m0-2h0m0-29h0m0-8h0m0 27h0m1 21h0m0-6h0m0 11h0m0-40h0m0 26h0m0-7h0m1 5h0m0 25h0m0-2h0m0-30h0m0-6h0m0-28h0m0 65h0m1-14h0m0-11h0m0-29h0m0 17h0m0 7h0m0 42h0m0-35h0m1 15h0m0-30h0m0 0h0m0 28h0m0-16h0m0-25h0m1 37h0m0-37h0m0 1h0m0 33h0m0-13h0m0 7h0m0-14h0m1 12h0m0-6h0m0-21h0m0 46h0m0 20h0m0-59h0m0 36h0m1-2h0m0-14h0m0 30h0m0-15h0m0-23h0m0 7h0m0 28h0m1-31h0m0-24h0m0 31h0m0-10h0m0 9h0m0 14h0m1-1h0m0-24h0m0 3h0m0-12h0m0 34h0m0-20h0m0-4h0m1-6h0m0 41h0m0-20h0m0 5h0m0 2h0m0 8h0m0-45h0m1 28h0m0-13h0m0-28h0m0-7h0m0 41h0m0-26h0m1 9h0m0 37h0m0-14h0m0 5h0m0-19h0m0 38h0m0-8h0m1 5h0m0-40h0m0 42h0m0-13h0m0-7h0m0-8h0m0-20h0m1 44h0m0-48h0m0 50h0m0-32h0m0-15h0m0 3h0m0 28h0m1-37h0m0-4h0m0 29h0m0 5h0m0 57h0m0-52h0m1 15h0m0-10h0m0 36h0m0-40h0m0-20h0m0 20h0m0 0h0m1-7h0m0 10h0m0-9h0m0-18h0m0 31h0m0 6h0m0 8h0m1-43h0m0 32h0m0 6h0m0-36h0m0-3h0m0 22h0m1-31h0m0 12h0m0 10h0m0-1h0m0-12h0m0 36h0m0-10h0m1-21h0m0 22h0m0-18h0m0 8h0m0 4h0m0-36h0m0 38h0m1-5h0m0-18h0m0 20h0m0 19h0m0-9h0m0-37h0m0 17h0m1 32h0m0-5h0m0-30h0m0 15h0m0-6h0m0 6h0m1-51h0m0 48h0m0 28h0m0-40h0m0-17h0m0-36h0m0 67h0m1 5h0m0-17h0m0-13h0m0 10h0m0 28h0m0-39h0m0 22h0m1-23h0m0 34h0m0-24h0m0 45h0m0-16h0m0-41h0m0 26h0m1 14h0m0 3h0m0-10h0m0-22h0m0 50h0m0-49h0m1 16h0m0-8h0m0 6h0m0 18h0m0-1h0m0-25h0m0 7h0m1-6h0m0 12h0m0-3h0m0-24h0m0 22h0m0 4h0m0 14h0m1-46h0m0 26h0m0-35h0m0 28h0m0-8h0m0 34h0m1-42h0m0 27h0m0 36h0m0-27h0m0-9h0m0-42h0m0 60h0m1-31h0m0-1h0m0-20h0m0 15h0m0 18h0m0-4h0m0 22h0m1-23h0m0 13h0m0-25h0m0-18h0m0 26h0m0 19h0m0-7h0m1-26h0m0 20h0m0 3h0m0-4h0m0-25h0m0 33h0m1-3h0m0-32h0m0 61h0m0-54h0m0 23h0m0-2h0m0-4h0m1-2h0m0 4h0m0-39h0m0 71h0m0-2h0m0-19h0m0 11h0m1-19h0m0 4h0m0 15h0m0-30h0m0-22h0m0 45h0m1 27h0m0-54h0m0 21h0m0-13h0m0-6h0m0 25h0m0-28h0m1 19h0m0 12h0m0-30h0m0 16h0m0-67h0m0 51h0m0 0h0m1 13h0m0-1h0m0 9h0m0-2h0m0 8h0m0-31h0m0 7h0m1-20h0m0 22h0m0 14h0m0 3h0m0 4h0m0 0h0m1-60h0m0 76h0m0-13h0m0 7h0m0-36h0m0 8h0m0 6h0m1-17h0m0 20h0m0-13h0m0-20h0m0 8h0m0 1h0m0 9h0m1-3h0m0-16h0m0 31h0m0-10h0m0 4h0m0 10h0m1-12h0m0 6h0m0 14h0m0-9h0m0 3h0m0-18h0m0-12h0m1 26h0m0-38h0m0 34h0m0-22h0m0 9h0m0 22h0m0-11h0m1 23h0m0-32h0m0-21h0m0 24h0m0-24h0m0-25h0m0 21h0m1 30h0m0 7h0m0 50h0m0-84h0m0 27h0m0-26h0m1 28h0m0 19h0m0-17h0m0 25h0m0-13h0m0-34h0m0 21h0m1-3h0m0 2h0m0 11h0m0-15h0m0-12h0m0 20h0m0 16h0m1-15h0m0-44h0m0 21h0m0 29h0m0 5h0m0 6h0m1-22h0m0 7h0m0-2h0m0-21h0m0 27h0m0 4h0m0-42h0m1 55h0m0-55h0m0 25h0m0-6h0m0-2h0m0 56h0m0-64h0m1 6h0m0 4h0m0-10h0m0 0h0m0 39h0m0 6h0m0-36h0m1 17h0m0-43h0m0 24h0m0 35h0m0-30h0m0-4h0m1 13h0m0 5h0m0 16h0m0-42h0m0 40h0m0-5h0m0-45h0m1 24h0m0 9h0m0 6h0m0-31h0m0-11h0m0 19h0m0 18h0m1-48h0m0 39h0m0-15h0m0 31h0m0-28h0m0-4h0m1 44h0m0-21h0m0 3h0m0-10h0m0-10h0m0 16h0m0 0h0m1-9h0m0 64h0m0-22h0m0-41h0m0 8h0m0 3h0m0-4h0m1-43h0m0 52h0m0-34h0m0 53h0m0-19h0m0-34h0m0 20h0m1 13h0m0 0h0m0-19h0m0 14h0m0-36h0m0 9h0m1 4h0m0 4h0m0-5h0m0 45h0m0-10h0m0-23h0m0 45h0m1-10h0m0-38h0m0 12h0m0 8h0m0-29h0m0-4h0m0 29h0m1-28h0m0 44h0m0-23h0m0-7h0m0 22h0m0-6h0m1-19h0m0-32h0m0 9h0m0-6h0m0 39h0m0-9h0m0-4h0m1 4h0m0-16h0m0 15h0m0-10h0m0 23h0m0-24h0m0 10h0m1 7h0m0-18h0m0 3h0m0 28h0m0-40h0m0 5h0m0 24h0m1-24h0m0 25h0m0-24h0m0 49h0m0 13h0m0-42h0m1-13h0m0 24h0m0-1h0m0-26h0m0 12h0m0-8h0m0 14h0m1 0h0m0 11h0m0-17h0m0 19h0m0-5h0m0 9h0m0-22h0m1 33h0m0 3h0m0-26h0m0-44h0m0 62h0m0-32h0m1-26h0m0 44h0m0-22h0m0 34h0m0 12h0m0-70h0m0 48h0m1-20h0m0-23h0m0 23h0m0 6h0m0-5h0m0 16h0m0-24h0m1-15h0m0 46h0m0-24h0m0-39h0m0 49h0m0-18h0m0-1h0m1-32h0m0 6h0m0 46h0m0-7h0m0 12h0m0-2h0m1-9h0m0-1h0m0-14h0m0-13h0m0 22h0m0 10h0m0-19h0m1 33h0m0 20h0m0-35h0m0 4h0m0 7h0m0-3h0m0-23h0m1 20h0m0-24h0m0 33h0m0-1h0m0 23h0m0-46h0m0 29h0m1 0h0m0-28h0m0-9h0m0-1h0m0 25h0m0 10h0m1 2h0m0 4h0m0-26h0m0-24h0m0 31h0m0 13h0m0-30h0m1 27h0m0 6h0m0-19h0m0-1h0m0 2h0m0 18h0m0-21h0m1 23h0m0 6h0m0-33h0m0 20h0m0-18h0m0-15h0m1 11h0m0-25h0m0 44h0m0-7h0m0 0h0m0-12h0m0-5h0m1 24h0m0 9h0m0 9h0m0 3h0m0-42h0m0 29h0m0-33h0m1 20h0m0-36h0m0 18h0m0 1h0m0-4h0m0 18h0m0-18h0m1 5h0m0 25h0m0-11h0m0 48h0m0-41h0m0-29h0m1 45h0m0 22h0m0-34h0m0 18h0m0-27h0m0-10h0m0-1h0m1 29h0m0 17h0m0-52h0m0 1h0m0-36h0m0 41h0m0 4h0m1-8h0m0 37h0m0-8h0m0-36h0m0 16h0m0 15h0m1-17h0m0 2h0m0 18h0m0-16h0m0 8h0m0-18h0m0 30h0m1-22h0m0-9h0m0 8h0m0 13h0m0 50h0m0-46h0m0-1h0m1 11h0m0 12h0m0-29h0m0 6h0m0-31h0m0 22h0m0 18h0m1-22h0m0-13h0m0 15h0m0-7h0m0 20h0m0-8h0m1-16h0m0-6h0m0 10h0m0 25h0m0-36h0m0-2h0m0 39h0m1 0h0m0-31h0m0-4h0m0 0h0m0 20h0m0 10h0m0-6h0m1 11h0m0-25h0m0 17h0m0-13h0m0 1h0m0 4h0m1 24h0m0-16h0m0-30h0m0 42h0m0-27h0m0 58h0m0-44h0m1-19h0m0 29h0m0-26h0m0 22h0m0-28h0m0-4h0m0 9h0m1-27h0m0 29h0m0 12h0m0-7h0m0 0h0m0-36h0m0 59h0m1 1h0m0-24h0m0-11h0m0 25h0m0 0h0m0-8h0m1-10h0m0 5h0m0 2h0m0 19h0m0-23h0m0-24h0m0 44h0m1-25h0m0 0h0m0 41h0m0-48h0m0 30h0m0 16h0m0-21h0m1-6h0m0-15h0m0-7h0m0 14h0m0-1h0m0 5h0m1-24h0m0 14h0m0 41h0m0-60h0m0 39h0m0-21h0m0 23h0m1-10h0m0 3h0m0 15h0m0-29h0m0 16h0m0-9h0m0-26h0m1 21h0m0 38h0m0-14h0m0-9h0m0-15h0m0-10h0m0 27h0m1-6h0m0-8h0m0-6h0m0 25h0m0-36h0m0 35h0m1-24h0m0 19h0m0-11h0m0-9h0m0 1h0m0 10h0m0 41h0m1-55h0m0 5h0m0 40h0m0-51h0m0 23h0m0 23h0m0-4h0m1-34h0m0 4h0m0-8h0m0 27h0m0 2h0m0-40h0m1 20h0m0-19h0m0 32h0m0 15h0m0 1h0m0-33h0m0-1h0m1-6h0m0 7h0m0-4h0m0-29h0m0 33h0m0-6h0m0 13h0m1 11h0m0 8h0m0 5h0m0-59h0m0 34h0m0 18h0m0-2h0m1-1h0m0-3h0m0-40h0m0 29h0m0-11h0m0 24h0m1 27h0m0-33h0m0 0h0m0-6h0m0 17h0m0-7h0m0 3h0m1-6h0m0-20h0m0 31h0m0-14h0m0-4h0m0 5h0m0-36h0m1 48h0m0-48h0m0 44h0m0 14h0m0-25h0m0 5h0m1 36h0m0-71h0m0 11h0m0 13h0m0 38h0m0-34h0m0 19h0m1-52h0m0 33h0m0 16h0m0 10h0m0-40h0m0 31h0m0-3h0m1-14h0m0 8h0m0 5h0m0-30h0m0 28h0m0-26h0m0 21h0m1-32h0m0-8h0m0 29h0m0 14h0m0 16h0m0-18h0m1 19h0m0-14h0m0 0h0m0-13h0m0-9h0m0 4h0m0 0h0m1 11h0m0-1h0m0 17h0m0-26h0m0 15h0m0-13h0m0 3h0m1 27h0m0-17h0m0-40h0m0 1h0m0 32h0m0 7h0m1-12h0m0-9h0m0-47h0m0 59h0m0 64h0m0-62h0m0-8h0m1 3h0m0-5h0m0 6h0m0 20h0m0 5h0m0-26h0m0 26h0m1-25h0m0 8h0m0-9h0m0 8h0m0 10h0m0-3h0m0 41h0m1-40h0m0 5h0m0-22h0m0 7h0m0-5h0m0 14h0m1-11h0m0 0h0m0-11h0m0 29h0m0-13h0m0-29h0m0 25h0m1 3h0m0-8h0m0 24h0m0-26h0m0-4h0m0 25h0m0-46h0m1 14h0m0 28h0m0 14h0m0-9h0m0 1h0m0-11h0m0-14h0m1-7h0m0 36h0m0-10h0m0 16h0m0-2h0m0-78h0m1 57h0m0-26h0m0 63h0m0-58h0m0 26h0m0 4h0m0-26h0m1 3h0m0 21h0m0-53h0m0 60h0m0 4h0m0-2h0m0-24h0m1-11h0m0-16h0m0 40h0m0-31h0m0 13h0m0-13h0m1 42h0m0 5h0m0-16h0m0-15h0m0-5h0m0 48h0m0-22h0m1-39h0m0 30h0m0-21h0m0 11h0m0 18h0m0-1h0m0-18h0m1 30h0m0-41h0m0-16h0m0 41h0m0-12h0m0 11h0m0-4h0m1-7h0m0 1h0m0 2h0m0-4h0m0 62h0m0-93h0m1 23h0m0 2h0m0 0h0m0 20h0m0-12h0m0 39h0m0-41h0m1 13h0m0-15h0m0 10h0m0-7h0m0 3h0m0-10h0m0-1h0m1 16h0m0-22h0m0 9h0m0-16h0m0 43h0m0-30h0m1 18h0m0-33h0m0 23h0m0-17h0m0 15h0m0 8h0m0-27h0m1 21h0m0 30h0m0-22h0m0-10h0m0 4h0m0 6h0m0 12h0m1-8h0m0 11h0m0-12h0m0-24h0m0 24h0m0-33h0m0 46h0m1-7h0m0-8h0m0-22h0m0 28h0m0 18h0m0-51h0m1 20h0m0 26h0m0-20h0m0 14h0m0-24h0m0 5h0m0 15h0m1-26h0m0-23h0m0 27h0m0 16h0m0-72h0m0 87h0m0-30h0m1-28h0m0 39h0m0 3h0m0-31h0m0 43h0m0-3h0m1 10h0m0-51h0m0 0h0m0 10h0m0 22h0m0-4h0m0 51h0m1-66h0m0 17h0m0-15h0m0 1h0m0 26h0m0-14h0m0-39h0m1 47h0m0-16h0m0 17h0m0-11h0m0-4h0m0 13h0m0-23h0m1 8h0m0-36h0m0 67h0m0-23h0m0 0h0m0-6h0m1-16h0m0 34h0m0-28h0m0 19h0m0-31h0m0 3h0m0-25h0m1 58h0m0-11h0m0 32h0m0-36h0m0 37h0m0-28h0m0-26h0m1 36h0m0-49h0m0 43h0m0-3h0m0-11h0m0-5h0m1 20h0m0-2h0m0-23h0m0 60h0m0-56h0m0-44h0m0 44h0m1-13h0m0 16h0m0 22h0m0-35h0m0 26h0m0-11h0m0 10h0m1-14h0m0 15h0m0 20h0m0-52h0m0-9h0m0 35h0m0 29h0m1-44h0m0 41h0m0-15h0m0 14h0m0-18h0m0-8h0m1-3h0m0-18h0m0 37h0m0-17h0m0 19h0m0-26h0m0-20h0m1 28h0m0 27h0m0-25h0m0-3h0m0-9h0m0 16h0m0-4h0m1 5h0m0 1h0m0-4h0m0 19h0m0-12h0m0-10h0m1-5h0m0-38h0m0 21h0m0 12h0m0-18h0m0 26h0m0 10h0m1-5h0m0-8h0m0 22h0m0 3h0m0-33h0m0-42h0m0 56h0m1 25h0m0-16h0m0 44h0m0-58h0m0-9h0m0-8h0m0 24h0m1 1h0m0 14h0m0-22h0m0-7h0m0 5h0m0 38h0m1-37h0m0 13h0m0-7h0m0-11h0m0-17h0m0 67h0m0-33h0m1 25h0m0-27h0m0 14h0m0 14h0m0-53h0m0 35h0m0-35h0m1 40h0m0-3h0m0-35h0m0 36h0m0-37h0m0 40h0m1 2h0m0-16h0m0 6h0m0 6h0m0-20h0m0 27h0m0-33h0m1-1h0m0 55h0m0-50h0m0 4h0m0-29h0m0 21h0m0 1h0m1-13h0m0 37h0m0 6h0m0 4h0m0-25h0m0-3h0m0 21h0m1-53h0m0-17h0m0 67h0m0-23h0m0 5h0m0-47h0m1 61h0m0-12h0m0-1h0m0 9h0m0-18h0m0 0h0m0 1h0m1 19h0m0 2h0m0-42h0m0 19h0m0 27h0m0-31h0m0 36h0m1-2h0m0-9h0m0-14h0m0 19h0m0-13h0m0 14h0m1-39h0m0 15h0m0 22h0m0-9h0m0-6h0m0 16h0m0-17h0m1-18h0m0 83h0m0-46h0m0-3h0m0-21h0m0-1h0m0 22h0m1-10h0m0 16h0m0-28h0m0-5h0m0 15h0m0-11h0m0 65h0m1-45h0m0-29h0m0 28h0m0-21h0m0 9h0m0 3h0m1 62h0m0-89h0m0 31h0m0-24h0m0 38h0m0-36h0m0 13h0m1-15h0m0 10h0m0 10h0m0 0h0m0-13h0m0-9h0m0 13h0m1 12h0m0-8h0m0-10h0m0 10h0m0-2h0m0 10h0m0-16h0m1 6h0m0-2h0m0 18h0m0 14h0m0-10h0m0 9h0m1-34h0m0-1h0m0 16h0m0 9h0m0-2h0m0 10h0m0-2h0m1 21h0m0-43h0m0 10h0m0 24h0m0-14h0m0-30h0m0-8h0m1 15h0m0 18h0m0-24h0m0 3h0m0-12h0m0-15h0m1 49h0m0-6h0m0 39h0m0-42h0m0 7h0m0 3h0m0-7h0m1 19h0m0-37h0m0 11h0m0-15h0m0 7h0m0 7h0m0 6h0m1-14h0m0-24h0m0 44h0m0-7h0m0-15h0m0-13h0m0 45h0m1 6h0m0-29h0m0 20h0m0-13h0m0-28h0m0 14h0m1 2h0m0 21h0m0-58h0m0 77h0m0-36h0m0 36h0m0-32h0m1-10h0m0 36h0m0-46h0m0 2h0m0-4h0m0 36h0m0-3h0m1-10h0m0-17h0m0 1h0m0 18h0m0-11h0m0 11h0m1 23h0m0-32h0m0 13h0m0-33h0m0 35h0m0-7h0m0 10h0m1-16h0m0-23h0m0 15h0m0 20h0m0-28h0m0 23h0m0-21h0m1 16h0m0-3h0m0 2h0m0 17h0m0-15h0m0-23h0m0 31h0m1-20h0m0-14h0m0 26h0m0-21h0m0 40h0m0-38h0m1-2h0m0-1h0m0 33h0m0-61h0m0 19h0m0 31h0m0 18h0m1-15h0m0 10h0m0-12h0m0 13h0m0-29h0m0-13h0m0 42h0m1-25h0m0 13h0m0-11h0m0-4h0m0 13h0m0 6h0m1-7h0m0-5h0m0-1h0m0-17h0m0 31h0m0-13h0m0 35h0m1-37h0m0 20h0m0 1h0m0-3h0m0 54h0m0-48h0m0-12h0m1 15h0m0 2h0m0-4h0m0-25h0m0 18h0m0 7h0m0-5h0m1-11h0m0-5h0m0-9h0m0 42h0m0-50h0m0 36h0m1 20h0m0-50h0m0 35h0m0-24h0m0 28h0m0-24h0m0 0h0m1-15h0m0 31h0m0-20h0m0 68h0m0-50h0m0 5h0m0-19h0m1-7h0m0 4h0m0-4h0m0 10h0m0 2h0m0-4h0m1 0h0m0 0h0m0 13h0m0 10h0m0-13h0m0 16h0m0-47h0m1 40h0m0-9h0m0-17h0m0 2h0m0 6h0m0-19h0m0 32h0m1-56h0m0 54h0m0-21h0m0 24h0m0-3h0m0 15h0m0-40h0m1 56h0m0-17h0m0-47h0m0 37h0m0-8h0m0 6h0m1 15h0m0-63h0m0 50h0m0 0h0m0-31h0m0 21h0m0 13h0m1-32h0m0-24h0m0 24h0m0 29h0m0-1h0m0-1h0m0 6h0m1-4h0m0-7h0m0-4h0m0-5h0m0-26h0m0 51h0m1-27h0m0 2h0m0 6h0m0-31h0m0 19h0m0-12h0m0-8h0m1 47h0m0 9h0m0-35h0m0-32h0m0 64h0m0-6h0m0-7h0m1-1h0m0-10h0m0-28h0m0 1h0m0 43h0m0 6h0m0-25h0m1 17h0m0 4h0m0-16h0m0-10h0m0-21h0m0-37h0m1 72h0m0-18h0m0-6h0m0 12h0m0 9h0m0-8h0m0 8h0m1-7h0m0 2h0m0-3h0m0-58h0m0 50h0m0 16h0m0 5h0m1-16h0m0-14h0m0 16h0m0-22h0m0 8h0m0 39h0m1-21h0m0 11h0m0 26h0m0-41h0m0-11h0m0-14h0m0 39h0m1 2h0m0-8h0m0 31h0m0-12h0m0-31h0m0 16h0m0-19h0m1 10h0m0-3h0m0-12h0m0 51h0m0-43h0m0 16h0m0-9h0m1-3h0m0 6h0m0-28h0m0 15h0m0 22h0m0-11h0m1-10h0m0 3h0m0 2h0m0 14h0m0 5h0m0-16h0m0-4h0m1 3h0m0 3h0m0-6h0m0 11h0m0-29h0m0 74h0m0-80h0m1 34h0m0-13h0m0 8h0m0-18h0m0 28h0m0 0h0m0-41h0m1 6h0m0 11h0m0 12h0m0 18h0m0-33h0m0 19h0m1-12h0m0 37h0m0-25h0m0-25h0m0 1h0m0 13h0m0-10h0m1 26h0m0-40h0m0 34h0m0 7h0m0-5h0m0 9h0m0-30h0m1 31h0m0-27h0m0-6h0m0 14h0m0 0h0m0-6h0m1-15h0m0 12h0m0-20h0m0 26h0m0 6h0m0-25h0m0 23h0m1 3h0m0-19h0m0-1h0m0 47h0m0-1h0m0-42h0m0-2h0m1 35h0m0-38h0m0-1h0m0 5h0m0 8h0m0-9h0m0 24h0m1-13h0m0 26h0m0-14h0m0 1h0m0-15h0m0-3h0m1 2h0m0 31h0m0-47h0m0 16h0m0 2h0m0 2h0m0 2h0m1 7h0m0-6h0m0 7h0m0-28h0m0-2h0m0 15h0m0-27h0m1 44h0m0-48h0m0 49h0m0 1h0m0-10h0m0 13h0m1-5h0m0-13h0m0-14h0m0-43h0m0 26h0m0 50h0m0 7h0m1-19h0m0-13h0m0 9h0m0 21h0m0-29h0m0 26h0m0-21h0m1-29h0m0 46h0m0-25h0m0 0h0m0 61h0m0-35h0m0-2h0m1-12h0m0 7h0m0-2h0m0-11h0m0 23h0m0 4h0m1 4h0m0-54h0m0 24h0m0-7h0m0 18h0m0-5h0m0 3h0m1 4h0m0 4h0m0-31h0m0 15h0m0 6h0m0-6h0m0 5h0m1 0h0m0-21h0m0-15h0m0 48h0m0-38h0m0 48h0m1-23h0m0-9h0m0-4h0m0 33h0m0 13h0m0-30h0m0-2h0m1 14h0m0-17h0m0 12h0m0-12h0m0 18h0m0-5h0m0 5h0m1-31h0m0 19h0m0-9h0m0 21h0m0-21h0m0 13h0m0 15h0m1-15h0m0 26h0m0-43h0m0 40h0m0-37h0m0 22h0m1-42h0m0 38h0m0-39h0m0 9h0m0 11h0m0-17h0m0 34h0m1 0h0m0 5h0m0-17h0m0 16h0m0-45h0m0 14h0m0 18h0m1 8h0m0 8h0m0 6h0m0-5h0m0-31h0m0 20h0m1-11h0m0-24h0m0 0h0m0 10h0m0 29h0m0-15h0m0 6h0m1 7h0m0-14h0m0 2h0m0-12h0m0 12h0m0 7h0m0 0h0m1 6h0m0-52h0m0-6h0m0 33h0m0 35h0m0-14h0m0 3h0m1-18h0m0-3h0m0-4h0m0 39h0m0-31h0m0 21h0m1-2h0m0-20h0m0 28h0m0-4h0m0-18h0m0 21h0m0-9h0m1 7h0m0 3h0m0-25h0m0-2h0m0-3h0m0-8h0m0 15h0m1 4h0m0 22h0m0-21h0m0-8h0m0 43h0m0-47h0m1 0h0m0-11h0m0 30h0m0-21h0m0 40h0m0-61h0m0 38h0m1-24h0m0 30h0m0-13h0m0-31h0m0-5h0m0 50h0m0-31h0m1-13h0m0 19h0m0 20h0m0 6h0m0 31h0m0-68h0m0 46h0m1-6h0m0-16h0m0-18h0m0 26h0m0 6h0m0-1h0m1-17h0m0-8h0m0 53h0m0-42h0m0 5h0m0-20h0m0 33h0m1-16h0m0 3h0m0-8h0m0 12h0m0 4h0m0-17h0m0 2h0m1 14h0m0-3h0m0-5h0m0 34h0m0-34h0m0-26h0m1 46h0m0-19h0m0 48h0m0-60h0m0-15h0m0 33h0m0-38h0m1 19h0m0 13h0m0 6h0m0-3h0m0-8h0m0 16h0m0-11h0m1 1h0m0-19h0m0 12h0m0 1h0m0 0h0m0-19h0m0 10h0m1 17h0m0-2h0m0-11h0m0-34h0m0 22h0m0 73h0m1-45h0m0 16h0m0-28h0m0-39h0m0 71h0m0-29h0m0 15h0m1-43h0m0 35h0m0 3h0m0-37h0m0 32h0m0-22h0m0 16h0m1 29h0m0-35h0m0-7h0m0 33h0m0-29h0m0 15h0m1-35h0m0 40h0m0 9h0m0-56h0m0 41h0m0 3h0m0 10h0m1 4h0m0-10h0m0 28h0m0 3h0m0-73h0m0 65h0m0-67h0m1 46h0m0-24h0m0 37h0m0-31h0m0 46h0m0-34h0m0 4h0m1-10h0m0 0h0m0 15h0m0 18h0m0-34h0m0 13h0m1-6h0m0 9h0m0-4h0m0-23h0m0 3h0m0 24h0m0 6h0m1-43h0m0 26h0m0-43h0m0 27h0m0-12h0m0 41h0m0-22h0m1 12h0m0 24h0m0 0h0m0-32h0m0-13h0m0 48h0m0-31h0m1 7h0m0-3h0m0-10h0m0 0h0m0 4h0m0 21h0m1-10h0m0 12h0m0-1h0m0-25h0m0 4h0m0 43h0m0-46h0m1-25h0m0 21h0m0 12h0m0-25h0m0 0h0m0 37h0m0-75h0m1 22h0m0 62h0m0-9h0m0-29h0m0-20h0m0 4h0m1 34h0m0-7h0m0-3h0m0-21h0m0-21h0m0 47h0m0-9h0m1-11h0m0 28h0m0-18h0m0 3h0m0-21h0m0 39h0m0-11h0m1-15h0m0-1h0m0 19h0m0-5h0m0 17h0m0 31h0m0-76h0m1 30h0m0-8h0m0 41h0m0-24h0m0-3h0m0-6h0m1 3h0m0-7h0m0-6h0m0 8h0m0 8h0m0-26h0m0 26h0m1 9h0m0 6h0m0-13h0m0-16h0m0-14h0m0-7h0m0 52h0m1-20h0m0 0h0m0-30h0m0 18h0m0 7h0m0 27h0m1-21h0m0-9h0m0-27h0m0 45h0m0-46h0m0 26h0m0 20h0m1-14h0m0 17h0m0-37h0m0 15h0m0-3h0m0-11h0m0-20h0m1 22h0m0 5h0m0 21h0m0-24h0m0 14h0m0 26h0m0-15h0m1-14h0m0 12h0m0-30h0m0 12h0m0 10h0m0-3h0m1 5h0m0-3h0m0 31h0m0-11h0m0-47h0m0 28h0m0-7h0m1 37h0m0-28h0m0-14h0m0-7h0m0 11h0m0 6h0m0-11h0m1 20h0m0-21h0m0 16h0m0 43h0m0-37h0m0-16h0m1-12h0m0 3h0m0 6h0m0-25h0m0 19h0m0 17h0m0 8h0m1 1h0m0-24h0m0-15h0m0 23h0m0 8h0m0-17h0m0-6h0m1 13h0m0 36h0m0-11h0m0-24h0m0 21h0m0-27h0m0 9h0m1 5h0m0-18h0m0 27h0m0-29h0m0 18h0m0-8h0m1-3h0m0 11h0m0-20h0m0 34h0m0 10h0m0-11h0m0-34h0m1-22h0m0 27h0m0 36h0m0-4h0m0 6h0m0-50h0m0 54h0m1-56h0m0 26h0m0 9h0m0 7h0m0-15h0m0-16h0m1 18h0m0 16h0m0-65h0m0 40h0m0-2h0m0 21h0m0-29h0m1 13h0m0 20h0m0-32h0m0 62h0m0-72h0m0 78h0m0-58h0m1-8h0m0-6h0m0 25h0m0-19h0m0 6h0m0 42h0m0-40h0m1 2h0m0-46h0m0 50h0m0-2h0m0 28h0m0-17h0m1-43h0m0 56h0m0-21h0m0-9h0m0 3h0m0 65h0m0-54h0m1-20h0m0 34h0m0 6h0m0-63h0m0 25h0m0 31h0m0 11h0m1-60h0m0 37h0m0-11h0m0-43h0m0 48h0m0 10h0m1-24h0m0 25h0m0-54h0m0 53h0m0-5h0m0 0h0m0-10h0m1 10h0m0 6h0m0-14h0m0-23h0m0 47h0m0-18h0m0 4h0m1-23h0m0-5h0m0-6h0m0-10h0m0 51h0m0-9h0m0-18h0m1-3h0m0-12h0m0 0h0m0 35h0m0-25h0m0 5h0m1 27h0m0-68h0m0 66h0m0 1h0m0 3h0m0-14h0m0-23h0m1 37h0m0-22h0m0 31h0m0-6h0m0-30h0m0-3h0m0 8h0m1 18h0m0 8h0m0-70h0m0 55h0m0 6h0m0-20h0m1 17h0m0 29h0m0-82h0m0 41h0m0 8h0m0 34h0m0-67h0m1 20h0m0 12h0m0-39h0m0 68h0m0-14h0m0-17h0m0-17h0m1 10h0m0-7h0m0 3h0m0-11h0m0 2h0m0 35h0m0 14h0m1-40h0m0 33h0m0-28h0m0 14h0m0 7h0m0 10h0m1-7h0m0 1h0m0-51h0m0 35h0m0 5h0m0-9h0m0-2h0m1 7h0m0-16h0m0-4h0m0 38h0m0-24h0m0 28h0m0-18h0m1-10h0m0 15h0m0-29h0m0 47h0m0-34h0m0 7h0m1 26h0m0-5h0m0-25h0m0-3h0m0 6h0m0 19h0m0-10h0m1-21h0m0 50h0m0-33h0m0 41h0m0-34h0m0-2h0m0-26h0m1 43h0m0-23h0m0-15h0m0 4h0m0-3h0m0 5h0m0-11h0m1 6h0m0-1h0m0-9h0m0 28h0m0-1h0m0 23h0m1-31h0m0-13h0m0 2h0m0 22h0m0-39h0m0 23h0m0 48h0m1-4h0m0-30h0m0-5h0m0-2h0m0 21h0m0 4h0m0-25h0m1 45h0m0-40h0m0 5h0m0-14h0m0-14h0m0 28h0m0-14h0m1 43h0m0-21h0m0 5h0m0-27h0m0 13h0m0 24h0m1-18h0m0-10h0m0-8h0m0 23h0m0-33h0m0 24h0m0-15h0m1 13h0m0-3h0m0-35h0m0 42h0m0 9h0m0-29h0m0 6h0m1 1h0m0 54h0m0-46h0m0 7h0m0-4h0m0-26h0m1-3h0m0-6h0m0 41h0m0 3h0m0 10h0m0-39h0m0-7h0m1-2h0m0 7h0m0-3h0m0-20h0m0 31h0m0 18h0m0-38h0m1 43h0m0 24h0m0-46h0m0 22h0m0-13h0m0 21h0m0-33h0m1 19h0m0-10h0m0-7h0m0 26h0m0-38h0m0 27h0m1-14h0m0 0h0m0-17h0m0 19h0m0 27h0m0-28h0m0-12h0m1 11h0m0 19h0m0 8h0m0-27h0m0-19h0m0 12h0m0 18h0m1-15h0m0 0h0m0-12h0m0-11h0m0 49h0m0-9h0m1-8h0m0 13h0m0 2h0m0-25h0m0 2h0m0-11h0m0 7h0m1 23h0m0-13h0m0 48h0m0-38h0m0-11h0m0 19h0m0-14h0m1-14h0m0 23h0m0 6h0m0-2h0m0-30h0m0 10h0m0-10h0m1 19h0m0-8h0m0 28h0m0-16h0m0-43h0m0 36h0m1-27h0m0 50h0m0 3h0m0-24h0m0 8h0m0-25h0m0 53h0m1-31h0m0-24h0m0 8h0m0-5h0m0 3h0m0 10h0m0 50h0m1-26h0m0-26h0m0 10h0m0 11h0m0-9h0m0-12h0m1-13h0m0 10h0m0 53h0m0-51h0m0-26h0m0-25h0m0 85h0m1 16h0m0-24h0m0-16h0m0-46h0m0 34h0m0 3h0m0 2h0m1 2h0m0 0h0m0 0h0m0-13h0m0 3h0m0 16h0m0 21h0m1-40h0m0 0h0m0 20h0m0-15h0m0 11h0m0 22h0m1-44h0m0 31h0m0-8h0m0-1h0m0 1h0m0 9h0m0 12h0m1-34h0m0 9h0m0 4h0m0 3h0m0-29h0m0 27h0m0 32h0m1-37h0m0-8h0m0 5h0m0-20h0m0 17h0m0 32h0m1 0h0m0-6h0m0-27h0m0 27h0m0-17h0m0-15h0m0-6h0m1-1h0m0-14h0m0 25h0m0-9h0m0 21h0m0 4h0m0-21h0m1 15h0m0 8h0m0-50h0m0 37h0m0 3h0m0 5h0m0-18h0m1-33h0m0 28h0m0-18h0m0 29h0m0-4h0m0-3h0m1-12h0m0 32h0m0 2h0m0-16h0m0 4h0m0-15h0m0 13h0m1 40h0m0-63h0m0 22h0m0 36h0m0-36h0m0 4h0m0 14h0m1-22h0m0 11h0m0-4h0m0 20h0m0-51h0m0-11h0m1 39h0m0 27h0m0-6h0m0-10h0m0-5h0m0 3h0m0 4h0m1-1h0m0-13h0m0-2h0m0-3h0m0 23h0m0-29h0m0 37h0m1-28h0m0 24h0m0-12h0m0-13h0m0 11h0m0-7h0m0 19h0m1 9h0m0-22h0m0-20h0m0 34h0m0-3h0m0-8h0m1 8h0m0 21h0m0-38h0m0 13h0m0 11h0m0-26h0m0-25h0m1 42h0m0-4h0m0-22h0m0 9h0m0 10h0m0-7h0m0-22h0m1 8h0m0 9h0m0 34h0m0-26h0m0 12h0m0 5h0m1-40h0m0 19h0m0 15h0m0-27h0m0 46h0m0-58h0m0 26h0m1-10h0m0 8h0m0-20h0m0 16h0m0 6h0m0-19h0m0 47h0m1-35h0m0 22h0m0-29h0m0 34h0m0-57h0m0 73h0m0-42h0m1 22h0m0-37h0m0 4h0m0 6h0m0-10h0m0 9h0m1 42h0m0-13h0m0-12h0m0-17h0m0 20h0m0-10h0m0 12h0m1-34h0m0 21h0m0 12h0m0-34h0m0 29h0m0-16h0m0-27h0m1 16h0m0 31h0m0-35h0m0 24h0m0 0h0m0 6h0m1-16h0m0 6h0m0 3h0m0 24h0m0-2h0m0-35h0m0-3h0m1 12h0m0 15h0m0-13h0m0-10h0m0-28h0m0 47h0m0-17h0m1 37h0m0-11h0m0-19h0m0 15h0m0-27h0m0 22h0m0-5h0m1-10h0m0-25h0m0 45h0m0-4h0m0 25h0m0-20h0m1-19h0m0 4h0m0-15h0m0 26h0m0-23h0m0 49h0m0-8h0m1-48h0m0 54h0m0-31h0m0 3h0m0 11h0m0-30h0m0 9h0m1 11h0m0-25h0m0 16h0m0 1h0m0 8h0m0-16h0m0 18h0m1-28h0m0 10h0m0 14h0m0 37h0m0-20h0m0-19h0m1 25h0m0-55h0m0 19h0m0-13h0m0 33h0m0-69h0m0 87h0m1-26h0m0-9h0m0-9h0m0 31h0m0-38h0m0 38h0m0 3h0m1-4h0m0-18h0m0 14h0m0-19h0m0-2h0m0 9h0m1 16h0m0-73h0m0 45h0m0 22h0m0-17h0m0-19h0m0 58h0m1-61h0m0 35h0m0-6h0m0 29h0m0-24h0m0-3h0m0 13h0m1-19h0m0-12h0m0 11h0m0-1h0m0 10h0m0-38h0m0 28h0m1 34h0m0-25h0m0 29h0m0-52h0m0 7h0m0-8h0m1 26h0m0-9h0m0-17h0m0 33h0m0 14h0m0-29h0m0-7h0m1-5h0m0 28h0m0 9h0m0-25h0m0-5h0m0 9h0m0 8h0m1-12h0m0 16h0m0-23h0m0-1h0m0-1h0m0 8h0m1-12h0m0 29h0m0 4h0m0-48h0m0 29h0m0-7h0m0 24h0m1-6h0m0-29h0m0-8h0m0 6h0m0 5h0m0 18h0m0-20h0m1-32h0m0 39h0m0 16h0m0-2h0m0-23h0m0 16h0m0 16h0m1-16h0m0 11h0m0-5h0m0-26h0m0 26h0m0-20h0m1-8h0m0 15h0m0 28h0m0-27h0m0 13h0m0 2h0m0-3h0m1 10h0m0-25h0m0 17h0m0-11h0m0 29h0m0-89h0m0 50h0m1-7h0m0 29h0m0-4h0m0-6h0m0 3h0m0 2h0m1 4h0m0-7h0m0-12h0m0 25h0m0-14h0m0 5h0m0-7h0m1 12h0m0-25h0m0 32h0m0-9h0m0-15h0m0 4h0m0-12h0m1 22h0m0-2h0m0-19h0m0 65h0m0-33h0m0-10h0m0-48h0m1 16h0m0 9h0m0 41h0m0-46h0m0 18h0m0-13h0m1 34h0m0-31h0m0-3h0m0 4h0m0 24h0m0 11h0m0-60h0m1-4h0m0 49h0m0-35h0m0 25h0m0 6h0m0-22h0m0 17h0m1 10h0m0-43h0m0 34h0m0 16h0m0-21h0m0-21h0m1-5h0m0 6h0m0 9h0m0 11h0m0 14h0m0 21h0m0-36h0m1 12h0m0-4h0m0 10h0m0 10h0m0 0h0m0-12h0m0-30h0m1 24h0m0 25h0m0-38h0m0 11h0m0-15h0m0-6h0m0 11h0m1-3h0m0 9h0m0 5h0m0 12h0m0-39h0m0 11h0m1 36h0m0-32h0m0 5h0m0-3h0m0-4h0m0 45h0m0-33h0m1 7h0m0 21h0m0-38h0m0-3h0m0 5h0m0-19h0m0-9h0m1 44h0m0-7h0m0-5h0m0-23h0m0 44h0m0-18h0m1-24h0m0 36h0m0 0h0m0-26h0m0 36h0m0-14h0m0-29h0m1 50h0m0-13h0m0-19h0m0 13h0m0-60h0m0 44h0m0 13h0m1 15h0m0-38h0m0 32h0m0-16h0m0 4h0m0-13h0m0 19h0m1-15h0m0-3h0m0 1h0m0 4h0m0-9h0m0 10h0m1 2h0m0-12h0m0 9h0m0 27h0m0-46h0m0 9h0m0 7h0m1 33h0m0-42h0m0 4h0m0 25h0m0-14h0m0-2h0m0 12h0m1-19h0m0 31h0m0-8h0m0 2h0m0-17h0m0 8h0m1 0h0m0-12h0m0 27h0m0-42h0m0 32h0m0-13h0m0-2h0m1 15h0m0 8h0m0 8h0m0-28h0m0-9h0m0 1h0m0 20h0m1 3h0m0 8h0m0 4h0m0-11h0m0-24h0m0 11h0m0-37h0m1 46h0m0 14h0m0-21h0m0-18h0m0 2h0m0 3h0m1-9h0m0 21h0m0 0h0m0 8h0m0 19h0m0 32h0m0-54h0m1 10h0m0 6h0m0-31h0m0 17h0m0-44h0m0 46h0m0-4h0m1 19h0m0-33h0m0-4h0m0 23h0m0 2h0m0 2h0m1 3h0m0 15h0m0-14h0m0 14h0m0-21h0m0-1h0m0 18h0m1-49h0m0 17h0m0 7h0m0-5h0m0-11h0m0 23h0m0 10h0m1-53h0m0 47h0m0-28h0m0 39h0m0-24h0m0-13h0m0 37h0m1-15h0m0 21h0m0-30h0m0 16h0m0-58h0m0 27h0m1 24h0m0 7h0m0 27h0m0-9h0m0-25h0m0 8h0m0 15h0m1-41h0m0 41h0m0-18h0m0-7h0m0 10h0m0 6h0m0-17h0m1-1h0m0-3h0m0 1h0m0 11h0m0-34h0m0 17h0m0 26h0m1 5h0m0 30h0m0-46h0m0-22h0m0 21h0m0 6h0m1-6h0m0 13h0m0-9h0m0 15h0m0-11h0m0 9h0m0-64h0m1 40h0m0 0h0m0 13h0m0-13h0m0-3h0m0-5h0m0 8h0m1-17h0m0 12h0m0-2h0m0-30h0m0 18h0m0 32h0m1 18h0m0-15h0m0-27h0m0 14h0m0-6h0m0-24h0m0 14h0m1 0h0m0 10h0m0-4h0m0 13h0m0-21h0m0-8h0m0 20h0m1-9h0m0 2h0m0 16h0m0-28h0m0-1h0m0 19h0m0-38h0m1 50h0m0-5h0m0-20h0m0 1h0m0 18h0m0-10h0m1 13h0m0-12h0m0 17h0m0-1h0m0 35h0m0-49h0m0 14h0m1-29h0m0 24h0m0-3h0m0 38h0m0-25h0m0-33h0m0 7h0m1 16h0m0 21h0m0-14h0m0 16h0m0-49h0m0 0h0m1 19h0m0 14h0m0-16h0m0-18h0m0 14h0m0 17h0m0-21h0m1 40h0m0 3h0m0-18h0m0-30h0m0 5h0m0 4h0m0-7h0m1 36h0m0-20h0m0-16h0m0 32h0m0-9h0m0-45h0m0 29h0m1-14h0m0 2h0m0 1h0m0 18h0m0 34h0m0-7h0m1-38h0m0-35h0m0 43h0m0-42h0m0 55h0m0-20h0m0-35h0m1 49h0m0-25h0m0 5h0m0 8h0m0 28h0m0-24h0m0 9h0m1 2h0m0-1h0m0-23h0m0 7h0m0-21h0m0 29h0m1 1h0m0 14h0m0-10h0m0-5h0m0 7h0m0-11h0m0 25h0m1-19h0m0-6h0m0 28h0m0-43h0m0-4h0m0 15h0m0 11h0m1 16h0m0-36h0m0-27h0m0 25h0m0-2h0m0 33h0m0-22h0m1 33h0m0-47h0m0 2h0m0 22h0m0 23h0m0-27h0m1-9h0m0-4h0m0-15h0m0 21h0m0 3h0m0-8h0m0 24h0m1-12h0m0-20h0m0-4h0m0 1h0m0 16h0m0-12h0m0 12h0m1 4h0m0 18h0m0-24h0m0 5h0m0 2h0m0 7h0m1-11h0m0 20h0m0-24h0m0-32h0m0 41h0m0-2h0m0 13h0m1-13h0m0-5h0m0 26h0m0 23h0m0-22h0m0 29h0m0-31h0m1-10h0m0-47h0m0 23h0m0-4h0m0 56h0m0-33h0m0-32h0m1 40h0m0-22h0m0 16h0m0-7h0m0-1h0m0-3h0m1 5h0m0-29h0m0 31h0m0 23h0m0-6h0m0-15h0m0-25h0m1 3h0m0 13h0m0-8h0m0 13h0m0 11h0m0-11h0m0 19h0m1 2h0m0-24h0m0 16h0m0-22h0m0 20h0m0-51h0m1 24h0m0 32h0m0 8h0m0-46h0m0 13h0m0 10h0m0 4h0m1 10h0m0 3h0m0-27h0m0 34h0m0-10h0m0 6h0m0-30h0m1 18h0m0-17h0m0 21h0m0 20h0m0-44h0m0-39h0m0 72h0m1 0h0m0-24h0m0 8h0m0 8h0m0-17h0m0 4h0m1-10h0m0 32h0m0-30h0m0 0h0m0-5h0m0-3h0m0 29h0m1 3h0m0-13h0m0-24h0m0 28h0m0 10h0m0-10h0m0 12h0m1-23h0m0 20h0m0-11h0m0-5h0m0 10h0m0-3h0m1 5h0m0-13h0m0 28h0m0-26h0m0 8h0m0-29h0m0-4h0m1 30h0m0-18h0m0 1h0m0 15h0m0-62h0m0 63h0m0 7h0m1-21h0m0-2h0m0-33h0m0 50h0m0 12h0m0-43h0m0 14h0m1 24h0m0-21h0m0-15h0m0 44h0m0-26h0m0 14h0m1 45h0m0-67h0m0 15h0m0 24h0m0-8h0m0-10h0m0-21h0m1 3h0m0-8h0m0 9h0m0 40h0m0-40h0m0-37h0m0 50h0m1 6h0m0-32h0m0 47h0m0-12h0m0 0h0m0-10h0m0 15h0m1-3h0m0-11h0m0 5h0m0-7h0m0 10h0m0 2h0m1-1h0m0-27h0m0-6h0m0 42h0m0-6h0m0-14h0m0-23h0m1 52h0m0-48h0m0-17h0m0 25h0m0 26h0m0-45h0m0 54h0m1-36h0m0 20h0m0-11h0m0 10h0m0-12h0m0-17h0m1 40h0m0-1h0m0-5h0m0 1h0m0-4h0m0-1h0m0-9h0m1-12h0m0 40h0m0-33h0m0 43h0m0-37h0m0-24h0m0 32h0m1 16h0m0-44h0m0 26h0m0-40h0m0 43h0m0 6h0m0-42h0m1-3h0m0 27h0m0 30h0m0-15h0m0-11h0m0-32h0m1 30h0m0 31h0m0-20h0m0-6h0m0-13h0m0 2h0m0 38h0m1 17h0m0-59h0m0 37h0m0-17h0m0 12h0m0 0h0m0-7h0m1 13h0m0-41h0m0 16h0m0-30h0m0 29h0m0 6h0m1 10h0m0-34h0m0 5h0m0 30h0m0-16h0m0 22h0m0-61h0m1 52h0m0-19h0m0 20h0m0-17h0m0-18h0m0 2h0m0 24h0m1-8h0m0-4h0m0-11h0m0 41h0m0-30h0m0 7h0m0-28h0m1 31h0m0 8h0m0-34h0m0 14h0m0 14h0m0 17h0m1-19h0m0-9h0m0 9h0m0 2h0m0 20h0m0-38h0m0 15h0m1 3h0m0 12h0m0-22h0m0-19h0m0 28h0m0 5h0m0-29h0m1 16h0m0 3h0m0-15h0m0 44h0m0 5h0m0-18h0m1 13h0m0-24h0m0-18h0m0 34h0m0-40h0m0 13h0m0-1h0m1 17h0m0 7h0m0-30h0m0 20h0m0-8h0m0 26h0m0-47h0m1-3h0m0 32h0m0-36h0m0 44h0m0 27h0m0-9h0m0-5h0m1-13h0m0-24h0m0 24h0m0 15h0m0-23h0m0-10h0m1 11h0m0 22h0m0-11h0m0-17h0m0-8h0m0 42h0m0-17h0m1-15h0m0 51h0m0-45h0m0 28h0m0-26h0m0 12h0m0-6h0m1-51h0m0 66h0m0-32h0m0 17h0m0-28h0m0 21h0m1 2h0m0-8h0m0 17h0m0-11h0m0 13h0m0-12h0m0 6h0m1-36h0m0 27h0m0 16h0m0-25h0m0 20h0m0-2h0m0-20h0m1-11h0m0 17h0m0-24h0m0-15h0m0 48h0m0-1h0m0-1h0m1-8h0m0 2h0m0 10h0m0-16h0m0 20h0m0-12h0m1-13h0m0 9h0m0 27h0m0-37h0m0 12h0m0-11h0m0 39h0m1 0h0m0-32h0m0 18h0m0-22h0m0-14h0m0 31h0m0-27h0m1 16h0m0 2h0m0-14h0m0 32h0m0-25h0m0 20h0m1 19h0m0-35h0m0 7h0m0 58h0m0-67h0m0-5h0m0 2h0m1 24h0m0-10h0m0 8h0m0-6h0m0 19h0m0-18h0m0-18h0m1 19h0m0-41h0m0 50h0m0-37h0m0 15h0m0 9h0m0-16h0m1 5h0m0 18h0m0-20h0m0 26h0m0-13h0m0-3h0m1-36h0m0 21h0m0 35h0m0-34h0m0 8h0m0 11h0m0-64h0m1 64h0m0-46h0m0 35h0m0 17h0m0-15h0m0 6h0m0 5h0m1-30h0m0 26h0m0-2h0m0-3h0m0 28h0m0-5h0m1-13h0m0 10h0m0 5h0m0-26h0m0 27h0m0-20h0m0 18h0m1-17h0m0 13h0m0-3h0m0 43h0m0-33h0m0-30h0m0-14h0m1-19h0m0 20h0m0-6h0m0 4h0m0 9h0m0 36h0m0-46h0m1 18h0m0 5h0m0-2h0m0 23h0m0-25h0m0-8h0m1-3h0m0-3h0m0-3h0m0 17h0m0-7h0m0-10h0m0 12h0m1-15h0m0 19h0m0-6h0m0 33h0m0-2h0m0-14h0m0-9h0m1-17h0m0 25h0m0-13h0m0 23h0m0 13h0m0-24h0m1 8h0m0-11h0m0 2h0m0 4h0m0-30h0m0 9h0m0 6h0m1 50h0m0-33h0m0-8h0m0-16h0m0 19h0m0-13h0m0 1h0m1-26h0m0 29h0m0 19h0m0-24h0m0 14h0m0-15h0m0 12h0m1-19h0m0 5h0m0-4h0m0 28h0m0-16h0m0-16h0m1-12h0m0 26h0m0 2h0m0-9h0m0 2h0m0 10h0m0-12h0m1 19h0m0-49h0m0-9h0m0 55h0m0-1h0m0 0h0m0 1h0m1-6h0m0-1h0m0 43h0m0-42h0m0-17h0m0 4h0m0 46h0m1-7h0m0-32h0m0 46h0m0-50h0m0 14h0m0-1h0m1-6h0m0 30h0m0-6h0m0-1h0m0-37h0m0 32h0m0-7h0m1 17h0m0-13h0m0-18h0m0-20h0m0 31h0m0-7h0m0 17h0m1-24h0m0-12h0m0 39h0m0 27h0m0-41h0m0 40h0m1-47h0m0-24h0m0 49h0m0-29h0m0-21h0m0 43h0m0-5h0m1 7h0m0-11h0m0-24h0m0 26h0m0 28h0m0-23h0m0 8h0m1-8h0m0-22h0m0 21h0m0-5h0m0-47h0m0 26h0m0 27h0m1 13h0m0-28h0m0 0h0m0-1h0m0 28h0m0 14h0m1-54h0m0-26h0m0 59h0m0-19h0m0-5h0m0 3h0m0-21h0m1 31h0m0-25h0m0-15h0m0 39h0m0-27h0m0 33h0m0-27h0m1 15h0m0-11h0m0 16h0m0 16h0m0-36h0m0 39h0m1-25h0m0-28h0m0 14h0m0 21h0m0 1h0m0-4h0m0 14h0m1-33h0m0 7h0m0 17h0m0-29h0m0 14h0m0 25h0m0-55h0m1 59h0m0 6h0m0-9h0m0 1h0m0-47h0m0 27h0m0 20h0m1-18h0m0 3h0m0-10h0m0-3h0m0-6h0m0-12h0m1 38h0m0-53h0m0 39h0m0 7h0m0-19h0m0 21h0m0 25h0m1-13h0m0-32h0m0 24h0m0 17h0m0-31h0m0-20h0m0 2h0m1 16h0m0-38h0m0 45h0m0-26h0m0 9h0m0 9h0m1-10h0m0-1h0m0 2h0m0 27h0m0 52h0m0-86h0m0 37h0m1-32h0m0 67h0m0-40h0m0-17h0m0 18h0m0-11h0m0 24h0m1 3h0m0-5h0m0-51h0m0 30h0m0 19h0m0-8h0m0-35h0m1 14h0m0 4h0m0 27h0m0-16h0m0 1h0m0-24h0m1 18h0m0 27h0m0-38h0m0 20h0m0-3h0m0-16h0m0 11h0m1-15h0m0-17h0m0 38h0m0-3h0m0 31h0m0-51h0m0 29h0m1 8h0m0 4h0m0 27h0m0-36h0m0-28h0m0 2h0m1-3h0m0 30h0m0 10h0m0-28h0m0-7h0m0-4h0m0 19h0m1 27h0m0-26h0m0-20h0m0 27h0m0-17h0m0 62h0m0-65h0m1-3h0m0 0h0m0 1h0m0 18h0m0-41h0m0 42h0m0-10h0m1-4h0m0-2h0m0 7h0m0-13h0m0 15h0m0 2h0m1-4h0m0-4h0m0 42h0m0-33h0m0 4h0m0-19h0m0-21h0m1 53h0m0-21h0m0-6h0m0 0h0m0 34h0m0-41h0m0-4h0m1 30h0m0-7h0m0 0h0m0-36h0m0 54h0m0-17h0m1 0h0m0-17h0m0 4h0m0-14h0m0 12h0m0-9h0m0 14h0m1-9h0m0-4h0m0 11h0m0-15h0m0 15h0m0 0h0m0-18h0m1 15h0m0 3h0m0 16h0m0-7h0m0 20h0m0-35h0m0 3h0m1 26h0m0-13h0m0-45h0m0 59h0m0-53h0m0 9h0m1 47h0m0 15h0m0-46h0m0 20h0m0-7h0m0-13h0m0 13h0m1 30h0m0-51h0m0-7h0m0 39h0m0-22h0m0 30h0m0-41h0m1-1h0m0-4h0m0-32h0m0 50h0m0-17h0m0 12h0m1-5h0m0 76h0m0-92h0m0 40h0m0 11h0m0-20h0m0 11h0m1-23h0m0-1h0m0 14h0m0-13h0m0 12h0m0-29h0m0 36h0m1 11h0m0-37h0m0 28h0m0 0h0m0-3h0m0 0h0m0-13h0m1 24h0m0-29h0m0 44h0m0-44h0m0 46h0m0-26h0m1-9h0m0 9h0m0 11h0m0-9h0m0 9h0m0-24h0m0-1h0m1-3h0m0-19h0m0 7h0m0-6h0m0 20h0m0-2h0m0 37h0m1-26h0m0-21h0m0 4h0m0 49h0m0-49h0m0 15h0m1-3h0m0 10h0m0 2h0m0-10h0m0 14h0m0-28h0m0 0h0m1-8h0m0 23h0m0-1h0m0-3h0m0 14h0m0-3h0m0-42h0m1 29h0m0 48h0m0-12h0m0-54h0m0-2h0m0 36h0m0-1h0m1 0h0m0-38h0m0 1h0m0 38h0m0-31h0m0 7h0m1 26h0m0-17h0m0-12h0m0 0h0m0 13h0m0 14h0m0-64h0m1 28h0m0-4h0m0 28h0m0-16h0m0 12h0m0 17h0m0-11h0m1 10h0m0 50h0m0-59h0m0-13h0m0 33h0m0-27h0m0 4h0m1 19h0m0-38h0m0 19h0m0-29h0m0 47h0m0-21h0m1 15h0m0-43h0m0 45h0m0 3h0m0 42h0m0-59h0m0-3h0m1 5h0m0 1h0m0 47h0m0-52h0m0 9h0m0-12h0m0 8h0m1 20h0m0-41h0m0-8h0m0 11h0m0 44h0m0-19h0m1-21h0m0-42h0m0 44h0m0 22h0m0-18h0m0 4h0m0 15h0m1-34h0m0 17h0m0 1h0m0 20h0m0-2h0m0-9h0m0 12h0m1-8h0m0 7h0m0-14h0m0 1h0m0 10h0m0-47h0m0 67h0m1-31h0m0-1h0m0-5h0m0 18h0m0-7h0m0-24h0m1 23h0m0-30h0m0 17h0m0 23h0m0-11h0m0-24h0m0-1h0m1 58h0" stroke="#000" stroke-width="3.5" stroke-linecap="round" fill="none"/>
<rect x="105.5" y="499" width="1255.3" height="48.7" fill="#ff0000" fill-opacity="0.1"/>
<rect x="162.4" y="489" width="378.9" height="59" fill="#ffa500" fill-opacity="0.1"/>
<rect x="541.3" y="504" width="761.8" height="44.6" fill="#ffa500" fill-opacity="0.1"/>
<path d="M162.4 518.4H541.3M541.3 526.3H1303.1" stroke="#ffa500" stroke-width="2.78" fill="none"/>
<path d="M105.5 523.1H1360.8" stroke="#ff0000" stroke-width="2.08" fill="none"/>
<path d="M353.1 660.3h6.4l-3.2 5.6zM431.2 660.3h6.4l-3.2 5.6zM527.2 660.3h6.4l-3.2 5.6zM544.1 660.3h6.4l-3.2 5.6zM564.3 660.3h6.4l-3.2 5.6zM566.1 660.3h6.4l-3.2 5.6zM573.3 660.3h6.4l-3.2 5.6zM619.2 660.3h6.4l-3.2 5.6zM645.3 660.3h6.4l-3.2 5.6zM651.2 660.3h6.4l-3.2 5.6zM674.1 660.3h6.4l-3.2 5.6zM675.2 660.3h6.4l-3.2 5.6zM677.1 660.3h6.4l-3.2 5.6zM690.4 660.3h6.4l-3.2 5.6zM736.3 660.3h6.4l-3.2 5.6zM800.0 660.3h6.4l-3.2 5.6zM881.1 660.3h6.4l-3.2 5.6zM993.3 660.3h6.4l-3.2 5.6zM1075.2 660.3h6.4l-3.2 5.6zM1117.1 660.3h6.4l-3.2 5.6zM1216.0 660.3h6.4l-3.2 5.6zM1230.1 660.3h6.4l-3.2 5.6zM1234.1 660.3h6.4l-3.2 5.6zM1270.1 660.3h6.4l-3.2 5.6zM1286.1 660.3h6.4l-3.2 5.6z" fill="#ffa500"/>
<path d="M162 666.5V380.5" stroke="#800080" stroke-width="2.08" stroke-dasharray="2.08 3.44" fill="none"/>
<path d="M541 666.5V380.5" stroke="#800080" stroke-width="2.08" stroke-dasharray="2.08 3.44" fill="none"/>
<path d="M1303 666.5V380.5" stroke="#800080" stroke-width="2.08" stroke-dasharray="2.08 3.44" fill="none"/>
</g>
<g font-family='"Liberation Sans", sans-serif' fill="#000">
<text x="350.6" y="656.5" font-size="13.89" text-anchor="middle" textLength="44.125" lengthAdjust="spacingAndGlyphs">58629</text>
<text x="920.5" y="636.5" font-size="13.89" text-anchor="middle" textLength="44.125" lengthAdjust="spacingAndGlyphs">58626</text>
</g>
<rect x="105.5" y="380.5" width="1380.0" height="286.0" fill="none" stroke="#000" stroke-width="1.11"/>
<path d="M162.5 666.5v4.86" stroke="#000" stroke-width="1.11"/>
<path d="M460.5 666.5v4.86" stroke="#000" stroke-width="1.11"/>
<path d="M758.5 666.5v4.86" stroke="#000" stroke-width="1.11"/>
<path d="M1056.5 666.5v4.86" stroke="#000" stroke-width="1.11"/>
<path d="M1353.5 666.5v4.86" stroke="#000" stroke-width="1.11"/>
<g font-family='"Liberation Sans", sans-serif' fill="#000">
<text x="163.3" y="687.0" font-size="13.89" text-anchor="middle" textLength="8.75" lengthAdjust="spacingAndGlyphs">0</text>
<text x="460.1" y="687.0" font-size="13.89" text-anchor="middle" textLength="35" lengthAdjust="spacingAndGlyphs">2000</text>
<text x="757.9" y="687.0" font-size="13.89" text-anchor="middle" textLength="35" lengthAdjust="spacingAndGlyphs">4000</text>
<text x="1055.7" y="687.0" font-size="13.89" text-anchor="middle" textLength="35" lengthAdjust="spacingAndGlyphs">6000</text>
<text x="1353.4" y="687.0" font-size="13.89" text-anchor="middle" textLength="35.125" lengthAdjust="spacingAndGlyphs">8000</text>
</g>
<g font-family='"Liberation Sans", sans-serif' fill="#000">
<path d="M105.5 643.5h-4.86" stroke="#000" stroke-width="1.11"/>
<text x="94.6" y="648.5" font-size="13.89" text-anchor="end" textLength="28.95" lengthAdjust="spacingAndGlyphs">9.20</text>
<path d="M105.5 593.5h-4.86" stroke="#000" stroke-width="1.11"/>
<text x="94.6" y="598.5" font-size="13.89" text-anchor="end" textLength="28.95" lengthAdjust="spacingAndGlyphs">9.22</text>
<path d="M105.5 542.5h-4.86" stroke="#000" stroke-width="1.11"/>
<text x="94.6" y="547.5" font-size="13.89" text-anchor="end" textLength="28.95" lengthAdjust="spacingAndGlyphs">9.24</text>
<path d="M105.5 491.5h-4.86" stroke="#000" stroke-width="1.11"/>
<text x="94.6" y="496.4" font-size="13.89" text-anchor="end" textLength="28.95" lengthAdjust="spacingAndGlyphs">9.26</text>
<path d="M105.5 441.5h-4.86" stroke="#000" stroke-width="1.11"/>
<text x="94.6" y="446.4" font-size="13.89" text-anchor="end" textLength="28.95" lengthAdjust="spacingAndGlyphs">9.28</text>
<path d="M105.5 390.5h-4.86" stroke="#000" stroke-width="1.11"/>
<text x="94.6" y="395.4" font-size="13.89" text-anchor="end" textLength="28.95" lengthAdjust="spacingAndGlyphs">9.30</text>
</g>
<g font-family='"Liberation Sans", sans-serif' fill="#000">
<text x="794.5" y="372" font-size="16.67" text-anchor="middle" textLength="175.25" lengthAdjust="spacingAndGlyphs">Magnitude Estimates</text>
</g>
<path d="M105.5 921.5H1485.5M105.5 889.5H1485.5M105.5 856.5H1485.5M105.5 823.5H1485.5M105.5 791.5H1485.5M105.5 758.5H1485.5" stroke="#b0b0b0" stroke-width="1.11" stroke-dasharray="1.11 1.83" fill="none"/>
<path d="M367.0 856.5h0M548.6 856.5h0M552.0 856.5h0M560.5 856.5h0M569.6 856.5h0M630.0 856.5h0M653.0 856.5h0M661.0 856.5h0M666.5 856.5h0M718.0 856.5h0M758.4 856.5h0M1177.4 856.5h0M226.0 889.5h0M336.3 889.5h0M367.0 889.5h0M455.5 889.5h0M544.3 889.5h0M549.0 889.5h0M552.0 889.5h0M560.5 889.5h0M569.6 889.5h0M624.4 889.5h0M630.0 889.5h0M653.0 889.5h0M661.0 889.5h0M666.5 889.5h0M718.0 889.5h0M758.4 889.5h0M1177.4 889.5h0" stroke="#000" stroke-width="3.4" stroke-linecap="round" fill="none"/>
<path d="M367.0 856.5h0M548.6 856.5h0M552.0 856.5h0M560.5 856.5h0M569.6 856.5h0M630.0 856.5h0M653.0 856.5h0M661.0 856.5h0M666.5 856.5h0M718.0 856.5h0M758.4 856.5h0M1177.4 856.5h0M226.0 889.5h0M336.3 889.5h0M367.0 889.5h0M455.5 889.5h0M544.3 889.5h0M549.0 889.5h0M552.0 889.5h0M560.5 889.5h0M569.6 889.5h0M624.4 889.5h0M630.0 889.5h0M653.0 889.5h0M661.0 889.5h0M666.5 889.5h0M718.0 889.5h0M758.4 889.5h0M1177.4 889.5h0" stroke="#fff" stroke-width="1.2" stroke-linecap="round" fill="none" opacity="0.8"/>
<g clip-path="url(#c3)">
<path d="M162 954.5V725.5" stroke="#800080" stroke-width="2.08" stroke-dasharray="2.08 3.44" fill="none"/>
<path d="M541 954.5V725.5" stroke="#800080" stroke-width="2.08" stroke-dasharray="2.08 3.44" fill="none"/>
<path d="M1303 954.5V725.5" stroke="#800080" stroke-width="2.08" stroke-dasharray="2.08 3.44" fill="none"/>
</g>
<rect x="105.5" y="725.5" width="1380.0" height="229.0" fill="none" stroke="#000" stroke-width="1.11"/>
<g font-family='"Liberation Sans", sans-serif' fill="#000">
<path d="M105.5 921.5h-4.86" stroke="#000" stroke-width="1.11"/>
<text x="94.9" y="926.8" font-size="13.89" text-anchor="end" textLength="79.175" lengthAdjust="spacingAndGlyphs">OBS not OK</text>
<path d="M105.5 889.5h-4.86" stroke="#000" stroke-width="1.11"/>
<text x="94.9" y="894.8" font-size="13.89" text-anchor="end" textLength="42.55" lengthAdjust="spacingAndGlyphs">dr &gt; 5</text>
<path d="M105.5 856.5h-4.86" stroke="#000" stroke-width="1.11"/>
<text x="94.9" y="861.8" font-size="13.89" text-anchor="end" textLength="56.425" lengthAdjust="spacingAndGlyphs">Ion. rad.</text>
<path d="M105.5 823.5h-4.86" stroke="#000" stroke-width="1.11"/>
<text x="94.9" y="828.8" font-size="13.89" text-anchor="end" textLength="67.8" lengthAdjust="spacingAndGlyphs">Sat. pixel.</text>
<path d="M105.5 791.5h-4.86" stroke="#000" stroke-width="1.11"/>
<text x="94.9" y="796.8" font-size="13.89" text-anchor="end" textLength="61.55" lengthAdjust="spacingAndGlyphs">not track</text>
<path d="M105.5 758.5h-4.86" stroke="#000" stroke-width="1.11"/>
<text x="94.9" y="763.8" font-size="13.89" text-anchor="end" textLength="78.05" lengthAdjust="spacingAndGlyphs">not Kalman</text>
</g>
<path d="M105.5 1009.5H1485.5M105.5 983.5H1485.5M105.5 957.5H1485.5" stroke="#b0b0b0" stroke-width="1.11" stroke-dasharray="1.11 1.83" fill="none"/>
<g clip-path="url(#c4)">
<path d="M162.5 1006.5h0m0-1h0m0 1h0m0 1h0m0-1h0m1 0h0m0-1h0m0 1h0m0 0h0m0 0h0m0 0h0m1 0h0m0 0h0m0 0h0m0 0h0m0 0h0m0 1h0m0-1h0m1 1h0m0-1h0m0 0h0m0-1h0m0 0h0m0 1h0m0-1h0m1 1h0m0-1h0m0 1h0m0 0h0m0 1h0m0 0h0m1-1h0m0-1h0m0 1h0m0 1h0m0-2h0m0 0h0m0 1h0m1 0h0m0-1h0m0 1h0m0-1h0m0 1h0m0-2h0m0 1h0m1 1h0m0 0h0m0 0h0m0-1h0m0 1h0m0-1h0m0-1h0m1 1h0m0 0h0m0 0h0m0 1h0m0-1h0m0-1h0m1 2h0m0-1h0m0 0h0m0 1h0m0-1h0m0 1h0m0-1h0m1 2h0m0-2h0m0 0h0m0 1h0m0-1h0m0 0h0m0-1h0m1 2h0m0-1h0m0 1h0m0 0h0m0 0h0m0-1h0m1 0h0m0 1h0m0 0h0m0 0h0m0 0h0m0-1h0m0 1h0m1 0h0m0 0h0m0 0h0m0-1h0m0 0h0m0 1h0m0-1h0m1 1h0m0 0h0m0 1h0m0-2h0m0 1h0m0 0h0m0-1h0m1 2h0m0-1h0m0 0h0m0 0h0m0 1h0m0-1h0m1-1h0m0 2h0m0-1h0m0 0h0m0 0h0m0 0h0m0-1h0m1 0h0m0 2h0m0-1h0m0 1h0m0 0h0m0-1h0m0 0h0m1-1h0m0 1h0m0-1h0m0 1h0m0 0h0m0 0h0m1 0h0m0 0h0m0 0h0m0-1h0m0 1h0m0 1h0m0-1h0m1 0h0m0 0h0m0 0h0m0-1h0m0 1h0m0 0h0m0 0h0m1 1h0m0-1h0m0 1h0m0 0h0m0 0h0m0 0h0m0-1h0m1 1h0m0-1h0m0 1h0m0-2h0m0 1h0m0 1h0m1 0h0m0-1h0m0 0h0m0 1h0m0 0h0m0 0h0m0-1h0m1 1h0m0-1h0m0 0h0m0 0h0m0-1h0m0 2h0m0-1h0m1 0h0m0-1h0m0 1h0m0 0h0m0 0h0m0-1h0m1 1h0m0 1h0m0 0h0m0-1h0m0-1h0m0 2h0m0 0h0m1-1h0m0 0h0m0-1h0m0 0h0m0 1h0m0 0h0m0 0h0m1 0h0m0 0h0m0 1h0m0-1h0m0 1h0m0-1h0m0 0h0m1 0h0m0 1h0m0 0h0m0-1h0m0 0h0m0-1h0m1 0h0m0 1h0m0 0h0m0 1h0m0-2h0m0 2h0m0 0h0m1 0h0m0-1h0m0 0h0m0 2h0m0-2h0m0 1h0m0-2h0m1 1h0m0 0h0m0 1h0m0-1h0m0 0h0m0 0h0m1 1h0m0-1h0m0 0h0m0 0h0m0 0h0m0 0h0m0-2h0m1 2h0m0 0h0m0 0h0m0 2h0m0-2h0m0 0h0m0 0h0m1 0h0m0 0h0m0 0h0m0 0h0m0 1h0m0-1h0m0 2h0m1-3h0m0 2h0m0-1h0m0 0h0m0 2h0m0-1h0m1-1h0m0 0h0m0 1h0m0-1h0m0 1h0m0-1h0m0 0h0m1-1h0m0 1h0m0-1h0m0 0h0m0 1h0m0 1h0m0-2h0m1 1h0m0 0h0m0-1h0m0 0h0m0 1h0m0 0h0m1 0h0m0 1h0m0-1h0m0 0h0m0 0h0m0-1h0m0 0h0m1 1h0m0 0h0m0-1h0m0 1h0m0-1h0m0 0h0m0 1h0m1 0h0m0 1h0m0 0h0m0-2h0m0 2h0m0-2h0m0 0h0m1 1h0m0 0h0m0 0h0m0 1h0m0-1h0m0 0h0m1 0h0m0 1h0m0-1h0m0 0h0m0-1h0m0 1h0m0-1h0m1 1h0m0 0h0m0 0h0m0-2h0m0 2h0m0 1h0m0-1h0m1-1h0m0 1h0m0 0h0m0-1h0m0 1h0m0 0h0m0-2h0m1 1h0m0 0h0m0 2h0m0 0h0m0-2h0m0 1h0m1 0h0m0-1h0m0 1h0m0 0h0m0 0h0m0 0h0m0 0h0m1 0h0m0-1h0m0 1h0m0 0h0m0-1h0m0 0h0m0 1h0m1 0h0m0 0h0m0 0h0m0 0h0m0 1h0m0-2h0m1 0h0m0 1h0m0 0h0m0 1h0m0-1h0m0 0h0m0 0h0m1 0h0m0 0h0m0 1h0m0 0h0m0-1h0m0 1h0m0-1h0m1 1h0m0-1h0m0 0h0m0 0h0m0 1h0m0 0h0m0-1h0m1 0h0m0 0h0m0 1h0m0-1h0m0 1h0m0-1h0m1 0h0m0 0h0m0 0h0m0 1h0m0-1h0m0-1h0m0 1h0m1 0h0m0 0h0m0 0h0m0 1h0m0 0h0m0-1h0m0 0h0m1 0h0m0 0h0m0 0h0m0 0h0m0 0h0m0 1h0m1 0h0m0-2h0m0 0h0m0 1h0m0 0h0m0 0h0m0 1h0m1-1h0m0 1h0m0-1h0m0 0h0m0 0h0m0 0h0m0 0h0m1 1h0m0 0h0m0 0h0m0-1h0m0 1h0m0-2h0m0 1h0m1-1h0m0 2h0m0-2h0m0 2h0m0-1h0m0 0h0m1 0h0m0 1h0m0-1h0m0 0h0m0 1h0m0 0h0m0-1h0m1 0h0m0 0h0m0 0h0m0 0h0m0 1h0m0-1h0m0 0h0m1 0h0m0 1h0m0-1h0m0 0h0m0 0h0m0-1h0m1 1h0m0 0h0m0 0h0m0 0h0m0 1h0m0-1h0m0 0h0m1 1h0m0 0h0m0-1h0m0 1h0m0-1h0m0 0h0m0 0h0m1 0h0m0 1h0m0-1h0m0 0h0m0 1h0m0-1h0m0 1h0m1 0h0m0-1h0m0-1h0m0 1h0m0 1h0m0 0h0m1-1h0m0-1h0m0 0h0m0 2h0m0-1h0m0 1h0m0-1h0m1 0h0m0-1h0m0 1h0m0 1h0m0 1h0m0-1h0m0-1h0m1-1h0m0 1h0m0 0h0m0 0h0m0 0h0m0 0h0m1 1h0m0-1h0m0 1h0m0-1h0m0 1h0m0-1h0m0 0h0m1 0h0m0 1h0m0-1h0m0 0h0m0 1h0m0-1h0m0 0h0m1 0h0m0 0h0m0 1h0m0-1h0m0 1h0m0-1h0m0 0h0m1 0h0m0 1h0m0-1h0m0 0h0m0 0h0m0 0h0m1 1h0m0-1h0m0 0h0m0 0h0m0 0h0m0 0h0m0-1h0m1 1h0m0-1h0m0 0h0m0 2h0m0 0h0m0 0h0m0 0h0m1 0h0m0-1h0m0 1h0m0-1h0m0 0h0m0 0h0m1 0h0m0 0h0m0 1h0m0-1h0m0 0h0m0 0h0m0 1h0m1-1h0m0 1h0m0 0h0m0 1h0m0-1h0m0-1h0m0 0h0m1 1h0m0-1h0m0 0h0m0 0h0m0 1h0m0-1h0m0 1h0m1-1h0m0 0h0m0 0h0m0 1h0m0-1h0m0-1h0m1 1h0m0 1h0m0 1h0m0-2h0m0 0h0m0-1h0m0 1h0m1 0h0m0-1h0m0 2h0m0 0h0m0-1h0m0 0h0m0 0h0m1 0h0m0 1h0m0 0h0m0-1h0m0 1h0m0 0h0m1 0h0m0-1h0m0 1h0m0 1h0m0-2h0m0 0h0m0 0h0m1 1h0m0-1h0m0 0h0m0 2h0m0-1h0m0 1h0m0-2h0m1 0h0m0-2h0m0 3h0m0-1h0m0 2h0m0-2h0m0 1h0m1-1h0m0 0h0m0 0h0m0 0h0m0 0h0m0 0h0m1 0h0m0 0h0m0 0h0m0 1h0m0 0h0m0 0h0m0-2h0m1 1h0m0 0h0m0 0h0m0 1h0m0-1h0m0 0h0m0 0h0m1 1h0m0-1h0m0 1h0m0 0h0m0 0h0m0 0h0m1 1h0m0-2h0m0 1h0m0-2h0m0 1h0m0 0h0m0 0h0m1 0h0m0 1h0m0-1h0m0 1h0m0-1h0m0 0h0m0 1h0m1-2h0m0 2h0m0-1h0m0 0h0m0 1h0m0 0h0m0-1h0m1 0h0m0 0h0m0 0h0m0 0h0m0-1h0m0 1h0m1 0h0m0 0h0m0 0h0m0 0h0m0-1h0m0 0h0m0 2h0m1-1h0m0 0h0m0 1h0m0-1h0m0 0h0m0 1h0m0-1h0m1 1h0m0 0h0m0-1h0m0-1h0m0 1h0m0 1h0m0 1h0m1-2h0m0 0h0m0 0h0m0 1h0m0-1h0m0 0h0m1 1h0m0-2h0m0 1h0m0-1h0m0 0h0m0 3h0m0-1h0m1-1h0m0 0h0m0 1h0m0 0h0m0 0h0m0-1h0m0 0h0m1 0h0m0 1h0m0 0h0m0-1h0m0 0h0m0 0h0m1 1h0m0-1h0m0-1h0m0 2h0m0-1h0m0 0h0m0 0h0m1 0h0m0 0h0m0 0h0m0 2h0m0-2h0m0 0h0m0 0h0m1-1h0m0 1h0m0-1h0m0 0h0m0 1h0m0-1h0m0 2h0m1-1h0m0-1h0m0 2h0m0-1h0m0-1h0m0 0h0m1 0h0m0 1h0m0-1h0m0 1h0m0-1h0m0 2h0m0-1h0m1-1h0m0 1h0m0-1h0m0 0h0m0 0h0m0 0h0m0 2h0m1-2h0m0 2h0m0-2h0m0 0h0m0 1h0m0-1h0m1 0h0m0 1h0m0 0h0m0 0h0m0 0h0m0 0h0m0-1h0m1 1h0m0 0h0m0 0h0m0 0h0m0-1h0m0 0h0m0 0h0m1 0h0m0-1h0m0 2h0m0-1h0m0 0h0m0 1h0m0 0h0m1 1h0m0-1h0m0 1h0m0-2h0m0 1h0m0 0h0m1-1h0m0 0h0m0 1h0m0-1h0m0 0h0m0 1h0m0-1h0m1 1h0m0 0h0m0 0h0m0 0h0m0 0h0m0 0h0m0 0h0m1-1h0m0 0h0m0 1h0m0 0h0m0-1h0m0 1h0m1 0h0m0-1h0m0 2h0m0-1h0m0-1h0m0 1h0m0-1h0m1 0h0m0 1h0m0 0h0m0 0h0m0-1h0m0 1h0m0 0h0m1 0h0m0 0h0m0 0h0m0 0h0m0 0h0m0 0h0m0 0h0m1 1h0m0-1h0m0 0h0m0 0h0m0 0h0m0 0h0m1 0h0m0 2h0m0-1h0m0-1h0m0 0h0m0 0h0m0 1h0m1-1h0m0 1h0m0 0h0m0-1h0m0 1h0m0-1h0m0-1h0m1 0h0m0-1h0m0 2h0m0 0h0m0 0h0m0 0h0m1 0h0m0 1h0m0-2h0m0 1h0m0 1h0m0-1h0m0 1h0m1 0h0m0-2h0m0 1h0m0 1h0m0-2h0m0 2h0m0-1h0m1-1h0m0 2h0m0 0h0m0-1h0m0-1h0m0 2h0m0-2h0m1 2h0m0-2h0m0 1h0m0 0h0m0 0h0m0 0h0m1 1h0m0-2h0m0 1h0m0-1h0m0 2h0m0-1h0m0 1h0m1-2h0m0 1h0m0 1h0m0 0h0m0-1h0m0 1h0m0 0h0m1 0h0m0-3h0m0 2h0m0 1h0m0 0h0m0-1h0m1 0h0m0 0h0m0 1h0m0-1h0m0 0h0m0 1h0m0 0h0m1-2h0m0 2h0m0 0h0m0-1h0m0 1h0m0-1h0m0-1h0m1 1h0m0 1h0m0-1h0m0 1h0m0 1h0m0-1h0m0-1h0m1 0h0m0 1h0m0 1h0m0-1h0m0-1h0m0 1h0m1 0h0m0 0h0m0-2h0m0 2h0m0 0h0m0-1h0m0 0h0m1 1h0m0-1h0m0 0h0m0 0h0m0 0h0m0 1h0m0-1h0m1 1h0m0 0h0m0-1h0m0 0h0m0 0h0m0 0h0m1 0h0m0 0h0m0 0h0m0-1h0m0 0h0m0 1h0m0 0h0m1-1h0m0 1h0m0 1h0m0-2h0m0 0h0m0 0h0m0 1h0m1 1h0m0-1h0m0 0h0m0 0h0m0 1h0m0 0h0m0-1h0m1 0h0m0 1h0m0 0h0m0-2h0m0 1h0m0-1h0m1 1h0m0 0h0m0 0h0m0-1h0m0 1h0m0-1h0m0 1h0m1 2h0m0-3h0m0 0h0m0 2h0m0-1h0m0 1h0m0 0h0m1-2h0m0 1h0m0 0h0m0 1h0m0-1h0m0 0h0m0 0h0m1 0h0m0 0h0m0 0h0m0-1h0m0 0h0m0 1h0m1-1h0m0 0h0m0 1h0m0-1h0m0 1h0m0 0h0m0-2h0m1 0h0m0 2h0m0 0h0m0-1h0m0 1h0m0 1h0m0-1h0m1 0h0m0 1h0m0-1h0m0 1h0m0-1h0m0 0h0m1-1h0m0 1h0m0 0h0m0 0h0m0 0h0m0 0h0m0-1h0m1 1h0m0 0h0m0 0h0m0 0h0m0-1h0m0 0h0m0 1h0m1 0h0m0 0h0m0 0h0m0 1h0m0-1h0m0 0h0m0 1h0m1-1h0m0 0h0m0 0h0m0 1h0m0-1h0m0 1h0m1-2h0m0 3h0m0-1h0m0 0h0m0 0h0m0 0h0m0-1h0m1 1h0m0 0h0m0 0h0m0-1h0m0 1h0m0-1h0m0 0h0m1 2h0m0-3h0m0 1h0m0 0h0m0 0h0m0 1h0m1-1h0m0 1h0m0-1h0m0 0h0m0-1h0m0 1h0m0 1h0m1-1h0m0 0h0m0-1h0m0 1h0m0 1h0m0 0h0m0-1h0m1 0h0m0 1h0m0 0h0m0 0h0m0-1h0m0-1h0m0 1h0m1 0h0m0 0h0m0 1h0m0-1h0m0 0h0m0-1h0m1 1h0m0-1h0m0 2h0m0-1h0m0-1h0m0 0h0m0 1h0m1 0h0m0 1h0m0-1h0m0 0h0m0 0h0m0-1h0m0 1h0m1-1h0m0 1h0m0 0h0m0 0h0m0 0h0m0 0h0m1 0h0m0-2h0m0 2h0m0-1h0m0 2h0m0 0h0m0-1h0m1 0h0m0-1h0m0 1h0m0 0h0m0-1h0m0 0h0m0 1h0m1 1h0m0-1h0m0 0h0m0 0h0m0-1h0m0 1h0m0 0h0m1-1h0m0 2h0m0-1h0m0 0h0m0-1h0m0 2h0m1-1h0m0-1h0m0 1h0m0-1h0m0 1h0m0-1h0m0 0h0m1 1h0m0 0h0m0 0h0m0 0h0m0-1h0m0 1h0m0 0h0m1-1h0m0 1h0m0 1h0m0-1h0m0-1h0m0 1h0m1 0h0m0 0h0m0 0h0m0-1h0m0 1h0m0 0h0m0 0h0m1 1h0m0-1h0m0 2h0m0-2h0m0 0h0m0 0h0m0-1h0m1 3h0m0-1h0m0-1h0m0-1h0m0 1h0m0-1h0m0 1h0m1 0h0m0 0h0m0 0h0m0 0h0m0 0h0m0 0h0m1 1h0m0-1h0m0 0h0m0 0h0m0 1h0m0-1h0m0 1h0m1-1h0m0 0h0m0 0h0m0 0h0m0 2h0m0-1h0m0-1h0m1 0h0m0 1h0m0-2h0m0 1h0m0 0h0m0 0h0m1 0h0m0 0h0m0 2h0m0-2h0m0 1h0m0 0h0m0-1h0m1 1h0m0 0h0m0-1h0m0 0h0m0 1h0m0-1h0m0 1h0m1 0h0m0 0h0m0 0h0m0-1h0m0 1h0m0 0h0m0 1h0m1 0h0m0-2h0m0 2h0m0-1h0m0 0h0m0 1h0m1-2h0m0 1h0m0 0h0m0-1h0m0 1h0m0 1h0m0-1h0m1 0h0m0-1h0m0 0h0m0 0h0m0 1h0m0 0h0m0-1h0m1 0h0m0 1h0m0 0h0m0 0h0m0 0h0m0 0h0m1 0h0m0 0h0m0 0h0m0-1h0m0 1h0m0-1h0m0 0h0m1-1h0m0 2h0m0 0h0m0 0h0m0 0h0m0-1h0m0 0h0m1 0h0m0 0h0m0 1h0m0-1h0m0 1h0m0 0h0m0-1h0m1 0h0m0 0h0m0 1h0m0-1h0m0-1h0m0 1h0m1 0h0m0 0h0m0 0h0m0 1h0m0-1h0m0-1h0m0 2h0m1-2h0m0 2h0m0-1h0m0-1h0m0 1h0m0-1h0m0 0h0m1 0h0m0 1h0m0 0h0m0 1h0m0-1h0m0 1h0m1-2h0m0 0h0m0 1h0m0 0h0m0 0h0m0 0h0m0 0h0m1 0h0m0-1h0m0 1h0m0 0h0m0 1h0m0-1h0m0 0h0m1-1h0m0 2h0m0 0h0m0-1h0m0-1h0m0 1h0m0 1h0m1-2h0m0 2h0m0-1h0m0 0h0m0 1h0m0-1h0m1-1h0m0 1h0m0 0h0m0 0h0m0 0h0m0 1h0m0-1h0m1 0h0m0 0h0m0 0h0m0 0h0m0 0h0m0 0h0m0-1h0m1 1h0m0 0h0m0 0h0m0 0h0m0 0h0m0 0h0m0 0h0m1 1h0m0-1h0m0 0h0m0 1h0m0 0h0m0-1h0m1 0h0m0 0h0m0 0h0m0 1h0m0-2h0m0 2h0m0-1h0m1 0h0m0-1h0m0 1h0m0 0h0m0 0h0m0 1h0m0 0h0m1 0h0m0 0h0m0 0h0m0 0h0m0-2h0m0 2h0m1-1h0m0 2h0m0-2h0m0 0h0m0 0h0m0 0h0m0 0h0m1-1h0m0 2h0m0-1h0m0 1h0m0-1h0m0 0h0m0 1h0m1 1h0m0-3h0m0 1h0m0 1h0m0-1h0m0 1h0m0 0h0m1 0h0m0 0h0m0-2h0m0 1h0m0 1h0m0 0h0m1-1h0m0 0h0m0 1h0m0-1h0m0 0h0m0-1h0m0 0h0m1 1h0m0-1h0m0 1h0m0 1h0m0-1h0m0 1h0m0-2h0m1 1h0m0 0h0m0 1h0m0-1h0m0 0h0m0 0h0m1-1h0m0 0h0m0 0h0m0 1h0m0 0h0m0-2h0m0 2h0m1-1h0m0 1h0m0 0h0m0 0h0m0 1h0m0-1h0m0-1h0m1 0h0m0 1h0m0 0h0m0 0h0m0-1h0m0 2h0m0-1h0m1 0h0m0-1h0m0 1h0m0 0h0m0-1h0m0 2h0m1 0h0m0-1h0m0 0h0m0 0h0m0 1h0m0 0h0m0-2h0m1 1h0m0-1h0m0 1h0m0 0h0m0-2h0m0 1h0m0 1h0m1 0h0m0 0h0m0 0h0m0-1h0m0 1h0m0 0h0m1 0h0m0 0h0m0 1h0m0-3h0m0 2h0m0 0h0m0-1h0m1-1h0m0 1h0m0 0h0m0 1h0m0-1h0m0 0h0m0 1h0m1 0h0m0 0h0m0 0h0m0-2h0m0 1h0m0 0h0m0 1h0m1 0h0m0 0h0m0-1h0m0 1h0m0-1h0m0 0h0m1 0h0m0 1h0m0 0h0m0 0h0m0-1h0m0 0h0m0 1h0m1 0h0m0-1h0m0 0h0m0 1h0m0 0h0m0-1h0m0 2h0m1 0h0m0-2h0m0 0h0m0 0h0m0 0h0m0 1h0m1-1h0m0 1h0m0 0h0m0 0h0m0 0h0m0 0h0m0 0h0m1 1h0m0-2h0m0 1h0m0 1h0m0-1h0m0 0h0m0 0h0m1 0h0m0 1h0m0-2h0m0 0h0m0 2h0m0-1h0m0 0h0m1 1h0m0 0h0m0-1h0m0-1h0m0 2h0m0-1h0m1 1h0m0-1h0m0-1h0m0 1h0m0 0h0m0 0h0m0 0h0m1 1h0m0 0h0m0-1h0m0 0h0m0 1h0m0 0h0m0 0h0m1-1h0m0 1h0m0-1h0m0-1h0m0 0h0m0 1h0m1 2h0m0-2h0m0 0h0m0 0h0m0 0h0m0 0h0m0 1h0m1-1h0m0 0h0m0 0h0m0 0h0m0 0h0m0 0h0m0 0h0m1 1h0m0 0h0m0-1h0m0 0h0m0-1h0m0 0h0m0 1h0m1-1h0m0 2h0m0-1h0m0-1h0m0 1h0m0 0h0m1 0h0m0 0h0m0-1h0m0 1h0m0 0h0m0-1h0m0 0h0m1 1h0m0-1h0m0 1h0m0 0h0m0 0h0m0 0h0m0 0h0m1 0h0m0-1h0m0 1h0m0-1h0m0 0h0m0 0h0m1 0h0m0 0h0m0 1h0m0 0h0m0-1h0m0 1h0m0 0h0m1 0h0m0 0h0m0-1h0m0 2h0m0 0h0m0 0h0m0-2h0m1 1h0m0 0h0m0 0h0m0 0h0m0 1h0m0 0h0m0-1h0m1-1h0m0 0h0m0 1h0m0 0h0m0 0h0m0-1h0m1 0h0m0 0h0m0 1h0m0 0h0m0 0h0m0 0h0m0 0h0m1-1h0m0 1h0m0 0h0m0 0h0m0-1h0m0 0h0m0 1h0m1-2h0m0 2h0m0 0h0m0 0h0m0 1h0m0-1h0m1 0h0m0 0h0m0 1h0m0-1h0m0 1h0m0-1h0m0 0h0m1 1h0m0-1h0m0 0h0m0-1h0m0 1h0m0 0h0m0-1h0m1 2h0m0-1h0m0 0h0m0 0h0m0 1h0m0-1h0m0-1h0m1 1h0m0-1h0m0 1h0m0 0h0m0 0h0m0 0h0m1 0h0m0-1h0m0 1h0m0 0h0m0 0h0m0 0h0m0 0h0m1 0h0m0 1h0m0 0h0m0-1h0m0 0h0m0-1h0m0 0h0m1 0h0m0 1h0m0 1h0m0-2h0m0 0h0m0 2h0m0-1h0m1 0h0m0-1h0m0 2h0m0-2h0m0 1h0m0 0h0m1 0h0m0 1h0m0 0h0m0-1h0m0 0h0m0 1h0m0 0h0m1-2h0m0 1h0m0 1h0m0 0h0m0 0h0m0-1h0m0 0h0m1 0h0m0 1h0m0-1h0m0 1h0m0 0h0m0-1h0m1 2h0m0-1h0m0-2h0m0 2h0m0-1h0m0 0h0m0 0h0m1 1h0m0-1h0m0-1h0m0 1h0m0 0h0m0 0h0m0 2h0m1-2h0m0 1h0m0-1h0m0 1h0m0-2h0m0 2h0m0 0h0m1 0h0m0-1h0m0 1h0m0 0h0m0 0h0m0-1h0m1-1h0m0 2h0m0-1h0m0 1h0m0 0h0m0-1h0m0 0h0m1 0h0m0 2h0m0-2h0m0 0h0m0 0h0m0 0h0m0-1h0m1 1h0m0 0h0m0 0h0m0-1h0m0 1h0m0-1h0m1 1h0m0 1h0m0-1h0m0-1h0m0 0h0m0 1h0m0 0h0m1-1h0m0 1h0m0 0h0m0 0h0m0 0h0m0-1h0m0 0h0m1 1h0m0 0h0m0 0h0m0-1h0m0 1h0m0 0h0m0-1h0m1 0h0m0 0h0m0 0h0m0 0h0m0 1h0m0 0h0m1-1h0m0-1h0m0 1h0m0 0h0m0 1h0m0 0h0m0-1h0m1 0h0m0 1h0m0 1h0m0-1h0m0 1h0m0-1h0m0-1h0m1 0h0m0 2h0m0-2h0m0 0h0m0 1h0m0-1h0m1 0h0m0 1h0m0-2h0m0 2h0m0 0h0m0 0h0m0-2h0m1 3h0m0-1h0m0 0h0m0 0h0m0 0h0m0-1h0m0 1h0m1 0h0m0 0h0m0 0h0m0 0h0m0 1h0m0-2h0m0 1h0m1 0h0m0 0h0m0 1h0m0 0h0m0-1h0m0 1h0m1-1h0m0 0h0m0 1h0m0 0h0m0 0h0m0-1h0m0 1h0m1-1h0m0 0h0m0 0h0m0 2h0m0-2h0m0 0h0m0 1h0m1-1h0m0 0h0m0 2h0m0-1h0m0-1h0m0-1h0m1 2h0m0 0h0m0 0h0m0-1h0m0 0h0m0-1h0m0 2h0m1 0h0m0 0h0m0 0h0m0-1h0m0 0h0m0 2h0m0-2h0m1 1h0m0 0h0m0 0h0m0 0h0m0 0h0m0-1h0m0 1h0m1-1h0m0 0h0m0 0h0m0 1h0m0-1h0m0 0h0m1 2h0m0-2h0m0 1h0m0-1h0m0 0h0m0 0h0m0 0h0m1 1h0m0 0h0m0 1h0m0-1h0m0-1h0m0 1h0m0-2h0m1 2h0m0 0h0m0 0h0m0-1h0m0 1h0m0-1h0m1 1h0m0-1h0m0-1h0m0 0h0m0 0h0m0 1h0m0 0h0m1-1h0m0 2h0m0-1h0m0 0h0m0 1h0m0-1h0m0 1h0m1-1h0m0-1h0m0-1h0m0 1h0m0 1h0m0 0h0m0-2h0m1 1h0m0 1h0m0 0h0m0-1h0m0 2h0m0 0h0m1-1h0m0 0h0m0 0h0m0 0h0m0-1h0m0 0h0m0 0h0m1 0h0m0 1h0m0-1h0m0 1h0m0-1h0m0 1h0m0-2h0m1 1h0m0-1h0m0 1h0m0 1h0m0-1h0m0 0h0m1-1h0m0 2h0m0-1h0m0-1h0m0 0h0m0 1h0m0 0h0m1 1h0m0-1h0m0 0h0m0 2h0m0-1h0m0-1h0m0 1h0m1-1h0m0 0h0m0 0h0m0 1h0m0-1h0m0 0h0m0 1h0m1-1h0m0 0h0m0 1h0m0 0h0m0 0h0m0-1h0m1 0h0m0 0h0m0 2h0m0-1h0m0 1h0m0-1h0m0-1h0m1 1h0m0 0h0m0 0h0m0 0h0m0 0h0m0 0h0m0 0h0m1-1h0m0 2h0m0-1h0m0 0h0m0 0h0m0 0h0m1-1h0m0 1h0m0 0h0m0 0h0m0-1h0m0 1h0m0-1h0m1 1h0m0 1h0m0-1h0m0 0h0m0 0h0m0-1h0m0 1h0m1 1h0m0-1h0m0 0h0m0 0h0m0 0h0m0 0h0m0 0h0m1 0h0m0-1h0m0 1h0m0 1h0m0 0h0m0-1h0m1 0h0m0 0h0m0 1h0m0-1h0m0 0h0m0 1h0m0 0h0m1 0h0m0 1h0m0-1h0m0-1h0m0 0h0m0 0h0m0 1h0m1-1h0m0 0h0m0 1h0m0-1h0m0 0h0m0 0h0m0 0h0m1 0h0m0 0h0m0 1h0m0 0h0m0-2h0m0 2h0m1 1h0m0-2h0m0 0h0m0 0h0m0 0h0m0 0h0m0 1h0m1-2h0m0 0h0m0 1h0m0 0h0m0 0h0m0 1h0m0 0h0m1-1h0m0 0h0m0 1h0m0 0h0m0-1h0m0 0h0m1 1h0m0-1h0m0 1h0m0-1h0m0 0h0m0 0h0m0 0h0m1 0h0m0 0h0m0 0h0m0 0h0m0 0h0m0 1h0m0 0h0m1 1h0m0-2h0m0 1h0m0-1h0m0 1h0m0 0h0m0 0h0m1 0h0m0 1h0m0-1h0m0 0h0m0-1h0m0 1h0m1-1h0m0 0h0m0 1h0m0-1h0m0 1h0m0-2h0m0 1h0m1 0h0m0 0h0m0 1h0m0-1h0m0 1h0m0-1h0m0 0h0m1 0h0m0 1h0m0-1h0m0-1h0m0 2h0m0 0h0m1-1h0m0-1h0m0 2h0m0-2h0m0 1h0m0 0h0m0 0h0m1 1h0m0-1h0m0 0h0m0 1h0m0-1h0m0 0h0m0 0h0m1-1h0m0 1h0m0 1h0m0-2h0m0 1h0m0 0h0m0-1h0m1 1h0m0 0h0m0-1h0m0 2h0m0-2h0m0 2h0m1-1h0m0 1h0m0-1h0m0 0h0m0 0h0m0 0h0m0-1h0m1 1h0m0 0h0m0 0h0m0 0h0m0-1h0m0 2h0m0-2h0m1 1h0m0 0h0m0 0h0m0 1h0m0-1h0m0 0h0m1-1h0m0 1h0m0-1h0m0 1h0m0-1h0m0 1h0m0 0h0m1 1h0m0-1h0m0 0h0m0 0h0m0-1h0m0 1h0m0 0h0m1-1h0m0 0h0m0 0h0m0 2h0m0-1h0m0 0h0m0-1h0m1 0h0m0 1h0m0-1h0m0 0h0m0 1h0m0 0h0m1-1h0m0 1h0m0 1h0m0-1h0m0 0h0m0 0h0m0 0h0m1 0h0m0 1h0m0-1h0m0 0h0m0 1h0m0 0h0m0-1h0m1-1h0m0 1h0m0-1h0m0 1h0m0 0h0m0 0h0m1 0h0m0 0h0m0 0h0m0 0h0m0 0h0m0 0h0m0 1h0m1 0h0m0 0h0m0-1h0m0 0h0m0 0h0m0-1h0m0 1h0m1 1h0m0 0h0m0-1h0m0 0h0m0 0h0m0 0h0m0 1h0m1 0h0m0 1h0m0-2h0m0 0h0m0 0h0m0 0h0m1 1h0m0-1h0m0 0h0m0 1h0m0 0h0m0-1h0m0 0h0m1 1h0m0 0h0m0 0h0m0-1h0m0 1h0m0 0h0m0 0h0m1 0h0m0 0h0m0 0h0m0-1h0m0 0h0m0 1h0m1 0h0m0-1h0m0 1h0m0-1h0m0 1h0m0-2h0m0 2h0m1-1h0m0 1h0m0 0h0m0 0h0m0 0h0m0-1h0m0 2h0m1-2h0m0 2h0m0-1h0m0 0h0m0 0h0m0 0h0m0 0h0m1 0h0m0 1h0m0-1h0m0-1h0m0 0h0m0 0h0m1 1h0m0-1h0m0 1h0m0 0h0m0 0h0m0 0h0m0 0h0m1-1h0m0 0h0m0 1h0m0 0h0m0-1h0m0 0h0m0 1h0m1 0h0m0-1h0m0 1h0m0-1h0m0 1h0m0 0h0m1-1h0m0 0h0m0 1h0m0 0h0m0-1h0m0 0h0m0 0h0m1 1h0m0-1h0m0 1h0m0-1h0m0 1h0m0 1h0m0-1h0m1 0h0m0 0h0m0-1h0m0 1h0m0-1h0m0 0h0m0 0h0m1 0h0m0 0h0m0 1h0m0 0h0m0 0h0m0 0h0m1-1h0m0 0h0m0 2h0m0-1h0m0 0h0m0 0h0m0-1h0m1 1h0m0 0h0m0 0h0m0 0h0m0-1h0m0 2h0m0-3h0m1 1h0m0 1h0m0-1h0m0 1h0m0 0h0m0-1h0m1 0h0m0 1h0m0 0h0m0-1h0m0 1h0m0-2h0m0 1h0m1 0h0m0 0h0m0 0h0m0 0h0m0 0h0m0 0h0m0 0h0m1 1h0m0 1h0m0-2h0m0 0h0m0 0h0m0 0h0m0 0h0m1 1h0m0-1h0m0 1h0m0-2h0m0 1h0m0 1h0m1-1h0m0 0h0m0 0h0m0 0h0m0 0h0m0 0h0m0 0h0m1 2h0m0-3h0m0 2h0m0-1h0m0 0h0m0 0h0m0-1h0m1 1h0m0 0h0m0-2h0m0 1h0m0 1h0m0 0h0m0 0h0m1 0h0m0 0h0m0 0h0m0-1h0m0 1h0m0 0h0m1-1h0m0 1h0m0-1h0m0 1h0m0-2h0m0 2h0m0-1h0m1 1h0m0 1h0m0-1h0m0-1h0m0 0h0m0 1h0m0 0h0m1-1h0m0 0h0m0 2h0m0-2h0m0 1h0m0 0h0m1 0h0m0-1h0m0 1h0m0 0h0m0 0h0m0 1h0m0-1h0m1-1h0m0 1h0m0-1h0m0 0h0m0 2h0m0-3h0m0 2h0m1 0h0m0-1h0m0 0h0m0 1h0m0 0h0m0 0h0m0 0h0m1-1h0m0 1h0m0 0h0m0-2h0m0 2h0m0-1h0m1 1h0m0 0h0m0 0h0m0 0h0m0-1h0m0 0h0m0 1h0m1-1h0m0 1h0m0 0h0m0-1h0m0 1h0m0-1h0m0 1h0m1 0h0m0 0h0m0 0h0m0-2h0m0 1h0m0 1h0m1 0h0m0-1h0m0 0h0m0 1h0m0 1h0m0-2h0m0 1h0m1 0h0m0-1h0m0 1h0m0-1h0m0 0h0m0 0h0m0 1h0m1-2h0m0 2h0m0-1h0m0 0h0m0 0h0m0 1h0m0-1h0m1 1h0m0-1h0m0 1h0m0 0h0m0 0h0m0 0h0m1 0h0m0 0h0m0-2h0m0 1h0m0 1h0m0 0h0m0-1h0m1 0h0m0 2h0m0-2h0m0 1h0m0 0h0m0 0h0m0 0h0m1 0h0m0-2h0m0 2h0m0 0h0m0-1h0m0 1h0m1 0h0m0 0h0m0 1h0m0-1h0m0 1h0m0-1h0m0 0h0m1 1h0m0-1h0m0 0h0m0 0h0m0 1h0m0 0h0m0-1h0m1 0h0m0 0h0m0 1h0m0 0h0m0 0h0m0-1h0m0 1h0m1 0h0m0 0h0m0 0h0m0-1h0m0 1h0m0 0h0m1-1h0m0 0h0m0 1h0m0-1h0m0 1h0m0 0h0m0-1h0m1 0h0m0 1h0m0 0h0m0 0h0m0 1h0m0-2h0m0 1h0m1-1h0m0 1h0m0-1h0m0 1h0m0 1h0m0-1h0m1 0h0m0-1h0m0 1h0m0-2h0m0 3h0m0-1h0m0 0h0m1 1h0m0-1h0m0 0h0m0-1h0m0 0h0m0 0h0m0 1h0m1-1h0m0 0h0m0 0h0m0 0h0m0 1h0m0-1h0m0-1h0m1 1h0m0 1h0m0-1h0m0 0h0m0 0h0m0 1h0m1 0h0m0 0h0m0 0h0m0-2h0m0 1h0m0 0h0m0 1h0m1 0h0m0-1h0m0 1h0m0-1h0m0 1h0m0-1h0m0 0h0m1 0h0m0 1h0m0-2h0m0 1h0m0 0h0m0 0h0m1 0h0m0 0h0m0 1h0m0-1h0m0 1h0m0-1h0m0 1h0m1-1h0m0-1h0m0 2h0m0-3h0m0 2h0m0 0h0m0 1h0m1-1h0m0 0h0m0 0h0m0 0h0m0 0h0m0-1h0m0 1h0m1-1h0m0 1h0m0 1h0m0-1h0m0 1h0m0-1h0m1 0h0m0-1h0m0 1h0m0 0h0m0 1h0m0-1h0m0 0h0m1 0h0m0-1h0m0 1h0m0-1h0m0 0h0m0 1h0m0 0h0m1 0h0m0 0h0m0 1h0m0-1h0m0 0h0m0 0h0m1-1h0m0 1h0m0-1h0m0 1h0m0 0h0m0 0h0m0 0h0m1 1h0m0-1h0m0 0h0m0 1h0m0 0h0m0 0h0m0 1h0m1-2h0m0 1h0m0 1h0m0-1h0m0-2h0m0 1h0m0 0h0m1-1h0m0 2h0m0-2h0m0 1h0m0 0h0m0 0h0m1 0h0m0 0h0m0 0h0m0-1h0m0 1h0m0-1h0m0 0h0m1 1h0m0 0h0m0-1h0m0 1h0m0 0h0m0 1h0m0-1h0m1-2h0m0 2h0m0 0h0m0-1h0m0-1h0m0 2h0m1 0h0m0 0h0m0-2h0m0 1h0m0 2h0m0-2h0m0 0h0m1 1h0m0 0h0m0-1h0m0 1h0m0-1h0m0 1h0m0 0h0m1 0h0m0 0h0m0 1h0m0-2h0m0 1h0m0-1h0m0 1h0m1-1h0m0 1h0m0 0h0m0-1h0m0 1h0m0 1h0m1-2h0m0 1h0m0-1h0m0 1h0m0-1h0m0 1h0m0 0h0m1 0h0m0 1h0m0-2h0m0 2h0m0-2h0m0 0h0m0 1h0m1 0h0m0 0h0m0 0h0m0-1h0m0 1h0m0 0h0m0 0h0m1 1h0m0-2h0m0 1h0m0 0h0m0 0h0m0 0h0m1 0h0m0 0h0m0 0h0m0-1h0m0 1h0m0 0h0m0 0h0m1 0h0m0 0h0m0 0h0m0-1h0m0 2h0m0-1h0m0 0h0m1 0h0m0 0h0m0-1h0m0 2h0m0-2h0m0 1h0m1 0h0m0 0h0m0 1h0m0-1h0m0 1h0m0 0h0m0-1h0m1 1h0m0-1h0m0 0h0m0 1h0m0-1h0m0 0h0m0 1h0m1 0h0m0 0h0m0-2h0m0 1h0m0 0h0m0 0h0m0 0h0m1 1h0m0 0h0m0 0h0m0 0h0m0-1h0m0 0h0m1 0h0m0 1h0m0-1h0m0-1h0m0 1h0m0-1h0m0 0h0m1 1h0m0-1h0m0 0h0m0 1h0m0 0h0m0 0h0m0 0h0m1 1h0m0-1h0m0 0h0m0 2h0m0-2h0m0 0h0m1 0h0m0 0h0m0 0h0m0 1h0m0 0h0m0-1h0m0 0h0m1-1h0m0 2h0m0-1h0m0 0h0m0 0h0m0-1h0m0 1h0m1 0h0m0-1h0m0 1h0m0 1h0m0-1h0m0 0h0m0 0h0m1 0h0m0 0h0m0-1h0m0 2h0m0 1h0m0-2h0m1 0h0m0 1h0m0-1h0m0 1h0m0-1h0m0 1h0m0-1h0m1 0h0m0 0h0m0 1h0m0 0h0m0 0h0m0-1h0m0 0h0m1 0h0m0 1h0m0-1h0m0 0h0m0 1h0m0 0h0m1 0h0m0 0h0m0 0h0m0 0h0m0-1h0m0 0h0m0 1h0m1-1h0m0 0h0m0 0h0m0 1h0m0 0h0m0-1h0m0 1h0m1 0h0m0 0h0m0-1h0m0 0h0m0 0h0m0-1h0m0 1h0m1 1h0m0-1h0m0 1h0m0 0h0m0-1h0m0 0h0m1 1h0m0 1h0m0-2h0m0 0h0m0 0h0m0 0h0m0 1h0m1-1h0m0 1h0m0 0h0m0 0h0m0 0h0m0-1h0m0 1h0m1-1h0m0 0h0m0 2h0m0-2h0m0 0h0m0 1h0m1 0h0m0-1h0m0 0h0m0 1h0m0 0h0m0-1h0m0 2h0m1-1h0m0 0h0m0-1h0m0 1h0m0-1h0m0 1h0m0 0h0m1-1h0m0 0h0m0 0h0m0 0h0m0 0h0m0 0h0m0 1h0m1-1h0m0 1h0m0-1h0m0 1h0m0 0h0m0-1h0m1 2h0m0-1h0m0 0h0m0 0h0m0-1h0m0 0h0m0 1h0m1-2h0m0 1h0m0 1h0m0 0h0m0-2h0m0 2h0m0 1h0m1-2h0m0 1h0m0-2h0m0 1h0m0-1h0m0 0h0m1 2h0m0-2h0m0 1h0m0 0h0m0-1h0m0 2h0m0-1h0m1 0h0m0 0h0m0-1h0m0 1h0m0 0h0m0 0h0m0 0h0m1 1h0m0 0h0m0-1h0m0 1h0m0-1h0m0 1h0m0-1h0m1 0h0m0 0h0m0 0h0m0 0h0m0 1h0m0-1h0m1 0h0m0 0h0m0 0h0m0 0h0m0 1h0m0 0h0m0 0h0m1 0h0m0 0h0m0-1h0m0 1h0m0-1h0m0 1h0m0-2h0m1 1h0m0 1h0m0-1h0m0 0h0m0 1h0m0-1h0m1 1h0m0-1h0m0 1h0m0-1h0m0-1h0m0 1h0m0 1h0m1-1h0m0 0h0m0 1h0m0 0h0m0-1h0m0 0h0m0 1h0m1 0h0m0-2h0m0 1h0m0 1h0m0-1h0m0-1h0m0 1h0m1-1h0m0 0h0m0 0h0m0 0h0m0 1h0m0-1h0m1 1h0m0 1h0m0-1h0m0 0h0m0 0h0m0 0h0m0 0h0m1 0h0m0 0h0m0 0h0m0 0h0m0 1h0m0-1h0m0 0h0m1-1h0m0 2h0m0-1h0m0 0h0m0 0h0m0-1h0m0-1h0m1 2h0m0-1h0m0 1h0m0-1h0m0 0h0m0 1h0m1-1h0m0 1h0m0-1h0m0 1h0m0 0h0m0-1h0m0 2h0m1-1h0m0-1h0m0 0h0m0 1h0m0 0h0m0-1h0m0 1h0m1 0h0m0 0h0m0 0h0m0 0h0m0 0h0m0 0h0m1-1h0m0 1h0m0 0h0m0 0h0m0 0h0m0-1h0m0 2h0m1-1h0m0 1h0m0-1h0m0-1h0m0 1h0m0-1h0m0 1h0m1-1h0m0 2h0m0-1h0m0-1h0m0 2h0m0-1h0m0 0h0m1 1h0m0-1h0m0-1h0m0 1h0m0 0h0m0-1h0m1 1h0m0 0h0m0 0h0m0-1h0m0 3h0m0-2h0m0 0h0m1-1h0m0 1h0m0 1h0m0 0h0m0-1h0m0 0h0m0 0h0m1 1h0m0-1h0m0 1h0m0-1h0m0 1h0m0-1h0m1 1h0m0 0h0m0 0h0m0 0h0m0-1h0m0 0h0m0 1h0m1 0h0m0-2h0m0 2h0m0-1h0m0 1h0m0-1h0m0 1h0m1 0h0m0-1h0m0 0h0m0 1h0m0 0h0m0-1h0m0 0h0m1 1h0m0 0h0m0 0h0m0-2h0m0 2h0m0 0h0m1-1h0m0 0h0m0-1h0m0 2h0m0-2h0m0 1h0m0 0h0m1-1h0m0 3h0m0-1h0m0-1h0m0-1h0m0 1h0m0 0h0m1 0h0m0 1h0m0 0h0m0-1h0m0 1h0m0 1h0m1-1h0m0-1h0m0 1h0m0-1h0m0 0h0m0 1h0m0-1h0m1 1h0m0-1h0m0 1h0m0-2h0m0 2h0m0-2h0m0 2h0m1-2h0m0 1h0m0 1h0m0-1h0m0 0h0m0 1h0m0-2h0m1 2h0m0-1h0m0 1h0m0-1h0m0 0h0m0 1h0m1-2h0m0 2h0m0 0h0m0-1h0m0 0h0m0-1h0m0 1h0m1-1h0m0 0h0m0 1h0m0 0h0m0 0h0m0 0h0m0 0h0m1-1h0m0 2h0m0-1h0m0 0h0m0 0h0m0 0h0m1 0h0m0 0h0m0 0h0m0 1h0m0-1h0m0 1h0m0-2h0m1 0h0m0 1h0m0 0h0m0 0h0m0-1h0m0 1h0m0 0h0m1 0h0m0 1h0m0-1h0m0 0h0m0 0h0m0 1h0m0-2h0m1 1h0m0 0h0m0 0h0m0 1h0m0 0h0m0-1h0m1-1h0m0 1h0m0-1h0m0 0h0m0 1h0m0 0h0m0 0h0m1 0h0m0 0h0m0 0h0m0-1h0m0 0h0m0 1h0m0-1h0m1 1h0m0 0h0m0 0h0m0 0h0m0-1h0m0 1h0m1-1h0m0 0h0m0 1h0m0-1h0m0 2h0m0-1h0m0 0h0m1 0h0m0 1h0m0-3h0m0 2h0m0 0h0m0 0h0m0 0h0m1 0h0m0 0h0m0 1h0m0-1h0m0 0h0m0 0h0m0 0h0m1 1h0m0-1h0m0 0h0m0 0h0m0-1h0m0 1h0m1 0h0m0 0h0m0 0h0m0 1h0m0-1h0m0 0h0m0 0h0m1 1h0m0-1h0m0 0h0m0 0h0m0 1h0m0-1h0m0 0h0m1-1h0m0 2h0m0-2h0m0 2h0m0 0h0m0-1h0m1 0h0m0 0h0m0 1h0m0-1h0m0 1h0m0-2h0m0 0h0m1 0h0m0 1h0m0 0h0m0 0h0m0 0h0m0 1h0m0 0h0m1-1h0m0 0h0m0 0h0m0 1h0m0 0h0m0-1h0m0-1h0m1 1h0m0 0h0m0 1h0m0-1h0m0 0h0m0 0h0m1 1h0m0 0h0m0-1h0m0 1h0m0-1h0m0 0h0m0 0h0m1 0h0m0 2h0m0-1h0m0-1h0m0 1h0m0-1h0m0-1h0m1 2h0m0 0h0m0-1h0m0 1h0m0 0h0m0-1h0m1 1h0m0 1h0m0-1h0m0 0h0m0-2h0m0 1h0m0 0h0m1 1h0m0-1h0m0 1h0m0-1h0m0 0h0m0 1h0m0-1h0m1 1h0m0-1h0m0 1h0m0 0h0m0 0h0m0-1h0m0 1h0m1 0h0m0 0h0m0 1h0m0-1h0m0 1h0m0-1h0m1 0h0m0 1h0m0-1h0m0 0h0m0 1h0m0 0h0m0-1h0m1 0h0m0 1h0m0-1h0m0-1h0m0 0h0m0 1h0m0 1h0m1-2h0m0 0h0m0 1h0m0 0h0m0-1h0m0 1h0m0 1h0m1-1h0m0 0h0m0 1h0m0 0h0m0-2h0m0 1h0m1 0h0m0 1h0m0-1h0m0 1h0m0-1h0m0 0h0m0 0h0m1 0h0m0 1h0m0-2h0m0 1h0m0-1h0m0 1h0m0 1h0m1-2h0m0-1h0m0 2h0m0-1h0m0-1h0m0 2h0m1-1h0m0 0h0m0 0h0m0 1h0m0-1h0m0 1h0m0 0h0m1 0h0m0 0h0m0-1h0m0-1h0m0 1h0m0-1h0m0 2h0m1-1h0m0 0h0m0 0h0m0 1h0m0 0h0m0-1h0m0-1h0m1 1h0m0-1h0m0 1h0m0-1h0m0 0h0m0 1h0m1 0h0m0-1h0m0 1h0m0 0h0m0-1h0m0 1h0m0 1h0m1-1h0m0-1h0m0 1h0m0-1h0m0 0h0m0 0h0m0 1h0m1 0h0m0 0h0m0 0h0m0 0h0m0-1h0m0 0h0m1 2h0m0-2h0m0 1h0m0 0h0m0 0h0m0-1h0m0 0h0m1 0h0m0 0h0m0 1h0m0 0h0m0 0h0m0 1h0m0-1h0m1 1h0m0-1h0m0-1h0m0 1h0m0 1h0m0-2h0m0 2h0m1-1h0m0 0h0m0-1h0m0 1h0m0-1h0m0 0h0m1 1h0m0 0h0m0 1h0m0-2h0m0 3h0m0-1h0m0-1h0m1 0h0m0 2h0m0-1h0m0 0h0m0-1h0m0 1h0m0 0h0m1-1h0m0 1h0m0 0h0m0-2h0m0 1h0m0 0h0m1-1h0m0 2h0m0-1h0m0 0h0m0 1h0m0-1h0m0 0h0m1 1h0m0 0h0m0-1h0m0 1h0m0-2h0m0 1h0m0 0h0m1 1h0m0 0h0m0-1h0m0 0h0m0 1h0m0 0h0m0-1h0m1 2h0m0-1h0m0 0h0m0 1h0m0-1h0m0 0h0m1 0h0m0 0h0m0 0h0m0-2h0m0 2h0m0 0h0m0-1h0m1 1h0m0-1h0m0 1h0m0 1h0m0-1h0m0 0h0m0-1h0m1 1h0m0 0h0m0-1h0m0 1h0m0 0h0m0 0h0m1-1h0m0 0h0m0 1h0m0 0h0m0 0h0m0 0h0m0-1h0m1 1h0m0 0h0m0 0h0m0 0h0m0 0h0m0 0h0m0 0h0m1-1h0m0 1h0m0 0h0m0 0h0m0-1h0m0 0h0m0 2h0m1 0h0m0-1h0m0-1h0m0 1h0m0 1h0m0-2h0m1-1h0m0 1h0m0 1h0m0 0h0m0 0h0m0 0h0m0 0h0m1 0h0m0-1h0m0 0h0m0 0h0m0 1h0m0-1h0m0 1h0m1-1h0m0 0h0m0 0h0m0 0h0m0 0h0m0 0h0m1 0h0m0 0h0m0 0h0m0 0h0m0 1h0m0 1h0m0-2h0m1 1h0m0 0h0m0-1h0m0 1h0m0 0h0m0 1h0m0-2h0m1 0h0m0 0h0m0 0h0m0 0h0m0 0h0m0 1h0m0 0h0m1-1h0m0 0h0m0 1h0m0 0h0m0-1h0m0 0h0m1 0h0m0-1h0m0 2h0m0-1h0m0 1h0m0-1h0m0 0h0m1 0h0m0 1h0m0 1h0m0-1h0m0-1h0m0 0h0m0 0h0m1 0h0m0 0h0m0 0h0m0 0h0m0 1h0m0 0h0m1-1h0m0 0h0m0 1h0m0 0h0m0-1h0m0 0h0m0 1h0m1-2h0m0 1h0m0 0h0m0 1h0m0-1h0m0 0h0m0 0h0m1 1h0m0-1h0m0 1h0m0-1h0m0 0h0m0 0h0m0 0h0m1 0h0m0 0h0m0 0h0m0 0h0m0 1h0m0 0h0m1-1h0m0 0h0m0 0h0m0 0h0m0 1h0m0-1h0m0 1h0m1-1h0m0 0h0m0 0h0m0 0h0m0 1h0m0 1h0m0-2h0m1 0h0m0 0h0m0 1h0m0 0h0m0 1h0m0-2h0m1 0h0m0 1h0m0-1h0m0 0h0m0 0h0m0-1h0m0 1h0m1 0h0m0 1h0m0-1h0m0 1h0m0 0h0m0-2h0m0 1h0m1 0h0m0 0h0m0 0h0m0 0h0m0 0h0m0 0h0m0 0h0m1-1h0m0 1h0m0 0h0m0-1h0m0 1h0m0-1h0m1 1h0m0 0h0m0 0h0m0 1h0m0 0h0m0-2h0m0 2h0m1-1h0m0 0h0m0 0h0m0-1h0m0 0h0m0 1h0m0 1h0m1-1h0m0 0h0m0 0h0m0-1h0m0 0h0m0 1h0m0 0h0m1-1h0m0 0h0m0 1h0m0 0h0m0-1h0m0 1h0m1 1h0m0-1h0m0 1h0m0-1h0m0 0h0m0 1h0m0-1h0m1 1h0m0 0h0m0-1h0m0 1h0m0 0h0m0-1h0m0-1h0m1 1h0m0 0h0m0 1h0m0-1h0m0 0h0m0 1h0m1-1h0m0 0h0m0 0h0m0 0h0m0 1h0m0-1h0m0 1h0m1-1h0m0 0h0m0 0h0m0 0h0m0 0h0m0 1h0m0-1h0m1 1h0m0-1h0m0 0h0m0 1h0m0-1h0m0 1h0m0 0h0m1 0h0m0-1h0m0 0h0m0 0h0m0 1h0m0-1h0m1 0h0m0-1h0m0 1h0m0 1h0m0-2h0m0 1h0m0 1h0m1-1h0m0 0h0m0 0h0m0 0h0m0 0h0m0 0h0m0 0h0m1 0h0m0 1h0m0 0h0m0-1h0m0 1h0m0 0h0m1-1h0m0 1h0m0 0h0m0-1h0m0-1h0m0 1h0m0-1h0m1 2h0m0-1h0m0 0h0m0 0h0m0-1h0m0 1h0m0-1h0m1 1h0m0-1h0m0 2h0m0-2h0m0 3h0m0-3h0m0 1h0m1 0h0m0 0h0m0-1h0m0 1h0m0 0h0m0-1h0m1 0h0m0 2h0m0-1h0m0 1h0m0-2h0m0 1h0m0-1h0m1 0h0m0 1h0m0 1h0m0 0h0m0-1h0m0-1h0m0 0h0m1 1h0m0 0h0m0-1h0m0 1h0m0-1h0m0 1h0m1 0h0m0 0h0m0-1h0m0 1h0m0 1h0m0-1h0m0 0h0m1 0h0m0 0h0m0 1h0m0-2h0m0 1h0m0-1h0m0 1h0m1 0h0m0 0h0m0 0h0m0 0h0m0 0h0m0 0h0m0 0h0m1 0h0m0-1h0m0 1h0m0 0h0m0 0h0m0 1h0m1 0h0m0-2h0m0 1h0m0 0h0m0 0h0m0-1h0m0 0h0m1 1h0m0 0h0m0 0h0m0-1h0m0 0h0m0 1h0m0 0h0m1-1h0m0 1h0m0 1h0m0-2h0m0 1h0m0-1h0m1 0h0m0 1h0m0 1h0m0-1h0m0-1h0m0 1h0m0 0h0m1-2h0m0 1h0m0 0h0m0 1h0m0-2h0m0 1h0m0 0h0m1 1h0m0-1h0m0-1h0m0 2h0m0-1h0m0-1h0m0 0h0m1 1h0m0 0h0m0 0h0m0 0h0m0 0h0m0 1h0m1-1h0m0 1h0m0-1h0m0 0h0m0 1h0m0-1h0m0 1h0m1-2h0m0 2h0m0-1h0m0 0h0m0 0h0m0 1h0m0-1h0m1 0h0m0 0h0m0 1h0m0 0h0m0 0h0m0-1h0m1 0h0m0 0h0m0 0h0m0 0h0m0 1h0m0 0h0m0 0h0m1 1h0m0-1h0m0 0h0m0-1h0m0-1h0m0 2h0m0 0h0m1 0h0m0-1h0m0 1h0m0 0h0m0-1h0m0 1h0m0-1h0m1 0h0m0 2h0m0 0h0m0 0h0m0-2h0m0 0h0m1 2h0m0-1h0m0-1h0m0 0h0m0 2h0m0-1h0m0-1h0m1 1h0m0 0h0m0 0h0m0 0h0m0 0h0m0-1h0m0 0h0m1 1h0m0 0h0m0 0h0m0 0h0m0 0h0m0 0h0m1-1h0m0 0h0m0 1h0m0 0h0m0 0h0m0-1h0m0 0h0m1 2h0m0-2h0m0 1h0m0 0h0m0-1h0m0 0h0m0 1h0m1 0h0m0 1h0m0-1h0m0 0h0m0-1h0m0 1h0m0 0h0m1 0h0m0 1h0m0-2h0m0 1h0m0 0h0m0-1h0m1 0h0m0 1h0m0 0h0m0 0h0m0-1h0m0 1h0m0 0h0m1-1h0m0 1h0m0 0h0m0 0h0m0-1h0m0 1h0m0-1h0m1 0h0m0 1h0m0 0h0m0-1h0m0 1h0m0 0h0m1 0h0m0 0h0m0-1h0m0 0h0m0 0h0m0 1h0m0 0h0m1 0h0m0-1h0m0 0h0m0-1h0m0 1h0m0 0h0m0 0h0m1 1h0m0-1h0m0 0h0m0 0h0m0 1h0m0 0h0m0-1h0m1 1h0m0-1h0m0-1h0m0 1h0m0 0h0m0 0h0m1 0h0m0 0h0m0 0h0m0 0h0m0 0h0m0 1h0m0-1h0m1 1h0m0-1h0m0 0h0m0 2h0m0-1h0m0-2h0m0 1h0m1 1h0m0-1h0m0 1h0m0-1h0m0-1h0m0 2h0m0 0h0m1 0h0m0 1h0m0-1h0m0-1h0m0 1h0m0 0h0m1 1h0m0-1h0m0-1h0m0 1h0m0-2h0m0 1h0m0 1h0m1-1h0m0 1h0m0 1h0m0-1h0m0 0h0m0-1h0m0 0h0m1 1h0m0-1h0m0 0h0m0 0h0m0 0h0m0 1h0m1 0h0m0 0h0m0 0h0m0-1h0m0 1h0m0 1h0m0-1h0m1-1h0m0 1h0m0 0h0m0-1h0m0 1h0m0 0h0m0 2h0m1-2h0m0-1h0m0 1h0m0 0h0m0-1h0m0 0h0m0 2h0m1-1h0m0 0h0m0 1h0m0-1h0m0 0h0m0 1h0m1-3h0m0 1h0m0 0h0m0 0h0m0 1h0m0 0h0m0 0h0m1 0h0m0-1h0m0 0h0m0 1h0m0-1h0m0 1h0m0-2h0m1 2h0m0-1h0m0 1h0m0 0h0m0 0h0m0-1h0m1 2h0m0-1h0m0 0h0m0 0h0m0-1h0m0 0h0m0 0h0m1 0h0m0 1h0m0 0h0m0-1h0m0 0h0m0 1h0m0-1h0m1 1h0m0 0h0m0-1h0m0 1h0m0-1h0m0 0h0m0 1h0m1 2h0m0-2h0m0 0h0m0 0h0m0 2h0m0-2h0m1 0h0m0 0h0m0-1h0m0 0h0m0 1h0m0-1h0m0 0h0m1 1h0m0 2h0m0-2h0m0 0h0m0 0h0m0 0h0m0 1h0m1-1h0m0 0h0m0 1h0m0-1h0m0 0h0m0 1h0m1-2h0m0 1h0m0 1h0m0 0h0m0-1h0m0 0h0m0 0h0m1 0h0m0 1h0m0-1h0m0 1h0m0-1h0m0 0h0m0 1h0m1 1h0m0-1h0m0-1h0m0 0h0m0 0h0m0 0h0m0 1h0m1-1h0m0 0h0m0 1h0m0 0h0m0-1h0m0 0h0m1 1h0m0 0h0m0-1h0m0 1h0m0-1h0m0 0h0m0 1h0m1-1h0m0 2h0m0-2h0m0 1h0m0 0h0m0 0h0m0 0h0m1 0h0m0-1h0m0-1h0m0 1h0m0 0h0m0 1h0m1-2h0m0 3h0m0-2h0m0 0h0m0 0h0m0 0h0m0 0h0m1 1h0m0 1h0m0-1h0m0 0h0m0-2h0m0 2h0m0-1h0m1 1h0m0-1h0m0 0h0m0 0h0m0 0h0m0 0h0m0 0h0m1-1h0m0 1h0m0 1h0m0-1h0m0-1h0m0 2h0m1-2h0m0 1h0m0 1h0m0 0h0m0-2h0m0 2h0m0-1h0m1 1h0m0 0h0m0-1h0m0-1h0m0 1h0m0 0h0m0 0h0m1 1h0m0-1h0m0 0h0m0 0h0m0 0h0m0 0h0m1 0h0m0 0h0m0 0h0m0 0h0m0 1h0m0 0h0m0-1h0m1 1h0m0-1h0m0-1h0m0 1h0m0 1h0m0-1h0m0 0h0m1 0h0m0 1h0m0-1h0m0-1h0m0 0h0m0 2h0m0-1h0m1 0h0m0-1h0m0 0h0m0 1h0m0 0h0m0 0h0m1 0h0m0 0h0m0 1h0m0-1h0m0-1h0m0 1h0m0 0h0m1 0h0m0-1h0m0 1h0m0 0h0m0 0h0m0-1h0m0 0h0m1 2h0m0 0h0m0-1h0m0-1h0m0-1h0m0 1h0m1 2h0m0-2h0m0 1h0m0 0h0m0 0h0m0 0h0m0 0h0m1 0h0m0-1h0m0 1h0m0-1h0m0 1h0m0-1h0m0 0h0m1 0h0m0 1h0m0-2h0m0 1h0m0 0h0m0 2h0m0-1h0m1 1h0m0-1h0m0 0h0m0 0h0m0 0h0m0 0h0m1 0h0m0 0h0m0 1h0m0 0h0m0-1h0m0 0h0m0 0h0m1-2h0m0 2h0m0 0h0m0 0h0m0 0h0m0 0h0m0 0h0m1 0h0m0 1h0m0-1h0m0 0h0m0 1h0m0-2h0m1 1h0m0-1h0m0 2h0m0-3h0m0 2h0m0 1h0m0-1h0m1 0h0m0 0h0m0 1h0m0-1h0m0 1h0m0-2h0m0 0h0m1 2h0m0-1h0m0 1h0m0-1h0m0 0h0m0-1h0m0 0h0m1 0h0m0 1h0m0 1h0m0-1h0m0 0h0m0 2h0m1-2h0m0 1h0m0 0h0m0-1h0m0 0h0m0 1h0m0-2h0m1 2h0m0-1h0m0 1h0m0-1h0m0 0h0m0 0h0m0-1h0m1 1h0m0 0h0m0 1h0m0-1h0m0 1h0m0-1h0m0 0h0m1 0h0m0 0h0m0 1h0m0-1h0m0-1h0m0 2h0m1-1h0m0 1h0m0-1h0m0-1h0m0 0h0m0 2h0m0 0h0m1 0h0m0-2h0m0 1h0m0 0h0m0 1h0m0-1h0m0 0h0m1 0h0m0 2h0m0-2h0m0 1h0m0 0h0m0-2h0m1 0h0m0 2h0m0-1h0m0 0h0m0-1h0m0 1h0m0 1h0m1-1h0m0 1h0m0 0h0m0 0h0m0 0h0m0 0h0m0-2h0m1 2h0m0 0h0m0-1h0m0 2h0m0-2h0m0 0h0m0-1h0m1 2h0m0-1h0m0-1h0m0 1h0m0 1h0m0-1h0m1 0h0m0-1h0m0 1h0m0 0h0m0 0h0m0 1h0m0-1h0m1 1h0m0-2h0m0 0h0m0 1h0m0 0h0m0 0h0m0-1h0m1 1h0m0-1h0m0 1h0m0 1h0m0-2h0m0 0h0m1 1h0m0 0h0m0 0h0m0 0h0m0 1h0m0-2h0m0 3h0m1-2h0m0 0h0m0-1h0m0 2h0m0-1h0m0 0h0m0 0h0m1 0h0m0 0h0m0-1h0m0 1h0m0 0h0m0 0h0m0 1h0m1-2h0m0 1h0m0 0h0m0 0h0m0 0h0m0 0h0m1 0h0m0-1h0m0 1h0m0 2h0m0-2h0m0 0h0m0 0h0m1 0h0m0-1h0m0 1h0m0-1h0m0 2h0m0 0h0m0-1h0m1 1h0m0-1h0m0 1h0m0 0h0m0-2h0m0 1h0m1 0h0m0 0h0m0 0h0m0 0h0m0-1h0m0 1h0m0-1h0m1 0h0m0 1h0m0 1h0m0-1h0m0 0h0m0-1h0m0 1h0m1 0h0m0 0h0m0 0h0m0 0h0m0 0h0m0 0h0m0 0h0m1 0h0m0 0h0m0 0h0m0 0h0m0 0h0m0 1h0m1-1h0m0-1h0m0 0h0m0 1h0m0 0h0m0 0h0m0 1h0m1 0h0m0-2h0m0 1h0m0-1h0m0 1h0m0-1h0m0 0h0m1 1h0m0-2h0m0 2h0m0 1h0m0-1h0m0 0h0m1 0h0m0 0h0m0 1h0m0-2h0m0 2h0m0-2h0m0 0h0m1 1h0m0 0h0m0 0h0m0-1h0m0 2h0m0-1h0m0-1h0m1 0h0m0 2h0m0 0h0m0-1h0m0 1h0m0 0h0m0 0h0m1-1h0m0 1h0m0 0h0m0 0h0m0-1h0m0 1h0m1-2h0m0 2h0m0-1h0m0 0h0m0 1h0m0-1h0m0 0h0m1 1h0m0 0h0m0 0h0m0-1h0m0 0h0m0 0h0m0 0h0m1 1h0m0 1h0m0-1h0m0 0h0m0-1h0m0 0h0m1-1h0m0 1h0m0 0h0m0 1h0m0-1h0m0 1h0m0 0h0m1-1h0m0 2h0m0-2h0m0 1h0m0-2h0m0 1h0m0 0h0m1 0h0m0 1h0m0 0h0m0 1h0m0-1h0m0 0h0m0-2h0m1 1h0m0 0h0m0 1h0m0 0h0m0 0h0m0 0h0m1-1h0m0 1h0m0-1h0m0-1h0m0 1h0m0 0h0m0 1h0m1-1h0m0 0h0m0 0h0m0 0h0m0 0h0m0 0h0m0 1h0m1 0h0m0 0h0m0 1h0m0-2h0m0 1h0m0 0h0m1 0h0m0 0h0m0 0h0m0 0h0m0-1h0m0 0h0m0 0h0m1 0h0m0 1h0m0-1h0m0 1h0m0 0h0m0-1h0m0 1h0m1-1h0m0 0h0m0 0h0m0 0h0m0 0h0m0 0h0m0 0h0m1 1h0m0 0h0m0-1h0m0 0h0m0 1h0m0 0h0m1-1h0m0 0h0m0 0h0m0 0h0m0-1h0m0 1h0m0 0h0m1 0h0m0 0h0m0 0h0m0 1h0m0-1h0m0 1h0m0-1h0m1 0h0m0 1h0m0-1h0m0 0h0m0 0h0m0-1h0m1 1h0m0 1h0m0-1h0m0-1h0m0 1h0m0 0h0m0 0h0m1 0h0m0 0h0m0 1h0m0-1h0m0 0h0m0 0h0m0 0h0m1 0h0m0 0h0m0 0h0m0 0h0m0 0h0m0 1h0m0-1h0m1 0h0m0 1h0m0 0h0m0-1h0m0 0h0m0-1h0m1 1h0m0 0h0m0-1h0m0 1h0m0 0h0m0-1h0m0 1h0m1 0h0m0 1h0m0-1h0m0 0h0m0 1h0m0 0h0m0 0h0m1-2h0m0 1h0m0 0h0m0 0h0m0 0h0m0 0h0m0 1h0m1-1h0m0 0h0m0 1h0m0-1h0m0 0h0m0 0h0m1 0h0m0 1h0m0-1h0m0 0h0m0 1h0m0-2h0m0 1h0m1 1h0m0-1h0m0 0h0m0 0h0m0 0h0m0-1h0m0 0h0m1 2h0m0-1h0m0 0h0m0 1h0m0-1h0m0 0h0m1 0h0m0 1h0m0-1h0m0 0h0m0 0h0m0-1h0m0 0h0m1 2h0m0 0h0m0-1h0m0-1h0m0 1h0m0 0h0m0 0h0m1 1h0m0-1h0m0 0h0m0-1h0m0 1h0m0 0h0m0 0h0m1-1h0m0 1h0m0 0h0m0 1h0m0-2h0m0 1h0m1 0h0m0 1h0m0 0h0m0-1h0m0 0h0m0-1h0m0 1h0m1 0h0m0 0h0m0 0h0m0 0h0m0-1h0m0 1h0m0 1h0m1 0h0m0-1h0m0 0h0m0 0h0m0 0h0m0 1h0m1 0h0m0-1h0m0 0h0m0-1h0m0 1h0m0 0h0m0 1h0m1-1h0m0 1h0m0-1h0m0 1h0m0 0h0m0 0h0m0-1h0m1 0h0m0 1h0m0-1h0m0 0h0m0 1h0m0-1h0m0 0h0m1 1h0m0 0h0m0 0h0m0 0h0m0-1h0m0 0h0m1 0h0m0 0h0m0 1h0m0 0h0m0-1h0m0 1h0m0-1h0m1 1h0m0 0h0m0-1h0m0 1h0m0 0h0m0 0h0m0-1h0m1 1h0m0 0h0m0 0h0m0-2h0m0 2h0m0 1h0m1-1h0m0 0h0m0-1h0m0 1h0m0-1h0m0 0h0m0 0h0m1 1h0m0 0h0m0-2h0m0 2h0m0-2h0m0 1h0m0 0h0m1 0h0m0 0h0m0 0h0m0 2h0m0-2h0m0 1h0m0-1h0m1 1h0m0 0h0m0 0h0m0-1h0m0 0h0m0 1h0m1-1h0m0-1h0m0 2h0m0-1h0m0 1h0m0-1h0m0 0h0m1 1h0m0-1h0m0 1h0m0-1h0m0 0h0m0-1h0m0 2h0m1-1h0m0 1h0m0-1h0m0 0h0m0-1h0m0 1h0m1-1h0m0 1h0m0 0h0m0-1h0m0 2h0m0 0h0m0 0h0m1 0h0m0-1h0m0 0h0m0 0h0m0 1h0m0-2h0m0 1h0m1-1h0m0 0h0m0 1h0m0 1h0m0-1h0m0-1h0m0 0h0m1 1h0m0 0h0m0 0h0m0-1h0m0 2h0m0 0h0m1-1h0m0 0h0m0 1h0m0-1h0m0 0h0m0-1h0m0 1h0m1 0h0m0 0h0m0 0h0m0-1h0m0 0h0m0 1h0m0 0h0m1-1h0m0-1h0m0 0h0m0 1h0m0 1h0m0-1h0m1 0h0m0 0h0m0 0h0m0 1h0m0 0h0m0-1h0m0 1h0m1 1h0m0-2h0m0 0h0m0-1h0m0 1h0m0 2h0m0-2h0m1 0h0m0 2h0m0-2h0m0 1h0m0 0h0m0-1h0m0 0h0m1 0h0m0 0h0m0 0h0m0 1h0m0 0h0m0 0h0m1 0h0m0 0h0m0 0h0m0-1h0m0 0h0m0 1h0m0 0h0m1 0h0m0-1h0m0 1h0m0 0h0m0-1h0m0 1h0m0 0h0m1 0h0m0 0h0m0 0h0m0 0h0m0-1h0m0 1h0m1 1h0m0-1h0m0 0h0m0-2h0m0 2h0m0 0h0m0 0h0m1-1h0m0 1h0m0-1h0m0 1h0m0-1h0m0 1h0m0-1h0m1 1h0m0 1h0m0-1h0m0 0h0m0 2h0m0-2h0m0 0h0m1-1h0m0 3h0m0-2h0m0 0h0m0 1h0m0 0h0m1 0h0m0-1h0m0 0h0m0 0h0m0 0h0m0 0h0m0 1h0m1-1h0m0-1h0m0 3h0m0-2h0m0 0h0m0 0h0m0 1h0m1-1h0m0 0h0m0 2h0m0-1h0m0 1h0m0-1h0m0 0h0m1 0h0m0-1h0m0 1h0m0-1h0m0 0h0m0 0h0m1 1h0m0-1h0m0 1h0m0 1h0m0-2h0m0 1h0m0 0h0m1 0h0m0 0h0m0-1h0m0 0h0m0 0h0m0 1h0m0 0h0m1 0h0m0 0h0m0 0h0m0 0h0m0 0h0m0 0h0m1 0h0m0 1h0m0-1h0m0 0h0m0-1h0m0 0h0m0 1h0m1 0h0m0-1h0m0 1h0m0 1h0m0-1h0m0-1h0m0 1h0m1 1h0m0-1h0m0-1h0m0 2h0m0-1h0m0-1h0m0 1h0m1-1h0m0 2h0m0-1h0m0-1h0m0 2h0m0 0h0m1-2h0m0 2h0m0 0h0m0-2h0m0 0h0m0 0h0m0-1h0m1 1h0m0-1h0m0 1h0m0 0h0m0 0h0m0 0h0m0 1h0m1-2h0m0 1h0m0 0h0m0 1h0m0 1h0m0-2h0m1 0h0m0 1h0m0 0h0m0 0h0m0-1h0m0 1h0m0-1h0m1 0h0m0 0h0m0 1h0m0 0h0m0 0h0m0-1h0m0-1h0m1 1h0m0 0h0m0 0h0m0 2h0m0 0h0m0-2h0m0 2h0m1-2h0m0-1h0m0 1h0m0 0h0m0 0h0m0 0h0m1 0h0m0 0h0m0 0h0m0 0h0m0 0h0m0-1h0m0 1h0m1 0h0m0 1h0m0 0h0m0 0h0m0-2h0m0 0h0m0 1h0m1-1h0m0 0h0m0 2h0m0 0h0m0-1h0m0-1h0m1 2h0m0-1h0m0 1h0m0-1h0m0-1h0m0 1h0m0 1h0m1 0h0m0 0h0m0-1h0m0 1h0m0-1h0m0 0h0m0 0h0m1 0h0m0 0h0m0 1h0m0-1h0m0 0h0m0 1h0m0 0h0m1-1h0m0 2h0m0-1h0m0-1h0m0 0h0m0 1h0m1-1h0m0-1h0m0 1h0m0 0h0m0 1h0m0-1h0m0 1h0m1-1h0m0 0h0m0 1h0m0 0h0m0-1h0m0 0h0m0 0h0m1 0h0m0 1h0m0-1h0m0 0h0m0 0h0m0 0h0m1 0h0m0 0h0m0-1h0m0 2h0m0-1h0m0 0h0m0 1h0m1-1h0m0 0h0m0-1h0m0 1h0m0 0h0m0-1h0m0 0h0m1 0h0m0 2h0m0 0h0m0 0h0m0-1h0m0 1h0m0 0h0m1 0h0m0-1h0m0 0h0m0 0h0m0-1h0m0 1h0m1 0h0m0 0h0m0 0h0m0 1h0m0-1h0m0 0h0m0 0h0m1 1h0m0 0h0m0 0h0m0-1h0m0 0h0m0 0h0m0 0h0m1 1h0m0-1h0m0 1h0m0-2h0m0 0h0m0 1h0m1 1h0m0 0h0m0-1h0m0 1h0m0-2h0m0 1h0m0-1h0m1 1h0m0-1h0m0 0h0m0 1h0m0-1h0m0 0h0m0 1h0m1 1h0m0-2h0m0 2h0m0-1h0m0 0h0m0 0h0m0 0h0m1-1h0m0 1h0m0 0h0m0 0h0m0 0h0m0 0h0m1 0h0m0 0h0m0 0h0m0-1h0m0 0h0m0 0h0m0-1h0m1 1h0m0 1h0m0 1h0m0 0h0m0-1h0m0 0h0m0 0h0m1-2h0m0 1h0m0 1h0m0-1h0m0 1h0m0 0h0m1 0h0m0 0h0m0 0h0m0 1h0m0-1h0m0 0h0m0 0h0m1 0h0m0-1h0m0 1h0m0 0h0m0 0h0m0 1h0m0-1h0m1 0h0m0 2h0m0-2h0m0 0h0m0-1h0m0 2h0m0 0h0m1 0h0m0 0h0m0-2h0m0 0h0m0 2h0m0-2h0m1 1h0m0 0h0m0 1h0m0-2h0m0 1h0m0-1h0m0 1h0m1 0h0m0 2h0m0-2h0m0 1h0m0-1h0m0 0h0m0-1h0m1 2h0m0-1h0m0 0h0m0 0h0m0 0h0m0 1h0m1-1h0m0-1h0m0 1h0m0 0h0m0 0h0m0 1h0m0-2h0m1 0h0m0 1h0m0-1h0m0 0h0m0 1h0m0 0h0m0 1h0m1-2h0m0 2h0m0-1h0m0 1h0m0-2h0m0 0h0m0 1h0m1-1h0m0 1h0m0-1h0m0 1h0m0 0h0m0 0h0m1-1h0m0 1h0m0 1h0m0 0h0m0 0h0m0-2h0m0 0h0m1 0h0m0 1h0m0 1h0m0-1h0m0 1h0m0-1h0m0 0h0m1-1h0m0-1h0m0 2h0m0-1h0m0 1h0m0 1h0m0-2h0m1 1h0m0-1h0m0 0h0m0 0h0m0 1h0m0 0h0m1 0h0m0 0h0m0 0h0m0 1h0m0 0h0m0-1h0m0-1h0m1 1h0m0-1h0m0 1h0m0 1h0m0-2h0m0 1h0m0-1h0m1 1h0m0 0h0m0 0h0m0 0h0m0 0h0m0 1h0m1-1h0m0 1h0m0-1h0m0 0h0m0-1h0m0 1h0m0 1h0m1-1h0m0 0h0m0-1h0m0 1h0m0 1h0m0-1h0m0 1h0m1 0h0m0-1h0m0 0h0m0 0h0m0 0h0m0 1h0m0-2h0m1 1h0m0 0h0m0 1h0m0-1h0m0 0h0m0-1h0m1 1h0m0 0h0m0 0h0m0-1h0m0 0h0m0 1h0m0 1h0m1-2h0m0 1h0m0-1h0m0 1h0m0 0h0m0 0h0m0 0h0m1 0h0m0-1h0m0 0h0m0 1h0m0 0h0m0 0h0m1 0h0m0 1h0m0-2h0m0 0h0m0 1h0m0 0h0m0-1h0m1 2h0m0-2h0m0 1h0m0 0h0m0 0h0m0 1h0m0-2h0m1 1h0m0 0h0m0-1h0m0 2h0m0 0h0m0-1h0m0 1h0m1-2h0m0 2h0m0-2h0m0 1h0m0 0h0m0 0h0m1 0h0m0 0h0m0-1h0m0 1h0m0 0h0m0 0h0m0-1h0m1 1h0m0 1h0m0 0h0m0-1h0m0 1h0m0-1h0m0 1h0m1-1h0m0 0h0m0 0h0m0 0h0m0 1h0m0 0h0m1-1h0m0 1h0m0-1h0m0 0h0m0 1h0m0-1h0m0 0h0m1-1h0m0 1h0m0 0h0m0 0h0m0 0h0m0 0h0m0 1h0m1-2h0m0 1h0m0 0h0m0 1h0m0-2h0m0 1h0m0 0h0m1 0h0m0 0h0m0 0h0m0 0h0m0 0h0m0 0h0m1 0h0m0 0h0m0-1h0m0 1h0m0 0h0m0 0h0m0-2h0m1 3h0m0 0h0m0 0h0m0 0h0m0-2h0m0 1h0m0-1h0m1 1h0m0 0h0m0 0h0m0 0h0m0-1h0m0 2h0m1 0h0m0-1h0m0 0h0m0 0h0m0 0h0m0 0h0m0 0h0m1 1h0m0 0h0m0-1h0m0 0h0m0 0h0m0-1h0m0 1h0m1 0h0m0 0h0m0-1h0m0 2h0m0-2h0m0 1h0m0 0h0m1 0h0m0 1h0m0-1h0m0 0h0m0 0h0m0-1h0m1 1h0m0 0h0m0 0h0m0 1h0m0-1h0m0 0h0m0 1h0m1-1h0m0 0h0m0-1h0m0 1h0m0 1h0m0 0h0m0-1h0m1 1h0m0-1h0m0 0h0m0 0h0m0 1h0m0-1h0m1 0h0m0 1h0m0-1h0m0 0h0m0 1h0m0-1h0m0 0h0m1 1h0m0 0h0m0 0h0m0-1h0m0 0h0m0 1h0m0-1h0m1 1h0m0 0h0m0-1h0m0 1h0m0 1h0m0-2h0m0 2h0m1-1h0m0 0h0m0-1h0m0 0h0m0 0h0m0 1h0m1 0h0m0-1h0m0 0h0m0 1h0m0-1h0m0 1h0m0-1h0m1 0h0m0-1h0m0 2h0m0 0h0m0 0h0m0 1h0m0-1h0m1 0h0m0-1h0m0 0h0m0 0h0m0 1h0m0 0h0m1-1h0m0 1h0m0 0h0m0-2h0m0 0h0m0 1h0m0 1h0m1-1h0m0 1h0m0 0h0m0 1h0m0-2h0m0 0h0m0 0h0m1 0h0m0 1h0m0-1h0m0 1h0m0-1h0m0 0h0m0 1h0m1-1h0m0 0h0m0 1h0m0-1h0m0 0h0m0 1h0m1-1h0m0 0h0m0 1h0m0-1h0m0 0h0m0 1h0m0-2h0m1 2h0m0-1h0m0 1h0m0-1h0m0 1h0m0-2h0m0 1h0m1 1h0m0-1h0m0 1h0m0 0h0m0-1h0m0-1h0m1 2h0m0-1h0m0 1h0m0-1h0m0 0h0m0 0h0m0-1h0m1 2h0m0 0h0m0-1h0m0 1h0m0-1h0m0 0h0m0 1h0m1-1h0m0 1h0m0-1h0m0 1h0m0-1h0m0 0h0m0 1h0m1-2h0m0 1h0m0 0h0m0 0h0m0 0h0m0-2h0m1 3h0m0-1h0m0 0h0m0 0h0m0-1h0m0 1h0m0 0h0m1 0h0m0 0h0m0 0h0m0 1h0m0-1h0m0 1h0m0-1h0m1 0h0m0 1h0m0-1h0m0 0h0m0 1h0m0 0h0m0-2h0m1 1h0m0-1h0m0 1h0m0 2h0m0-2h0m0 0h0m1 0h0m0 0h0m0 0h0m0 0h0m0 0h0m0 1h0m0-1h0m1-1h0m0 2h0m0-1h0m0 1h0m0-1h0m0 0h0m0-1h0m1 1h0m0 1h0m0-1h0m0 0h0m0 1h0m0 0h0m1-1h0m0 1h0m0-1h0m0 1h0m0 0h0m0-1h0m0 1h0m1-2h0m0 1h0m0 0h0m0 0h0m0 0h0m0 1h0m0-1h0m1 0h0m0 1h0m0 0h0m0 0h0m0-1h0m0-1h0m0 2h0m1 0h0m0-1h0m0 0h0m0-1h0m0 2h0m0-1h0m1 1h0m0 0h0m0 0h0m0 0h0m0 0h0m0-1h0m0 1h0m1 0h0m0-1h0m0 1h0m0-1h0m0-1h0m0 1h0m0-1h0m1 2h0m0-1h0m0 1h0m0-1h0m0 0h0m0 0h0m1 0h0m0 0h0m0 0h0m0 0h0m0-1h0m0 2h0m0-2h0m1 1h0m0 0h0m0 0h0m0 0h0m0 1h0m0-1h0m0 1h0m1 1h0m0-2h0m0 0h0m0 0h0m0 0h0m0 1h0m0 1h0m1-2h0m0 1h0m0-1h0m0 1h0m0-1h0m0 1h0m1 0h0m0-1h0m0 1h0m0-1h0m0 0h0m0 0h0m0 0h0m1 1h0m0 0h0m0 0h0m0-1h0m0 1h0m0-1h0m0-1h0m1 2h0m0-1h0m0 1h0m0 0h0m0-2h0m0 1h0m1 1h0m0-1h0m0 1h0m0-1h0m0-1h0m0 1h0m0 1h0m1-1h0m0 0h0m0 2h0m0-2h0m0 2h0m0-1h0m0-1h0m1-1h0m0 2h0m0-1h0m0 0h0m0 0h0m0 0h0m0 0h0m1 0h0m0 0h0m0 0h0m0 0h0m0 1h0m0-2h0m1 1h0m0 1h0m0-1h0m0 1h0m0-1h0m0 0h0m0 0h0m1 0h0m0 0h0m0 1h0m0-1h0m0 1h0m0-1h0m0-1h0m1 1h0m0 0h0m0 1h0m0-1h0m0 1h0m0 0h0m1-1h0m0 1h0m0-1h0m0 0h0m0-1h0m0 2h0m0-2h0m1 1h0m0 1h0m0-1h0m0 0h0m0 0h0m0 0h0m0 0h0m1 0h0m0 1h0m0 0h0m0-2h0m0 1h0m0 0h0m0-1h0m1 1h0m0-1h0m0 1h0m0 1h0m0 0h0m0-2h0m1 1h0m0 0h0m0 0h0m0 1h0m0 0h0m0-1h0m0 0h0m1 1h0m0 0h0m0-1h0m0 0h0m0 0h0m0 0h0m0 0h0m1 1h0m0-1h0m0 0h0m0 0h0m0 1h0m0-1h0m1 1h0m0-1h0m0 0h0m0 1h0m0-1h0m0 0h0m0-1h0m1 0h0m0 1h0m0-1h0m0 1h0m0 0h0m0 0h0m0 0h0m1 0h0m0 0h0m0 0h0m0 0h0m0 0h0m0 1h0m0-1h0m1 0h0m0 0h0m0-1h0m0 1h0m0 1h0m0-1h0m1 0h0m0 0h0m0 0h0m0 0h0m0 0h0m0 0h0m0 0h0m1-1h0m0 1h0m0-1h0m0 0h0m0 2h0m0 0h0m0-1h0m1 0h0m0 0h0m0 1h0m0-2h0m0 1h0m0 0h0m1 0h0m0 0h0m0 1h0m0-2h0m0 1h0m0 0h0m0 1h0m1-1h0m0 0h0m0-1h0m0 0h0m0 0h0m0 2h0m0-1h0m1 0h0m0-2h0m0 3h0m0 0h0m0-1h0m0 0h0m0-1h0m1 1h0m0 0h0m0 0h0m0-1h0m0 1h0m0 0h0m1 0h0m0 0h0m0 0h0m0 0h0m0 0h0m0 1h0m0-1h0m1 0h0m0 0h0m0 1h0m0 0h0m0-1h0m0 0h0m0 1h0m1-2h0m0 1h0m0 0h0m0 0h0m0 0h0m0 0h0m1-1h0m0 1h0m0 0h0m0 0h0m0 0h0m0-1h0m0 1h0m1-1h0m0 1h0m0 0h0m0-1h0m0 1h0m0 0h0m0-2h0m1 2h0m0 0h0m0-1h0m0 2h0m0-1h0m0-1h0m0 0h0m1 1h0m0-1h0m0 0h0m0 1h0m0 0h0m0 1h0m1-1h0m0 0h0m0 0h0m0-1h0m0 1h0m0 0h0m0 1h0m1 0h0m0-1h0m0 1h0m0-1h0m0 1h0m0 0h0m0-1h0m1-1h0m0 1h0m0 0h0m0-1h0m0 1h0m0 0h0m0 0h0m1 0h0m0 0h0m0 0h0m0 0h0m0 0h0m0 0h0m1 1h0m0-2h0m0 2h0m0-1h0m0-1h0m0 1h0m0 0h0m1 0h0m0 1h0m0-2h0m0 0h0m0 1h0m0 0h0m0 0h0m1 1h0m0 0h0m0-2h0m0 0h0m0 0h0m0 2h0m1 0h0m0 0h0m0 0h0m0-2h0m0 1h0m0 1h0m0-2h0m1 2h0m0 0h0m0-1h0m0-1h0m0 3h0m0-3h0m0 0h0m1 0h0m0 1h0m0 0h0m0 1h0m0-1h0m0 0h0m0 0h0m1 1h0m0-1h0m0-1h0m0 1h0m0-1h0m0 1h0m1 0h0m0 0h0m0 0h0m0-1h0m0 1h0m0 0h0m0-1h0m1 1h0m0 0h0m0 1h0m0-1h0m0-1h0m0 1h0m0 0h0m1 0h0m0 0h0m0-1h0m0-1h0m0 2h0m0 0h0m1 0h0m0 0h0m0-1h0m0 1h0m0 0h0m0 0h0m0 0h0m1-1h0m0 0h0m0 0h0m0 1h0m0-1h0m0 0h0m0 0h0m1 1h0m0-2h0m0 1h0m0 1h0m0 0h0m0 0h0m0 0h0m1 0h0m0-1h0m0 1h0m0-1h0m0 1h0m0 0h0m1 0h0m0 0h0m0-1h0m0 1h0m0-2h0m0 1h0m0 1h0m1 0h0m0-1h0m0 1h0m0-1h0m0 0h0m0 0h0m0 1h0m1 0h0m0 0h0m0 0h0m0-1h0m0 1h0m0 0h0m1 0h0m0-1h0m0 1h0m0 0h0m0-1h0m0-1h0m0 1h0m1 1h0m0-1h0m0 1h0m0-1h0m0 1h0m0 0h0m0 0h0m1 0h0m0 0h0m0 0h0m0 0h0m0-1h0m0 1h0m0 0h0m1 0h0m0 0h0m0 1h0m0-1h0m0-1h0m0 2h0m1-2h0m0 1h0m0 1h0m0 0h0m0-2h0m0 1h0m0 0h0m1-1h0m0 1h0m0-1h0m0 0h0m0 1h0m0-1h0m0 0h0m1 0h0m0 1h0m0 0h0m0 0h0m0 0h0m0 0h0m1 0h0m0-1h0m0 1h0m0 0h0m0-1h0m0 2h0m0-1h0m1 0h0m0 1h0m0-1h0m0 0h0m0 1h0m0 0h0m0 0h0m1-2h0m0 1h0m0 1h0m0 0h0m0 0h0m0-1h0m0 0h0m1 1h0m0 0h0m0 0h0m0-1h0m0 0h0m0 0h0m1 0h0m0 0h0m0 0h0m0 0h0m0 0h0m0 0h0m0 0h0m1-1h0m0 1h0m0 0h0m0 0h0m0 0h0m0 0h0m0 0h0m1 0h0m0 0h0m0 1h0m0 0h0m0-2h0m0 1h0m1 0h0m0-2h0m0 1h0m0 3h0m0-1h0m0-2h0m0 2h0m1-1h0m0 0h0m0 0h0m0 0h0m0 0h0m0 0h0m0 0h0m1 0h0m0 0h0m0 2h0m0-3h0m0 2h0m0-1h0m0 0h0m1 0h0m0 0h0m0 0h0m0 0h0m0-1h0m0 0h0m1 1h0m0 0h0m0 1h0m0 0h0m0-2h0m0 1h0m0 0h0m1 0h0m0 1h0m0-1h0m0 1h0m0-2h0m0 0h0m0 2h0m1-1h0m0-1h0m0 1h0m0 0h0m0-1h0m0 1h0m1 0h0m0 0h0m0 1h0m0 0h0m0-1h0m0 0h0m0 1h0m1-1h0m0-1h0m0 0h0m0 2h0m0-1h0m0 1h0m0 0h0m1-1h0m0-1h0m0 2h0m0 0h0m0-1h0m0 1h0m0-1h0m1 0h0m0 0h0m0 0h0m0 0h0m0 0h0m0 0h0m1 0h0m0 0h0m0 0h0m0 0h0m0 1h0m0-1h0m0 1h0m1-1h0m0 1h0m0-1h0m0-1h0m0 0h0m0 1h0m0-1h0m1 2h0m0-1h0m0-1h0m0 1h0m0-1h0m0 1h0m1 0h0m0 0h0m0 1h0m0-1h0m0 1h0m0-1h0m0 0h0m1-1h0m0 1h0m0 0h0m0-1h0m0 1h0m0 0h0m0 0h0m1 0h0m0-1h0m0 1h0m0 0h0m0-1h0m0 3h0m0-3h0m1 1h0m0 0h0m0-1h0m0 1h0m0 1h0m0-2h0m1 1h0m0 0h0m0-1h0m0 2h0m0-3h0m0 1h0m0 1h0m1 0h0m0 0h0m0-1h0m0 1h0m0 1h0m0-2h0m0 3h0m1-1h0m0-1h0m0 0h0m0 1h0m0-1h0m0 0h0m0 0h0m1 0h0m0 0h0m0 0h0m0 2h0m0-2h0m0 0h0m1 0h0m0-1h0m0 1h0m0 0h0m0 0h0m0 0h0m0 0h0m1 0h0m0 1h0m0 0h0m0-1h0m0 1h0m0-1h0m0 1h0m1 0h0m0-1h0m0 2h0m0-1h0m0-1h0m0 0h0m1 2h0m0-1h0m0-1h0m0 1h0m0-1h0m0 0h0m0 1h0m1 0h0m0-1h0m0 0h0m0 1h0m0 0h0m0 0h0m0 0h0m1 1h0m0-2h0m0 1h0m0 0h0m0 0h0m0 0h0m0 0h0m1-1h0m0 2h0m0-1h0m0-1h0m0 0h0m0-1h0m1 2h0m0 0h0m0-1h0m0 1h0m0-1h0m0 0h0m0 1h0m1 0h0m0 0h0m0 0h0m0-1h0m0-1h0m0 1h0m0 0h0m1 0h0m0 0h0m0 0h0m0-1h0m0 0h0m0 0h0m1 2h0m0-2h0m0 1h0m0 0h0m0 0h0m0-1h0m0 0h0m1 1h0m0-1h0m0 1h0m0-1h0m0 1h0m0 0h0m0 0h0m1 1h0m0 0h0m0-1h0m0 0h0m0 0h0m0-2h0m0 1h0m1 1h0m0 0h0m0 0h0m0-1h0m0 0h0m0 1h0m1-2h0m0 3h0m0-2h0m0 1h0m0 0h0m0 1h0m0-2h0m1 1h0m0 0h0m0-1h0m0 1h0m0 0h0m0 0h0m0-1h0m1 2h0m0-2h0m0 0h0m0 0h0m0 2h0m0-2h0m1 1h0m0 0h0m0 0h0m0 0h0m0 1h0m0-1h0m0-1h0m1 1h0m0 1h0m0-2h0m0 0h0m0 1h0m0 0h0m0-1h0m1 1h0m0-1h0m0 0h0m0-1h0m0 2h0m0-1h0m0 1h0m1-1h0m0 1h0m0-1h0m0 1h0m0 0h0m0-1h0m1 0h0m0 1h0m0 0h0m0-1h0m0 1h0m0 0h0m0 0h0m1 0h0m0-1h0m0 0h0m0 0h0m0 0h0m0 1h0m0 0h0m1-1h0m0 1h0m0 0h0m0 0h0m0 0h0m0-1h0m1 0h0m0 0h0m0 0h0m0 0h0m0 0h0m0 2h0m0-1h0m1 0h0m0-1h0m0 2h0m0-1h0m0-1h0m0 0h0m0 0h0m1 1h0m0-1h0m0 2h0m0-2h0m0 1h0m0 0h0m0-1h0m1 1h0m0 0h0m0-1h0m0 1h0m0 0h0m0 1h0m1 0h0m0-2h0m0 1h0m0 0h0m0 0h0m0 0h0m0 0h0m1 0h0m0 0h0m0-1h0m0 1h0m0-1h0m0 2h0m0-1h0m1 0h0m0 1h0m0-1h0m0 0h0m0-1h0m0 1h0m1 0h0m0-1h0m0 2h0m0-1h0m0 0h0m0 0h0m0 1h0m1 0h0m0-1h0m0-1h0m0 1h0m0 0h0m0 0h0m0 0h0m1-1h0m0 2h0m0-1h0m0 1h0m0 0h0m0-1h0m0-1h0m1 1h0m0 0h0m0 0h0m0-1h0m0 0h0m0 1h0m1 0h0m0 0h0m0 0h0m0 1h0m0-1h0m0 1h0m0-1h0m1-1h0m0 1h0m0 0h0m0 1h0m0-1h0m0 0h0m0 0h0m1 0h0m0 0h0m0 2h0m0-1h0m0 0h0m0 0h0m1-1h0m0-1h0m0 2h0m0 0h0m0-1h0m0 0h0m0 0h0m1 0h0m0 0h0m0-1h0m0 0h0m0 2h0m0-1h0m0 1h0m1-1h0m0 0h0m0-1h0m0 1h0m0 0h0m0 0h0m0 1h0m1-1h0m0 0h0m0-1h0m0 1h0m0-1h0m0 0h0m1 0h0m0 0h0m0 0h0m0 1h0m0-1h0m0 2h0m0-2h0m1 2h0m0-1h0m0 0h0m0 0h0m0 0h0m0 0h0m0 0h0m1 0h0m0-1h0m0 0h0m0 0h0m0 1h0m0 0h0m0-1h0m1 1h0m0-1h0m0 3h0m0-3h0m0 1h0m0 0h0m1-1h0m0 2h0m0-1h0m0 1h0m0 0h0m0-1h0m0 0h0m1-1h0m0 2h0m0-1h0m0 0h0m0 1h0m0-1h0m0 0h0m1 0h0m0 0h0m0 1h0m0-1h0m0 0h0m0 0h0m1 0h0m0 0h0m0 0h0m0 0h0m0-1h0m0 1h0m0 0h0m1 1h0m0-2h0m0 0h0m0 1h0m0 0h0m0 1h0m0 0h0m1-1h0m0-1h0m0 1h0m0 0h0m0 1h0m0-1h0m0-1h0m1 1h0m0-1h0m0 1h0m0 1h0m0-1h0m0 0h0m1 0h0m0 0h0m0 0h0m0-1h0m0 2h0m0-1h0m0 1h0m1-1h0m0 0h0m0 0h0m0 0h0m0 0h0m0 0h0m0-1h0m1 2h0m0-1h0m0-1h0m0 1h0m0 0h0m0-2h0m1 1h0m0 2h0m0-2h0m0 1h0m0 1h0m0-2h0m0 1h0m1-1h0m0 1h0m0 0h0m0-1h0m0 1h0m0 0h0m0-1h0m1 1h0m0-1h0m0 3h0m0-3h0m0 1h0m0-2h0m0 1h0m1 2h0m0-2h0m0 1h0m0-1h0m0 1h0m0-1h0m1 1h0m0 0h0m0-1h0m0 1h0m0-1h0m0 1h0m0 0h0m1-1h0m0 0h0m0 1h0m0 0h0m0-1h0m0 0h0m0 0h0m1 0h0m0 0h0m0 1h0m0 0h0m0 1h0m0-1h0m1 0h0m0 0h0m0 0h0m0 0h0m0-1h0m0 0h0m0 0h0m1 0h0m0 1h0m0 0h0m0 1h0m0-1h0m0-1h0m0 0h0m1 0h0m0 0h0m0 0h0m0 1h0m0-1h0m0 2h0m0-2h0m1 1h0m0 1h0m0-1h0m0 0h0m0 0h0m0 1h0m1-1h0m0 0h0m0 1h0m0 0h0m0 0h0m0-2h0m0 1h0m1 0h0m0-1h0m0 0h0m0 1h0m0 0h0m0 0h0m0 1h0m1-1h0m0 1h0m0-1h0m0 1h0m0 0h0m0-1h0m1-1h0m0 1h0m0 1h0m0-1h0m0 1h0m0-2h0m0 1h0m1-1h0m0 1h0m0 1h0m0 0h0m0 0h0m0 0h0m0-1h0m1 1h0m0-2h0m0 1h0m0 0h0m0 1h0m0 0h0m0-1h0m1 1h0m0-1h0m0 0h0m0 0h0m0 0h0m0 1h0m1 0h0m0 0h0m0-1h0m0 1h0m0-1h0m0-1h0m0 1h0m1 0h0m0 1h0m0-2h0m0 1h0m0-1h0m0 1h0m0-1h0m1 1h0m0 0h0m0 0h0m0 0h0m0 0h0m0 0h0m1 0h0m0 0h0m0-1h0m0 1h0m0 0h0m0 0h0m0 0h0m1-1h0m0 0h0m0 1h0m0 1h0m0-2h0m0 1h0m0 0h0m1-1h0m0 0h0m0 2h0m0-1h0m0 0h0m0 0h0m0 0h0m1-1h0m0 2h0m0-1h0m0 0h0m0-1h0m0 2h0m1-1h0m0-1h0m0 0h0m0 1h0m0 0h0m0 0h0m0-1h0m1 1h0m0 0h0m0 0h0m0 1h0m0 0h0m0-1h0m0-1h0m1 0h0m0 1h0m0 0h0m0 0h0m0-1h0m0 1h0m1 0h0m0 0h0m0 1h0m0-1h0m0 1h0m0 0h0m0-1h0m1 1h0m0-1h0m0 0h0m0 1h0m0 0h0m0 0h0m0-1h0m1 1h0m0-1h0m0 0h0m0 1h0m0-2h0m0 0h0m0 1h0m1 0h0m0 0h0m0 1h0m0 0h0m0 0h0m0-1h0m1 1h0m0-1h0m0 0h0m0 1h0m0-1h0m0 0h0m0 0h0m1 1h0m0-1h0m0 1h0m0 0h0m0-1h0m0 1h0m0-1h0m1 0h0m0 1h0m0-1h0m0-1h0m0 1h0m0 1h0m1-1h0m0 1h0m0-2h0m0 2h0m0-1h0m0 0h0m0 0h0m1 0h0m0 0h0m0-1h0m0 0h0m0 0h0m0 1h0m0 1h0m1-1h0m0 0h0m0 0h0m0-1h0m0 1h0m0 0h0m0 0h0m1 0h0m0 0h0m0 1h0m0-2h0m0 1h0m0 0h0m1 1h0m0-2h0m0 2h0m0-1h0m0 0h0m0 1h0m0-1h0m1 0h0m0 0h0m0 1h0m0 0h0m0-1h0m0-1h0m0 2h0m1-2h0m0 1h0m0 1h0m0-1h0m0 0h0m0-1h0m0 1h0m1 0h0m0 0h0m0 0h0m0 2h0m0-2h0m0 0h0m1 1h0m0-2h0m0 1h0m0 0h0m0 0h0m0-1h0m0 0h0m1 1h0m0 0h0m0 1h0m0-1h0m0 0h0m0 0h0m0-1h0m1 1h0m0 1h0m0-1h0m0-1h0m0 1h0m0 0h0m1-1h0m0 2h0m0-2h0m0 1h0m0 0h0m0-1h0m0 0h0m1 1h0m0 0h0m0-1h0m0 0h0m0 0h0m0 1h0m0 0h0m1-1h0m0 1h0m0 0h0m0-1h0m0 0h0m0 1h0m0 0h0m1 0h0m0-1h0m0 1h0m0-2h0m0 1h0m0 0h0m1 1h0m0-1h0m0 2h0m0-2h0m0 1h0m0 0h0m0-1h0m1 2h0m0 0h0m0-2h0m0 0h0m0 0h0m0 2h0m0-2h0m1 1h0m0 0h0m0-2h0m0 1h0m0 1h0m0-1h0m1 1h0m0 0h0m0-1h0m0-1h0m0 2h0m0 0h0m0-1h0m1 0h0m0 0h0m0 0h0m0 1h0m0-1h0m0 1h0m0 0h0m1 1h0m0-1h0m0 0h0m0 0h0m0 1h0m0-1h0m0-1h0m1 2h0m0-1h0m0 0h0m0 0h0m0 0h0m0 0h0m1 0h0m0-1h0m0 1h0m0 0h0m0 0h0m0 1h0m0-1h0m1 0h0m0 1h0m0-2h0m0 1h0m0-1h0m0 0h0m0 1h0m1-1h0m0 1h0m0 1h0m0-2h0m0 1h0m0 1h0m1-1h0m0-1h0m0 0h0m0 2h0m0 0h0m0-2h0m0 1h0m1-1h0m0 0h0m0 1h0m0 1h0m0-1h0m0 0h0m0 0h0m1 0h0m0 0h0m0 1h0m0 0h0m0 0h0m0-2h0m0 0h0m1 1h0m0 0h0m0 1h0m0-1h0m0 0h0m0 0h0m1 0h0m0-1h0m0 0h0m0 1h0m0 0h0m0 1h0m0-2h0m1 2h0m0-1h0m0 1h0m0-2h0m0 1h0m0-1h0m0 2h0m1-1h0m0 0h0m0 1h0m0-1h0m0-1h0m0 1h0m1 0h0m0 0h0m0 0h0m0-1h0m0 1h0m0 2h0m0-2h0m1 0h0m0 1h0m0 0h0m0-1h0m0 1h0m0-1h0m0 1h0m1 0h0m0 0h0m0-2h0m0 2h0m0-1h0m0 0h0m0-1h0m1 1h0m0 1h0m0 0h0m0-1h0m0 0h0m0 0h0m1 0h0m0 0h0m0 1h0m0-1h0m0 0h0m0 0h0m0 0h0m1 0h0m0 0h0m0 0h0m0 1h0m0-1h0m0 0h0m0 0h0m1 1h0m0-1h0m0 0h0m0-1h0m0 2h0m0-2h0m1-1h0m0 3h0m0 0h0m0-2h0m0 1h0m0 0h0m0-1h0m1 1h0m0 0h0m0 0h0m0 0h0m0 1h0m0-1h0m0 0h0m1 0h0m0-1h0m0 1h0m0 0h0m0 1h0m0-1h0m0-1h0m1 1h0m0 0h0m0 0h0m0-1h0m0 1h0m0 0h0m1-1h0m0 1h0m0-1h0m0 0h0m0 1h0m0 0h0m0 0h0m1 0h0m0 0h0m0 0h0m0-1h0m0 0h0m0-1h0m0 2h0m1 0h0m0 0h0m0 0h0m0 0h0m0 0h0m0 0h0m1 1h0m0-1h0m0 0h0m0 0h0m0 0h0m0 0h0m0-1h0m1 2h0m0 0h0m0-1h0m0 0h0m0 0h0m0 1h0m0-1h0m1 1h0m0 0h0m0-1h0m0 1h0m0 0h0m0-1h0m0 0h0m1 2h0m0-1h0m0-1h0m0 0h0m0 0h0m0 1h0m1-1h0m0 1h0m0 0h0m0-1h0m0 0h0m0 0h0m0 0h0m1 0h0m0 1h0m0-2h0m0 2h0m0-1h0m0 0h0m0 0h0m1 1h0m0 0h0m0-1h0m0 0h0m0 0h0m0 0h0m1 1h0m0-1h0m0 0h0m0 1h0m0-1h0m0 0h0m0 0h0m1 0h0m0 0h0m0 1h0m0-1h0m0 0h0m0 0h0m0 1h0m1-2h0m0 2h0m0-1h0m0 1h0m0-1h0m0-2h0m0 2h0m1-1h0m0 2h0m0-1h0m0-1h0m0 1h0m0 1h0m1-1h0m0 0h0m0-1h0m0 0h0m0 0h0m0 1h0m0-1h0m1 1h0m0 0h0m0 1h0m0-1h0m0 1h0m0 0h0m0-1h0m1 0h0m0-1h0m0 0h0m0 0h0m0 1h0m0-2h0m0 0h0m1 2h0m0 1h0m0-1h0m0-1h0m0 0h0m0 0h0m1 0h0m0 0h0m0 1h0m0 0h0m0-2h0m0 1h0m0 0h0m1 2h0m0-1h0m0 1h0m0-1h0m0 0h0m0 0h0m0-1h0m1 1h0m0 0h0m0-1h0m0 2h0m0-2h0m0 0h0m1 0h0m0 2h0m0-2h0m0 1h0m0-1h0m0 1h0m0 0h0m1 0h0m0 0h0m0 0h0m0 0h0m0 0h0m0 1h0m0-1h0m1 0h0m0 0h0m0 0h0m0 0h0m0-1h0m0 1h0m0 0h0m1 0h0m0 1h0m0 0h0m0-1h0m0 0h0m0-1h0m1 1h0m0 0h0m0 0h0m0 1h0m0 0h0m0 0h0m0-1h0m1 0h0" stroke="#000" stroke-width="2.5" stroke-linecap="round" fill="none"/>
<path d="M434.5 999.5h0m133-5h0m55 5h0m32 1h0m39-7h0m46 9h0m-59-5h0m204 6h0m194-7h0m42 7h0m99-2h0m13-3h0m4-1h0m37 2h0m15-5h0" stroke="#000" stroke-width="2.6" stroke-linecap="round" fill="none"/>
<path d="M226.5 977.5h0m110-5h0m119-3h0m89-8h0m3 24h0m3-5h0m19 7h0m7 2h0m48-15h0m6 8h0m35-13h0m12 17h0m1 3h0" stroke="#ff0000" stroke-width="2.6" stroke-linecap="round" fill="none"/>
<path d="M365.8 959.4h3.4l-1.7-3.5zM547.8 959.4h3.4l-1.7-3.5zM549.8 959.4h3.4l-1.7-3.5zM559.6 959.4h3.4l-1.7-3.5zM568.7 959.4h3.4l-1.7-3.5zM628.8 959.4h3.4l-1.7-3.5zM651.8 959.4h3.4l-1.7-3.5zM659.8 959.4h3.4l-1.7-3.5zM665.3 959.4h3.4l-1.7-3.5zM716.8 959.4h3.4l-1.7-3.5zM757.2 959.4h3.4l-1.7-3.5zM1176.2 959.4h3.4l-1.7-3.5z" fill="#ff0000" stroke="#ff0000" stroke-width="0.3"/>
<path d="M162 1011.5V954.5" stroke="#800080" stroke-width="2.08" stroke-dasharray="2.08 3.44" fill="none"/>
<path d="M541 1011.5V954.5" stroke="#800080" stroke-width="2.08" stroke-dasharray="2.08 3.44" fill="none"/>
<path d="M1303 1011.5V954.5" stroke="#800080" stroke-width="2.08" stroke-dasharray="2.08 3.44" fill="none"/>
</g>
<rect x="105.5" y="954.5" width="1380.0" height="57.0" fill="none" stroke="#000" stroke-width="1.11"/>
<path d="M162.5 1011.5v4.86" stroke="#000" stroke-width="1.11"/>
<path d="M460.5 1011.5v4.86" stroke="#000" stroke-width="1.11"/>
<path d="M758.5 1011.5v4.86" stroke="#000" stroke-width="1.11"/>
<path d="M1056.5 1011.5v4.86" stroke="#000" stroke-width="1.11"/>
<path d="M1353.5 1011.5v4.86" stroke="#000" stroke-width="1.11"/>
<g font-family='"Liberation Sans", sans-serif' fill="#000">
<text x="163.3" y="1032.0" font-size="13.89" text-anchor="middle" textLength="8.75" lengthAdjust="spacingAndGlyphs">0</text>
<text x="460.1" y="1032.0" font-size="13.89" text-anchor="middle" textLength="35" lengthAdjust="spacingAndGlyphs">2000</text>
<text x="757.9" y="1032.0" font-size="13.89" text-anchor="middle" textLength="35" lengthAdjust="spacingAndGlyphs">4000</text>
<text x="1055.7" y="1032.0" font-size="13.89" text-anchor="middle" textLength="35" lengthAdjust="spacingAndGlyphs">6000</text>
<text x="1353.4" y="1032.0" font-size="13.89" text-anchor="middle" textLength="35.125" lengthAdjust="spacingAndGlyphs">8000</text>
</g>
<g font-family='"Liberation Sans", sans-serif' fill="#000">
<path d="M105.5 1009.5h-4.86" stroke="#000" stroke-width="1.11"/>
<text x="95.6" y="1013.9" font-size="13.89" text-anchor="end" textLength="6.95" lengthAdjust="spacingAndGlyphs">0</text>
<path d="M105.5 983.5h-4.86" stroke="#000" stroke-width="1.11"/>
<text x="94.6" y="987.9" font-size="13.89" text-anchor="end" textLength="6.95" lengthAdjust="spacingAndGlyphs">5</text>
<path d="M105.5 957.5h-4.86" stroke="#000" stroke-width="1.11"/>
<text x="94.6" y="961.9" font-size="13.89" text-anchor="end" textLength="15.825" lengthAdjust="spacingAndGlyphs">10</text>
<path d="M105.5 996.5h-2.78" stroke="#000" stroke-width="0.83"/>
<path d="M105.5 970.5h-2.78" stroke="#000" stroke-width="0.83"/>
<text x="0" y="0" font-size="13.89" text-anchor="middle" textLength="14.625" lengthAdjust="spacingAndGlyphs" transform="translate(68.8 983.5) rotate(-90)">dr</text>
</g>
<g font-family='"Liberation Sans", sans-serif' fill="#000">
<rect x="1361.3" y="42.6" width="117.4" height="26.9" rx="2.8" ry="2.8" fill="#fff" fill-opacity="0.8" stroke="#cccccc" stroke-width="1.11"/>
<path d="M1366 54H1396" stroke="#008000" stroke-width="2.08"/>
<text x="1407.7" y="58.8" font-size="13.89" text-anchor="start" textLength="31" lengthAdjust="spacingAndGlyphs">mag</text>
<text x="1436.8" y="61.2" font-size="10.8" text-anchor="start" textLength="35" lengthAdjust="spacingAndGlyphs" font-style="italic">AGASC</text>
<rect x="1348.3" y="247.5" width="130.4" height="66.6" rx="2.8" ry="2.8" fill="#fff" fill-opacity="0.8" stroke="#cccccc" stroke-width="1.11"/>
<path d="M1367.5 260.3h0" stroke="#ff0000" stroke-width="3.7" stroke-linecap="round"/>
<path d="M1367.5 281.3h0" stroke="#ffa500" stroke-width="3.7" stroke-linecap="round"/>
<path d="M1367.5 302.4h0" stroke="#000" stroke-width="3.7" stroke-linecap="round"/>
<text x="1392.8" y="264.2" font-size="13.89" text-anchor="start" textLength="47" lengthAdjust="spacingAndGlyphs">not OK</text>
<text x="1392.8" y="285.0" font-size="13.89" text-anchor="start" textLength="80.125" lengthAdjust="spacingAndGlyphs">Highlighted</text>
<text x="1392.8" y="305.9" font-size="13.89" text-anchor="start" textLength="19.875" lengthAdjust="spacingAndGlyphs">OK</text>
<rect x="1365.4" y="387.6" width="113.3" height="48.0" rx="2.8" ry="2.8" fill="#fff" fill-opacity="0.8" stroke="#cccccc" stroke-width="1.11"/>
<path d="M1369.5 399.5H1399.5" stroke="#ffa500" stroke-width="2.78"/>
<path d="M1369.5 421.7H1398.5" stroke="#ff0000" stroke-width="2.08"/>
<text x="1410.4" y="403.8" font-size="13.89" text-anchor="start" textLength="31" lengthAdjust="spacingAndGlyphs">mag</text>
<text x="1439.8" y="406.2" font-size="10.8" text-anchor="start" textLength="31.5" lengthAdjust="spacingAndGlyphs" font-style="italic">OBSID</text>
<text x="1409.6" y="426.5" font-size="13.89" text-anchor="start" textLength="29.3" lengthAdjust="spacingAndGlyphs">mag</text>
<rect x="1348.3" y="613.3" width="130.4" height="45.9" rx="2.8" ry="2.8" fill="#fff" fill-opacity="0.8" stroke="#cccccc" stroke-width="1.11"/>
<path d="M1367.5 626.5h0" stroke="#ffa500" stroke-width="3.7" stroke-linecap="round"/>
<path d="M1367.5 647.3h0" stroke="#000" stroke-width="3.7" stroke-linecap="round"/>
<text x="1392.8" y="629.6" font-size="13.89" text-anchor="start" textLength="80.125" lengthAdjust="spacingAndGlyphs">Highlighted</text>
<text x="1392.8" y="650.4" font-size="13.89" text-anchor="start" textLength="19.875" lengthAdjust="spacingAndGlyphs">OK</text>
</g>
</svg>
</body></html>
